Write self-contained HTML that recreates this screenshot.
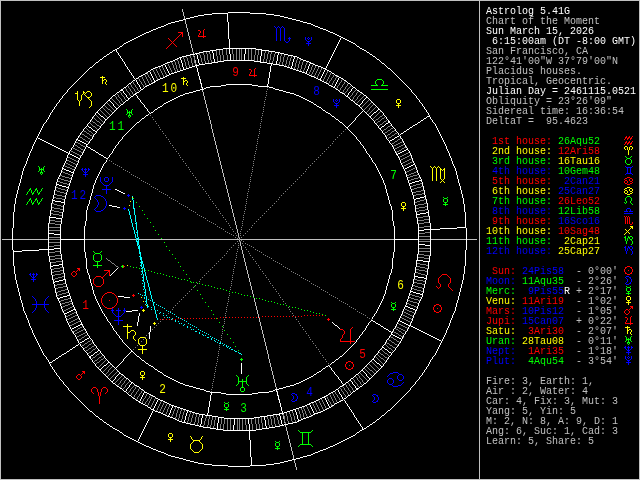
<!DOCTYPE html>
<html><head><meta charset="utf-8"><title>Astrolog 5.41G</title>
<style>
html,body{margin:0;padding:0;background:#000;overflow:hidden}
#c{position:relative;width:640px;height:480px;background:#000;overflow:hidden}
svg{position:absolute;left:0;top:0;will-change:transform}
svg text{font-family:"Liberation Mono",monospace;font-size:13px;text-anchor:middle;stroke:none}
#sb{position:absolute;left:486px;top:7px;font:10px/10px "Liberation Mono",monospace;color:#c0c0c0;will-change:transform}
.r{position:absolute;left:0;white-space:pre;height:10px}
.w{color:#fff}.g{color:#c0c0c0}.cr{color:#f00}.cy{color:#ff0}.cg{color:#0f0}.cb{color:#00f}
</style></head><body><div id="c">
<svg width="640" height="480" viewBox="0 0 640 480" shape-rendering="crispEdges" stroke-width="1" fill="none">
<path stroke="#c0c0c0" d="M2 239.5h475M182.5 9v3M183.5 12v4M184.5 16v4M185.5 20v4M186.5 24v4M187.5 28v4M188.5 32v4M189.5 36v4M190.5 40v4M191.5 44v4M192.5 48v4M193.5 52v4M194.5 56v4M195.5 60v4M196.5 64v4M197.5 68v4M198.5 72v4M199.5 76v4M200.5 80v4M201.5 84v4M202.5 88v4M203.5 92v4M204.5 96v4M205.5 100v4M206.5 104v4M207.5 108v4M208.5 112v4M209.5 116v4M210.5 120v4M211.5 124v5M212.5 129v4M213.5 133v4M214.5 137v4M215.5 141v4M216.5 145v4M217.5 149v4M218.5 153v4M219.5 157v4M220.5 161v4M221.5 165v4M222.5 169v4M223.5 173v4M224.5 177v4M225.5 181v4M226.5 185v4M227.5 189v4M228.5 193v4M229.5 197v4M230.5 201v4M231.5 205v4M232.5 209v4M233.5 213v4M234.5 217v4M235.5 221v4M236.5 225v4M237.5 229v4M238.5 233v4M239.5 237v5M240.5 242v4M241.5 246v4M242.5 250v4M243.5 254v4M244.5 258v4M245.5 262v4M246.5 266v4M247.5 270v4M248.5 274v4M249.5 278v4M250.5 282v4M251.5 286v4M252.5 290v4M253.5 294v4M254.5 298v4M255.5 302v4M256.5 306v4M257.5 310v4M258.5 314v4M259.5 318v4M260.5 322v4M261.5 326v4M262.5 330v4M263.5 334v4M264.5 338v4M265.5 342v4M266.5 346v4M267.5 350v4M268.5 354v5M269.5 359v4M270.5 363v4M271.5 367v4M272.5 371v4M273.5 375v4M274.5 379v4M275.5 383v4M276.5 387v4M277.5 391v4M278.5 395v4M279.5 399v4M280.5 403v4M281.5 407v4M282.5 411v4M283.5 415v4M284.5 419v4M285.5 423v4M286.5 427v4M287.5 431v4M288.5 435v4M289.5 439v4M290.5 443v4M291.5 447v4M292.5 451v4M293.5 455v4M294.5 459v4M295.5 463v4M296.5 467v3"/>
<path stroke="#808080" d="M232 48.5h1M236 48.5h1M239 48.5h1M241 48.5h1M219 49.5h1M222 49.5h1M226 49.5h1M232 49.5h1M236 49.5h1M239 49.5h1M241 49.5h1M248 49.5h1M251 49.5h1M255 49.5h1M258 49.5h1M216 50.5h1M219 50.5h1M222 50.5h1M226 50.5h1M232 50.5h1M236 50.5h1M239 50.5h1M241 50.5h1M248 50.5h1M251 50.5h1M255 50.5h1M258 50.5h1M265 50.5h1M206 51.5h1M209 51.5h1M216 51.5h1M219 51.5h1M222 51.5h1M226 51.5h1M232 51.5h1M236 51.5h1M239 51.5h1M241 51.5h1M248 51.5h1M251 51.5h1M255 51.5h1M258 51.5h1M265 51.5h1M268 51.5h1M271 51.5h1M203 52.5h1M206 52.5h1M209 52.5h1M216 52.5h1M219 52.5h1M222 52.5h1M226 52.5h1M232 52.5h1M236 52.5h1M239 52.5h1M241 52.5h1M248 52.5h1M251 52.5h1M255 52.5h1M258 52.5h1M265 52.5h1M268 52.5h1M271 52.5h1M275 52.5h1M199 53.5h1M203 53.5h1M206 53.5h1M209 53.5h1M216 53.5h1M219 53.5h1M222 53.5h1M226 53.5h1M232 53.5h1M236 53.5h1M239 53.5h1M241 53.5h1M248 53.5h1M251 53.5h1M255 53.5h1M258 53.5h1M264 53.5h1M268 53.5h1M271 53.5h1M275 53.5h1M281 53.5h1M193 54.5h1M199 54.5h1M203 54.5h1M207 54.5h1M210 54.5h1M216 54.5h1M219 54.5h1M222 54.5h1M226 54.5h1M233 54.5h1M236 54.5h1M239 54.5h1M241 54.5h1M248 54.5h1M251 54.5h1M255 54.5h1M258 54.5h1M264 54.5h1M267 54.5h1M270 54.5h1M274 54.5h1M281 54.5h1M284 54.5h1M190 55.5h1M193 55.5h1M200 55.5h1M204 55.5h1M207 55.5h1M210 55.5h1M216 55.5h1M220 55.5h1M223 55.5h1M227 55.5h1M233 55.5h1M236 55.5h1M239 55.5h1M241 55.5h1M248 55.5h1M251 55.5h1M254 55.5h1M257 55.5h1M264 55.5h1M267 55.5h1M270 55.5h1M274 55.5h1M281 55.5h1M284 55.5h1M288 55.5h1M186 56.5h1M190 56.5h1M193 56.5h1M200 56.5h1M204 56.5h1M207 56.5h1M210 56.5h1M217 56.5h1M220 56.5h1M223 56.5h1M227 56.5h1M233 56.5h1M236 56.5h1M239 56.5h1M241 56.5h1M248 56.5h1M251 56.5h1M254 56.5h1M257 56.5h1M264 56.5h1M267 56.5h1M270 56.5h1M274 56.5h1M280 56.5h1M284 56.5h1M288 56.5h1M291 56.5h1M183 57.5h1M186 57.5h1M190 57.5h1M194 57.5h1M200 57.5h1M204 57.5h1M207 57.5h1M210 57.5h1M217 57.5h1M220 57.5h1M223 57.5h1M227 57.5h1M233 57.5h1M236 57.5h1M239 57.5h1M241 57.5h1M248 57.5h1M251 57.5h1M254 57.5h1M257 57.5h1M264 57.5h1M267 57.5h1M270 57.5h1M273 57.5h1M280 57.5h1M283 57.5h1M287 57.5h1M291 57.5h1M183 58.5h1M187 58.5h1M191 58.5h1M194 58.5h1M201 58.5h1M204 58.5h1M207 58.5h1M210 58.5h1M217 58.5h1M220 58.5h1M223 58.5h1M227 58.5h1M233 58.5h1M236 58.5h1M239 58.5h1M241 58.5h1M248 58.5h1M251 58.5h1M254 58.5h1M257 58.5h1M264 58.5h1M267 58.5h1M270 58.5h1M273 58.5h1M280 58.5h1M283 58.5h1M287 58.5h1M290 58.5h1M297 58.5h1M177 59.5h1M184 59.5h1M187 59.5h1M191 59.5h1M194 59.5h1M201 59.5h1M204 59.5h1M207 59.5h1M210 59.5h1M217 59.5h1M220 59.5h1M223 59.5h1M227 59.5h1M233 59.5h1M236 59.5h1M239 59.5h1M241 59.5h1M248 59.5h1M251 59.5h1M254 59.5h1M257 59.5h1M263 59.5h1M266 59.5h1M270 59.5h1M273 59.5h1M280 59.5h1M283 59.5h1M287 59.5h1M290 59.5h1M297 59.5h1M300 59.5h1M174 60.5h1M177 60.5h1M184 60.5h1M187 60.5h1M191 60.5h1M194 60.5h1M201 60.5h1M204 60.5h1M208 60.5h1M211 60.5h1M217 60.5h1M220 60.5h1M223 60.5h1M227 60.5h1M251 60.5h1M254 60.5h1M257 60.5h1M263 60.5h1M266 60.5h1M269 60.5h1M273 60.5h1M280 60.5h1M283 60.5h1M286 60.5h1M290 60.5h1M296 60.5h1M300 60.5h1M303 60.5h1M171 61.5h1M174 61.5h1M178 61.5h1M184 61.5h1M188 61.5h1M191 61.5h1M194 61.5h1M201 61.5h1M205 61.5h1M208 61.5h1M211 61.5h1M217 61.5h1M263 61.5h1M266 61.5h1M269 61.5h1M272 61.5h1M280 61.5h1M283 61.5h1M286 61.5h1M289 61.5h1M296 61.5h1M299 61.5h1M303 61.5h1M307 61.5h1M167 62.5h1M171 62.5h1M175 62.5h1M178 62.5h1M185 62.5h1M188 62.5h1M191 62.5h1M194 62.5h1M202 62.5h1M205 62.5h1M208 62.5h1M211 62.5h1M269 62.5h1M272 62.5h1M279 62.5h1M282 62.5h1M286 62.5h1M289 62.5h1M296 62.5h1M299 62.5h1M302 62.5h1M307 62.5h1M167 63.5h1M172 63.5h1M175 63.5h1M178 63.5h1M185 63.5h1M188 63.5h1M192 63.5h1M195 63.5h1M202 63.5h1M205 63.5h1M279 63.5h1M282 63.5h1M286 63.5h1M289 63.5h1M295 63.5h1M299 63.5h1M302 63.5h1M306 63.5h1M313 63.5h1M168 64.5h1M172 64.5h1M175 64.5h1M179 64.5h1M185 64.5h1M188 64.5h1M192 64.5h1M195 64.5h1M279 64.5h1M282 64.5h1M285 64.5h1M289 64.5h1M295 64.5h1M298 64.5h1M302 64.5h1M306 64.5h1M313 64.5h1M161 65.5h1M168 65.5h1M173 65.5h1M176 65.5h1M179 65.5h1M185 65.5h1M189 65.5h1M192 65.5h1M195 65.5h1M285 65.5h1M288 65.5h1M295 65.5h1M298 65.5h1M301 65.5h1M305 65.5h1M312 65.5h1M316 65.5h1M158 66.5h1M162 66.5h1M169 66.5h1M173 66.5h1M176 66.5h1M179 66.5h1M186 66.5h1M189 66.5h1M288 66.5h1M295 66.5h1M298 66.5h1M301 66.5h1M305 66.5h1M312 66.5h1M315 66.5h1M319 66.5h1M159 67.5h1M162 67.5h1M169 67.5h1M173 67.5h1M176 67.5h1M179 67.5h1M186 67.5h1M294 67.5h1M298 67.5h1M301 67.5h1M305 67.5h1M311 67.5h1M315 67.5h1M318 67.5h1M322 67.5h1M155 68.5h1M159 68.5h1M163 68.5h1M170 68.5h1M174 68.5h1M176 68.5h1M180 68.5h1M294 68.5h1M297 68.5h1M301 68.5h1M304 68.5h1M311 68.5h1M314 68.5h1M318 68.5h1M321 68.5h1M152 69.5h1M156 69.5h1M160 69.5h1M163 69.5h1M170 69.5h1M174 69.5h1M177 69.5h1M180 69.5h1M297 69.5h1M300 69.5h1M304 69.5h1M311 69.5h1M314 69.5h1M317 69.5h1M321 69.5h1M153 70.5h1M156 70.5h1M160 70.5h1M164 70.5h1M171 70.5h1M175 70.5h1M177 70.5h1M300 70.5h1M303 70.5h1M310 70.5h1M313 70.5h1M317 70.5h1M320 70.5h1M328 70.5h1M153 71.5h1M157 71.5h1M161 71.5h1M164 71.5h1M171 71.5h1M175 71.5h1M303 71.5h1M310 71.5h1M313 71.5h1M316 71.5h1M320 71.5h1M327 71.5h1M146 72.5h1M154 72.5h1M157 72.5h1M161 72.5h1M165 72.5h1M172 72.5h1M309 72.5h1M312 72.5h1M316 72.5h1M319 72.5h1M327 72.5h1M331 72.5h1M147 73.5h1M154 73.5h1M158 73.5h1M162 73.5h1M165 73.5h1M172 73.5h1M309 73.5h1M312 73.5h1M315 73.5h1M319 73.5h1M326 73.5h1M330 73.5h1M144 74.5h1M147 74.5h1M155 74.5h1M158 74.5h1M162 74.5h1M166 74.5h1M311 74.5h1M315 74.5h1M318 74.5h1M326 74.5h1M330 74.5h1M334 74.5h1M145 75.5h1M148 75.5h1M155 75.5h1M159 75.5h1M163 75.5h1M166 75.5h1M311 75.5h1M314 75.5h1M318 75.5h1M325 75.5h1M329 75.5h1M333 75.5h1M337 75.5h1M141 76.5h1M145 76.5h1M148 76.5h1M156 76.5h1M159 76.5h1M163 76.5h1M314 76.5h1M317 76.5h1M325 76.5h1M329 76.5h1M333 76.5h1M336 76.5h1M142 77.5h1M146 77.5h1M149 77.5h1M156 77.5h1M160 77.5h1M317 77.5h1M324 77.5h1M328 77.5h1M332 77.5h1M336 77.5h1M138 78.5h1M142 78.5h1M146 78.5h1M150 78.5h1M157 78.5h1M160 78.5h1M324 78.5h1M328 78.5h1M331 78.5h1M335 78.5h1M139 79.5h1M143 79.5h1M147 79.5h1M150 79.5h1M157 79.5h1M323 79.5h1M327 79.5h1M331 79.5h1M335 79.5h1M342 79.5h1M139 80.5h1M143 80.5h1M147 80.5h1M151 80.5h1M323 80.5h1M327 80.5h1M330 80.5h1M334 80.5h1M341 80.5h1M132 81.5h1M140 81.5h1M144 81.5h1M148 81.5h1M151 81.5h1M326 81.5h1M329 81.5h1M333 81.5h1M341 81.5h1M345 81.5h1M133 82.5h1M141 82.5h1M144 82.5h1M148 82.5h1M152 82.5h1M326 82.5h1M329 82.5h1M333 82.5h1M340 82.5h1M344 82.5h1M129 83.5h1M133 83.5h1M141 83.5h1M145 83.5h1M149 83.5h1M328 83.5h1M332 83.5h1M339 83.5h1M344 83.5h1M348 83.5h1M130 84.5h1M134 84.5h1M142 84.5h1M145 84.5h1M149 84.5h1M332 84.5h1M339 84.5h1M343 84.5h1M347 84.5h1M127 85.5h1M131 85.5h1M135 85.5h1M143 85.5h1M146 85.5h1M331 85.5h1M338 85.5h1M342 85.5h1M347 85.5h1M351 85.5h1M128 86.5h1M131 86.5h1M135 86.5h1M143 86.5h1M337 86.5h1M342 86.5h1M346 86.5h1M350 86.5h1M124 87.5h1M128 87.5h1M132 87.5h1M136 87.5h1M144 87.5h1M337 87.5h1M341 87.5h1M345 87.5h1M349 87.5h1M125 88.5h1M129 88.5h1M133 88.5h1M137 88.5h1M336 88.5h1M340 88.5h1M345 88.5h1M348 88.5h1M126 89.5h1M130 89.5h1M134 89.5h1M137 89.5h1M340 89.5h1M344 89.5h1M347 89.5h1M356 89.5h1M126 90.5h1M130 90.5h1M134 90.5h1M138 90.5h1M339 90.5h1M343 90.5h1M347 90.5h1M355 90.5h1M119 91.5h1M127 91.5h1M131 91.5h1M135 91.5h1M343 91.5h1M346 91.5h1M354 91.5h1M358 91.5h1M120 92.5h1M128 92.5h1M132 92.5h1M136 92.5h1M342 92.5h1M345 92.5h1M353 92.5h1M357 92.5h1M116 93.5h1M121 93.5h1M129 93.5h1M132 93.5h1M344 93.5h1M352 93.5h1M356 93.5h1M361 93.5h1M117 94.5h1M121 94.5h1M129 94.5h1M133 94.5h1M352 94.5h1M356 94.5h1M360 94.5h1M114 95.5h1M118 95.5h1M122 95.5h1M130 95.5h1M351 95.5h1M355 95.5h1M359 95.5h1M364 95.5h1M115 96.5h1M118 96.5h1M123 96.5h1M131 96.5h1M350 96.5h1M354 96.5h1M358 96.5h1M363 96.5h1M116 97.5h1M119 97.5h1M124 97.5h1M349 97.5h1M353 97.5h1M357 97.5h1M362 97.5h1M111 98.5h1M116 98.5h1M120 98.5h1M124 98.5h1M353 98.5h1M357 98.5h1M361 98.5h1M112 99.5h1M117 99.5h1M121 99.5h1M125 99.5h1M352 99.5h1M356 99.5h1M360 99.5h1M369 99.5h1M113 100.5h1M118 100.5h1M121 100.5h1M126 100.5h1M355 100.5h1M359 100.5h1M368 100.5h1M114 101.5h1M119 101.5h1M122 101.5h1M354 101.5h1M358 101.5h1M367 101.5h1M106 102.5h1M115 102.5h1M119 102.5h1M123 102.5h1M357 102.5h1M366 102.5h1M371 102.5h1M107 103.5h1M116 103.5h1M120 103.5h1M356 103.5h1M365 103.5h1M370 103.5h1M108 104.5h1M117 104.5h1M121 104.5h1M364 104.5h1M369 104.5h1M373 104.5h1M104 105.5h1M109 105.5h1M118 105.5h1M363 105.5h1M368 105.5h1M372 105.5h1M105 106.5h1M110 106.5h1M119 106.5h1M362 106.5h1M367 106.5h1M371 106.5h1M376 106.5h1M102 107.5h1M106 107.5h1M111 107.5h1M361 107.5h1M366 107.5h1M370 107.5h1M375 107.5h1M103 108.5h1M107 108.5h1M112 108.5h1M365 108.5h1M369 108.5h1M374 108.5h1M99 109.5h1M104 109.5h1M108 109.5h2M113 109.5h1M364 109.5h1M369 109.5h1M373 109.5h1M100 110.5h1M105 110.5h1M110 110.5h1M114 110.5h1M363 110.5h1M368 110.5h1M372 110.5h1M101 111.5h1M106 111.5h1M111 111.5h1M367 111.5h1M371 111.5h1M380 111.5h1M102 112.5h1M107 112.5h1M112 112.5h1M366 112.5h1M370 112.5h1M379 112.5h1M103 113.5h1M108 113.5h1M369 113.5h1M378 113.5h1M95 114.5h1M104 114.5h1M109 114.5h1M368 114.5h1M377 114.5h1M383 114.5h1M96 115.5h1M105 115.5h1M110 115.5h1M376 115.5h1M382 115.5h1M97 116.5h1M106 116.5h1M375 116.5h1M380 116.5h2M385 116.5h1M93 117.5h1M98 117.5h1M107 117.5h1M374 117.5h1M379 117.5h1M384 117.5h1M94 118.5h1M99 118.5h1M373 118.5h1M378 118.5h1M382 118.5h2M95 119.5h1M100 119.5h1M372 119.5h1M376 119.5h2M381 119.5h1M387 119.5h1M91 120.5h1M96 120.5h1M101 120.5h1M375 120.5h1M380 120.5h1M386 120.5h1M92 121.5h1M97 121.5h2M102 121.5h1M374 121.5h1M378 121.5h2M384 121.5h2M89 122.5h1M93 122.5h2M99 122.5h1M103 122.5h1M377 122.5h1M383 122.5h1M90 123.5h1M95 123.5h1M100 123.5h1M376 123.5h1M382 123.5h1M91 124.5h1M96 124.5h1M101 124.5h1M380 124.5h2M391 124.5h1M92 125.5h1M97 125.5h2M379 125.5h1M390 125.5h1M93 126.5h2M99 126.5h1M378 126.5h1M388 126.5h2M85 127.5h1M95 127.5h1M387 127.5h1M393 127.5h1M86 128.5h1M96 128.5h1M386 128.5h1M391 128.5h2M87 129.5h1M97 129.5h1M384 129.5h2M390 129.5h1M395 129.5h1M83 130.5h1M88 130.5h1M383 130.5h1M388 130.5h2M394 130.5h1M84 131.5h2M89 131.5h2M382 131.5h1M387 131.5h1M392 131.5h2M86 132.5h1M91 132.5h1M385 132.5h2M391 132.5h1M397 132.5h1M81 133.5h1M87 133.5h2M92 133.5h1M384 133.5h1M390 133.5h1M395 133.5h2M82 134.5h2M89 134.5h1M93 134.5h1M388 134.5h2M394 134.5h1M84 135.5h1M90 135.5h2M387 135.5h1M392 135.5h2M79 136.5h1M85 136.5h2M92 136.5h1M386 136.5h1M391 136.5h1M80 137.5h2M87 137.5h1M389 137.5h2M82 138.5h1M88 138.5h2M388 138.5h1M400 138.5h1M83 139.5h2M90 139.5h1M398 139.5h2M85 140.5h1M397 140.5h1M75 141.5h1M86 141.5h2M395 141.5h2M402 141.5h1M76 142.5h2M88 142.5h1M394 142.5h1M400 142.5h2M78 143.5h2M392 143.5h2M398 143.5h2M74 144.5h1M80 144.5h1M391 144.5h1M396 144.5h2M403 144.5h2M75 145.5h2M81 145.5h2M394 145.5h2M401 145.5h2M77 146.5h1M83 146.5h2M393 146.5h1M399 146.5h2M406 146.5h1M72 147.5h1M78 147.5h2M85 147.5h1M397 147.5h2M404 147.5h2M73 148.5h2M80 148.5h1M395 148.5h2M402 148.5h2M75 149.5h2M81 149.5h2M394 149.5h1M401 149.5h1M70 150.5h1M77 150.5h2M83 150.5h1M399 150.5h2M71 151.5h2M79 151.5h2M397 151.5h2M73 152.5h2M81 152.5h2M396 152.5h1M408 152.5h2M75 153.5h2M406 153.5h2M77 154.5h2M404 154.5h2M79 155.5h2M402 155.5h2M409 155.5h2M67 156.5h1M400 156.5h2M407 156.5h2M68 157.5h2M399 157.5h1M405 157.5h2M70 158.5h2M403 158.5h2M411 158.5h2M66 159.5h1M72 159.5h2M401 159.5h2M409 159.5h2M67 160.5h2M74 160.5h2M400 160.5h1M407 160.5h2M69 161.5h2M76 161.5h2M405 161.5h2M412 161.5h2M65 162.5h1M71 162.5h2M403 162.5h2M410 162.5h2M66 163.5h2M73 163.5h2M402 163.5h1M408 163.5h2M68 164.5h2M75 164.5h2M406 164.5h2M63 165.5h2M70 165.5h2M404 165.5h2M65 166.5h2M72 166.5h2M403 166.5h1M67 167.5h3M74 167.5h2M415 167.5h2M70 168.5h2M413 168.5h2M72 169.5h2M411 169.5h2M409 170.5h2M61 171.5h2M407 171.5h2M416 171.5h2M63 172.5h2M405 172.5h2M414 172.5h2M65 173.5h3M411 173.5h3M68 174.5h2M409 174.5h2M417 174.5h2M60 175.5h2M70 175.5h2M407 175.5h2M413 175.5h4M62 176.5h3M410 176.5h3M65 177.5h4M408 177.5h2M418 177.5h2M59 178.5h2M69 178.5h2M414 178.5h4M61 179.5h3M411 179.5h3M64 180.5h4M409 180.5h2M58 181.5h2M68 181.5h2M60 182.5h3M63 183.5h4M420 183.5h2M67 184.5h2M416 184.5h4M413 185.5h3M411 186.5h2M421 186.5h2M56 187.5h2M417 187.5h4M58 188.5h3M414 188.5h3M61 189.5h4M412 189.5h2M55 190.5h2M65 190.5h2M421 190.5h3M57 191.5h3M416 191.5h5M60 192.5h4M413 192.5h3M64 193.5h2M422 193.5h3M54 194.5h3M416 194.5h6M57 195.5h5M413 195.5h3M62 196.5h3M53 197.5h3M56 198.5h6M62 199.5h3M424 199.5h2M420 200.5h4M417 201.5h3M415 202.5h2M52 203.5h2M424 203.5h3M54 204.5h3M418 204.5h6M57 205.5h4M415 205.5h3M61 206.5h2M425 206.5h3M51 207.5h3M419 207.5h6M54 208.5h6M416 208.5h3M60 209.5h3M425 209.5h3M51 210.5h3M419 210.5h6M54 211.5h5M416 211.5h3M59 212.5h3M50 213.5h3M53 214.5h6M59 215.5h3M423 216.5h6M417 217.5h6M424 219.5h6M49 220.5h6M418 220.5h6M55 221.5h6M424 222.5h6M49 223.5h6M418 223.5h6M55 224.5h6M424 226.5h6M49 227.5h12M418 227.5h6M49 230.5h11M425 232.5h6M419 233.5h6M419 236.5h12M48 237.5h12M48 239.5h12M419 239.5h12M419 241.5h12M48 242.5h12M54 245.5h6M48 246.5h6M419 248.5h11M55 251.5h6M418 251.5h12M49 252.5h6M418 254.5h6M55 255.5h6M424 255.5h6M49 256.5h6M418 257.5h6M55 258.5h6M424 258.5h6M49 259.5h6M56 261.5h6M50 262.5h6M417 263.5h3M420 264.5h6M426 265.5h3M417 266.5h3M60 267.5h3M420 267.5h5M54 268.5h6M425 268.5h3M51 269.5h3M416 269.5h3M60 270.5h3M419 270.5h6M54 271.5h6M425 271.5h3M51 272.5h3M416 272.5h2M61 273.5h3M418 273.5h3M55 274.5h6M421 274.5h4M52 275.5h3M425 275.5h2M62 276.5h2M58 277.5h4M55 278.5h3M53 279.5h2M414 279.5h3M417 280.5h6M423 281.5h3M414 282.5h3M63 283.5h3M417 283.5h5M57 284.5h6M422 284.5h3M54 285.5h3M413 285.5h2M63 286.5h3M415 286.5h3M58 287.5h5M418 287.5h4M55 288.5h3M412 288.5h2M422 288.5h2M65 289.5h2M414 289.5h3M61 290.5h4M417 290.5h4M58 291.5h3M421 291.5h2M56 292.5h2M66 292.5h2M62 293.5h4M59 294.5h3M410 294.5h2M57 295.5h2M412 295.5h3M415 296.5h4M409 297.5h2M419 297.5h2M68 298.5h2M411 298.5h3M64 299.5h4M414 299.5h4M61 300.5h3M408 300.5h2M418 300.5h2M59 301.5h2M69 301.5h2M410 301.5h3M65 302.5h4M413 302.5h4M62 303.5h3M70 303.5h2M407 303.5h2M417 303.5h2M60 304.5h2M68 304.5h2M409 304.5h2M65 305.5h3M411 305.5h3M63 306.5h2M72 306.5h2M414 306.5h2M61 307.5h2M70 307.5h2M416 307.5h2M68 308.5h2M66 309.5h2M405 309.5h2M64 310.5h2M407 310.5h2M62 311.5h2M403 311.5h1M409 311.5h3M74 312.5h2M404 312.5h2M412 312.5h2M72 313.5h2M406 313.5h2M414 313.5h2M70 314.5h2M402 314.5h1M408 314.5h2M68 315.5h2M75 315.5h2M403 315.5h2M410 315.5h2M66 316.5h2M73 316.5h2M405 316.5h2M412 316.5h2M65 317.5h1M71 317.5h2M401 317.5h1M407 317.5h2M69 318.5h2M77 318.5h2M402 318.5h2M409 318.5h2M67 319.5h2M75 319.5h2M404 319.5h2M411 319.5h2M66 320.5h1M73 320.5h2M406 320.5h2M71 321.5h2M78 321.5h2M408 321.5h2M69 322.5h2M76 322.5h2M410 322.5h2M68 323.5h1M74 323.5h2M398 323.5h1M72 324.5h2M399 324.5h2M70 325.5h2M401 325.5h2M69 326.5h1M82 326.5h1M396 326.5h1M403 326.5h2M80 327.5h2M397 327.5h2M405 327.5h2M78 328.5h2M395 328.5h1M399 328.5h2M407 328.5h2M77 329.5h1M83 329.5h2M396 329.5h2M401 329.5h2M75 330.5h2M81 330.5h2M398 330.5h1M403 330.5h2M73 331.5h2M79 331.5h2M393 331.5h1M399 331.5h2M405 331.5h2M72 332.5h1M77 332.5h2M85 332.5h1M394 332.5h2M401 332.5h1M75 333.5h2M83 333.5h2M396 333.5h2M402 333.5h2M74 334.5h1M81 334.5h2M87 334.5h1M398 334.5h1M404 334.5h1M79 335.5h2M85 335.5h2M399 335.5h2M77 336.5h2M84 336.5h1M390 336.5h1M401 336.5h2M76 337.5h1M82 337.5h2M391 337.5h2M403 337.5h1M81 338.5h1M393 338.5h1M79 339.5h2M388 339.5h1M394 339.5h2M78 340.5h1M90 340.5h1M389 340.5h2M396 340.5h1M88 341.5h2M391 341.5h1M397 341.5h2M87 342.5h1M92 342.5h1M386 342.5h1M392 342.5h2M399 342.5h1M85 343.5h2M91 343.5h1M387 343.5h2M394 343.5h1M84 344.5h1M89 344.5h2M385 344.5h1M389 344.5h1M395 344.5h2M82 345.5h2M88 345.5h1M94 345.5h1M386 345.5h1M390 345.5h2M397 345.5h1M81 346.5h1M87 346.5h1M92 346.5h2M387 346.5h1M392 346.5h1M85 347.5h2M91 347.5h1M96 347.5h1M388 347.5h1M393 347.5h2M84 348.5h1M89 348.5h2M95 348.5h1M389 348.5h2M395 348.5h1M83 349.5h1M88 349.5h1M93 349.5h2M381 349.5h1M391 349.5h1M86 350.5h2M92 350.5h1M382 350.5h1M392 350.5h1M85 351.5h1M91 351.5h1M383 351.5h1M393 351.5h1M89 352.5h2M100 352.5h1M379 352.5h1M384 352.5h1M88 353.5h1M99 353.5h1M380 353.5h1M385 353.5h2M87 354.5h1M97 354.5h2M377 354.5h1M381 354.5h2M387 354.5h1M96 355.5h1M102 355.5h1M378 355.5h1M383 355.5h1M388 355.5h1M95 356.5h1M101 356.5h1M375 356.5h1M379 356.5h1M384 356.5h1M389 356.5h1M93 357.5h2M99 357.5h2M104 357.5h1M376 357.5h1M380 357.5h1M385 357.5h2M92 358.5h1M98 358.5h1M103 358.5h1M377 358.5h1M381 358.5h2M387 358.5h1M91 359.5h1M97 359.5h1M101 359.5h2M106 359.5h1M378 359.5h1M383 359.5h1M95 360.5h2M100 360.5h1M105 360.5h1M379 360.5h1M384 360.5h1M94 361.5h1M99 361.5h1M104 361.5h1M371 361.5h1M380 361.5h1M385 361.5h1M93 362.5h1M97 362.5h2M103 362.5h1M372 362.5h1M381 362.5h1M96 363.5h1M102 363.5h1M368 363.5h1M373 363.5h1M382 363.5h1M95 364.5h1M101 364.5h1M110 364.5h1M369 364.5h1M374 364.5h1M383 364.5h1M100 365.5h1M109 365.5h1M370 365.5h1M375 365.5h1M99 366.5h1M108 366.5h1M112 366.5h1M366 366.5h1M371 366.5h1M376 366.5h1M98 367.5h1M107 367.5h1M111 367.5h1M367 367.5h1M372 367.5h1M377 367.5h1M106 368.5h1M110 368.5h1M115 368.5h1M364 368.5h1M368 368.5h1M373 368.5h1M378 368.5h1M105 369.5h1M109 369.5h1M114 369.5h1M365 369.5h1M369 369.5h1M374 369.5h1M379 369.5h1M104 370.5h1M108 370.5h1M113 370.5h1M366 370.5h1M370 370.5h2M375 370.5h1M103 371.5h1M108 371.5h1M112 371.5h1M117 371.5h1M367 371.5h1M372 371.5h1M376 371.5h1M102 372.5h1M107 372.5h1M111 372.5h1M116 372.5h1M359 372.5h1M368 372.5h1M373 372.5h1M106 373.5h1M110 373.5h1M115 373.5h1M360 373.5h1M369 373.5h1M374 373.5h1M105 374.5h1M109 374.5h1M114 374.5h1M357 374.5h1M361 374.5h1M370 374.5h1M108 375.5h1M113 375.5h1M122 375.5h1M358 375.5h1M362 375.5h1M371 375.5h1M107 376.5h1M112 376.5h1M121 376.5h1M355 376.5h1M359 376.5h1M363 376.5h1M372 376.5h1M111 377.5h1M120 377.5h1M124 377.5h1M356 377.5h1M359 377.5h1M364 377.5h1M110 378.5h1M119 378.5h1M123 378.5h1M352 378.5h1M357 378.5h1M360 378.5h1M365 378.5h1M109 379.5h1M118 379.5h1M122 379.5h1M126 379.5h1M353 379.5h1M357 379.5h1M361 379.5h1M366 379.5h1M117 380.5h1M121 380.5h1M125 380.5h1M354 380.5h1M358 380.5h1M362 380.5h1M367 380.5h1M116 381.5h1M120 381.5h1M124 381.5h1M129 381.5h1M354 381.5h1M359 381.5h1M362 381.5h1M115 382.5h1M120 382.5h1M124 382.5h1M128 382.5h1M347 382.5h1M355 382.5h1M360 382.5h1M363 382.5h1M114 383.5h1M119 383.5h1M123 383.5h1M127 383.5h1M348 383.5h1M356 383.5h1M360 383.5h1M364 383.5h1M118 384.5h1M122 384.5h1M126 384.5h1M345 384.5h1M349 384.5h1M357 384.5h1M361 384.5h1M117 385.5h1M121 385.5h1M125 385.5h1M134 385.5h1M346 385.5h1M349 385.5h1M357 385.5h1M362 385.5h1M121 386.5h1M125 386.5h1M133 386.5h1M136 386.5h1M342 386.5h1M346 386.5h1M350 386.5h1M358 386.5h1M120 387.5h1M124 387.5h1M132 387.5h1M135 387.5h1M343 387.5h1M347 387.5h1M351 387.5h1M359 387.5h1M123 388.5h1M131 388.5h1M135 388.5h1M139 388.5h1M340 388.5h1M344 388.5h1M348 388.5h1M352 388.5h1M122 389.5h1M130 389.5h1M134 389.5h1M138 389.5h1M341 389.5h1M344 389.5h1M348 389.5h1M352 389.5h1M130 390.5h1M133 390.5h1M138 390.5h1M142 390.5h1M341 390.5h1M345 390.5h1M349 390.5h1M353 390.5h1M129 391.5h1M133 391.5h1M137 391.5h1M141 391.5h1M334 391.5h1M342 391.5h1M346 391.5h1M350 391.5h1M354 391.5h1M128 392.5h1M132 392.5h1M136 392.5h1M141 392.5h1M335 392.5h1M343 392.5h1M347 392.5h1M350 392.5h1M127 393.5h1M131 393.5h1M136 393.5h1M140 393.5h1M147 393.5h1M332 393.5h1M335 393.5h1M343 393.5h1M347 393.5h1M351 393.5h1M131 394.5h1M135 394.5h1M139 394.5h1M146 394.5h1M329 394.5h1M333 394.5h1M336 394.5h1M344 394.5h1M348 394.5h1M130 395.5h1M134 395.5h1M139 395.5h1M146 395.5h1M150 395.5h1M330 395.5h1M333 395.5h1M337 395.5h1M345 395.5h1M349 395.5h1M134 396.5h1M138 396.5h1M145 396.5h1M149 396.5h1M152 396.5h1M326 396.5h1M330 396.5h1M334 396.5h1M337 396.5h1M345 396.5h1M133 397.5h1M137 397.5h1M145 397.5h1M149 397.5h1M151 397.5h1M327 397.5h1M331 397.5h1M334 397.5h1M338 397.5h1M346 397.5h1M137 398.5h1M144 398.5h1M148 398.5h1M151 398.5h1M155 398.5h1M327 398.5h1M331 398.5h1M335 398.5h1M339 398.5h1M136 399.5h1M143 399.5h1M147 399.5h1M150 399.5h1M154 399.5h1M321 399.5h1M328 399.5h1M332 399.5h1M335 399.5h1M339 399.5h1M143 400.5h1M147 400.5h1M150 400.5h1M154 400.5h1M318 400.5h1M322 400.5h1M328 400.5h1M332 400.5h1M336 400.5h1M340 400.5h1M142 401.5h1M146 401.5h1M149 401.5h1M153 401.5h1M161 401.5h1M319 401.5h1M322 401.5h1M329 401.5h1M333 401.5h1M336 401.5h1M142 402.5h1M145 402.5h1M149 402.5h1M153 402.5h1M160 402.5h1M164 402.5h1M315 402.5h1M319 402.5h1M323 402.5h1M330 402.5h1M333 402.5h1M337 402.5h1M141 403.5h1M145 403.5h1M148 403.5h1M152 403.5h1M160 403.5h1M163 403.5h1M167 403.5h1M312 403.5h1M316 403.5h1M320 403.5h1M323 403.5h1M330 403.5h1M334 403.5h1M144 404.5h1M148 404.5h1M152 404.5h1M159 404.5h1M163 404.5h1M166 404.5h1M313 404.5h1M316 404.5h1M320 404.5h1M324 404.5h1M331 404.5h1M334 404.5h1M147 405.5h1M151 405.5h1M159 405.5h1M162 405.5h1M166 405.5h1M169 405.5h1M306 405.5h1M313 405.5h1M317 405.5h1M321 405.5h1M324 405.5h1M331 405.5h1M147 406.5h1M151 406.5h1M158 406.5h1M162 406.5h1M165 406.5h1M169 406.5h1M306 406.5h1M314 406.5h1M317 406.5h1M321 406.5h1M325 406.5h1M332 406.5h1M150 407.5h1M158 407.5h1M161 407.5h1M165 407.5h1M168 407.5h1M175 407.5h1M303 407.5h1M307 407.5h1M314 407.5h1M318 407.5h1M322 407.5h1M325 407.5h1M150 408.5h1M157 408.5h1M161 408.5h1M164 408.5h1M168 408.5h1M175 408.5h1M178 408.5h1M301 408.5h1M303 408.5h1M307 408.5h1M315 408.5h1M318 408.5h1M322 408.5h1M326 408.5h1M157 409.5h1M160 409.5h1M164 409.5h1M167 409.5h1M174 409.5h1M178 409.5h1M181 409.5h1M298 409.5h1M301 409.5h1M304 409.5h1M308 409.5h1M315 409.5h1M319 409.5h1M323 409.5h1M326 409.5h1M156 410.5h1M160 410.5h1M163 410.5h1M167 410.5h1M174 410.5h1M177 410.5h1M181 410.5h1M184 410.5h1M298 410.5h1M302 410.5h1M304 410.5h1M308 410.5h1M316 410.5h1M319 410.5h1M323 410.5h1M156 411.5h1M159 411.5h1M163 411.5h1M167 411.5h1M173 411.5h1M177 411.5h1M180 411.5h1M184 411.5h1M292 411.5h1M299 411.5h1M302 411.5h1M305 411.5h1M309 411.5h1M316 411.5h1M320 411.5h1M159 412.5h1M162 412.5h1M166 412.5h1M173 412.5h1M177 412.5h1M180 412.5h1M183 412.5h1M190 412.5h1M289 412.5h1M292 412.5h1M299 412.5h1M302 412.5h1M305 412.5h1M309 412.5h1M317 412.5h1M320 412.5h1M162 413.5h1M166 413.5h1M173 413.5h1M176 413.5h1M180 413.5h1M183 413.5h1M190 413.5h1M193 413.5h1M283 413.5h1M286 413.5h1M289 413.5h1M293 413.5h1M299 413.5h1M303 413.5h1M305 413.5h1M310 413.5h1M317 413.5h1M165 414.5h1M172 414.5h1M176 414.5h1M179 414.5h1M183 414.5h1M189 414.5h1M193 414.5h1M196 414.5h1M199 414.5h1M283 414.5h1M286 414.5h1M290 414.5h1M293 414.5h1M300 414.5h1M303 414.5h1M306 414.5h1M310 414.5h1M165 415.5h1M172 415.5h1M176 415.5h1M179 415.5h1M182 415.5h1M189 415.5h1M192 415.5h1M196 415.5h1M199 415.5h1M273 415.5h1M276 415.5h1M283 415.5h1M286 415.5h1M290 415.5h1M293 415.5h1M300 415.5h1M303 415.5h1M306 415.5h1M311 415.5h1M171 416.5h1M176 416.5h1M179 416.5h1M182 416.5h1M189 416.5h1M192 416.5h1M196 416.5h1M199 416.5h1M206 416.5h1M209 416.5h1M267 416.5h1M270 416.5h1M273 416.5h1M276 416.5h1M284 416.5h1M287 416.5h1M290 416.5h1M294 416.5h1M300 416.5h1M303 416.5h1M307 416.5h1M311 416.5h1M171 417.5h1M175 417.5h1M179 417.5h1M182 417.5h1M188 417.5h1M192 417.5h1M195 417.5h1M198 417.5h1M206 417.5h1M209 417.5h1M212 417.5h1M215 417.5h1M261 417.5h1M267 417.5h1M270 417.5h1M273 417.5h1M277 417.5h1M284 417.5h1M287 417.5h1M291 417.5h1M294 417.5h1M300 417.5h1M304 417.5h1M307 417.5h1M175 418.5h1M178 418.5h1M182 418.5h1M188 418.5h1M191 418.5h1M195 418.5h1M198 418.5h1M205 418.5h1M209 418.5h1M212 418.5h1M215 418.5h1M221 418.5h1M224 418.5h1M227 418.5h1M251 418.5h1M255 418.5h1M258 418.5h1M261 418.5h1M267 418.5h1M270 418.5h1M274 418.5h1M277 418.5h1M284 418.5h1M287 418.5h1M291 418.5h1M294 418.5h1M301 418.5h1M304 418.5h1M178 419.5h1M181 419.5h1M188 419.5h1M191 419.5h1M195 419.5h1M198 419.5h1M205 419.5h1M208 419.5h1M212 419.5h1M215 419.5h1M221 419.5h1M224 419.5h1M227 419.5h1M230 419.5h1M237 419.5h1M239 419.5h1M242 419.5h1M245 419.5h1M251 419.5h1M255 419.5h1M258 419.5h1M261 419.5h1M268 419.5h1M271 419.5h1M274 419.5h1M277 419.5h1M284 419.5h1M287 419.5h1M291 419.5h1M294 419.5h1M301 419.5h1M181 420.5h1M188 420.5h1M191 420.5h1M195 420.5h1M198 420.5h1M205 420.5h1M208 420.5h1M211 420.5h1M214 420.5h1M221 420.5h1M224 420.5h1M227 420.5h1M230 420.5h1M237 420.5h1M239 420.5h1M242 420.5h1M245 420.5h1M251 420.5h1M255 420.5h1M258 420.5h1M261 420.5h1M268 420.5h1M271 420.5h1M274 420.5h1M278 420.5h1M284 420.5h1M287 420.5h1M291 420.5h1M295 420.5h1M187 421.5h1M191 421.5h1M195 421.5h1M198 421.5h1M204 421.5h1M208 421.5h1M211 421.5h1M214 421.5h1M221 421.5h1M224 421.5h1M227 421.5h1M230 421.5h1M237 421.5h1M239 421.5h1M242 421.5h1M245 421.5h1M251 421.5h1M255 421.5h1M258 421.5h1M261 421.5h1M268 421.5h1M271 421.5h1M274 421.5h1M278 421.5h1M284 421.5h1M288 421.5h1M292 421.5h1M295 421.5h1M187 422.5h1M190 422.5h1M194 422.5h1M198 422.5h1M204 422.5h1M208 422.5h1M211 422.5h1M214 422.5h1M221 422.5h1M224 422.5h1M227 422.5h1M230 422.5h1M237 422.5h1M239 422.5h1M242 422.5h1M245 422.5h1M251 422.5h1M255 422.5h1M258 422.5h1M261 422.5h1M268 422.5h1M271 422.5h1M274 422.5h1M278 422.5h1M285 422.5h1M288 422.5h1M292 422.5h1M190 423.5h1M194 423.5h1M197 423.5h1M204 423.5h1M208 423.5h1M211 423.5h1M214 423.5h1M221 423.5h1M224 423.5h1M227 423.5h1M230 423.5h1M237 423.5h1M239 423.5h1M242 423.5h1M245 423.5h1M251 423.5h1M255 423.5h1M258 423.5h1M262 423.5h1M268 423.5h1M271 423.5h1M274 423.5h1M278 423.5h1M285 423.5h1M288 423.5h1M194 424.5h1M197 424.5h1M204 424.5h1M208 424.5h1M211 424.5h1M214 424.5h1M220 424.5h1M223 424.5h1M227 424.5h1M230 424.5h1M237 424.5h1M239 424.5h1M242 424.5h1M245 424.5h1M252 424.5h1M256 424.5h1M259 424.5h1M262 424.5h1M268 424.5h1M271 424.5h1M275 424.5h1M279 424.5h1M285 424.5h1M197 425.5h1M203 425.5h1M207 425.5h1M210 425.5h1M214 425.5h1M220 425.5h1M223 425.5h1M227 425.5h1M230 425.5h1M237 425.5h1M239 425.5h1M242 425.5h1M246 425.5h1M252 425.5h1M256 425.5h1M259 425.5h1M262 425.5h1M269 425.5h1M272 425.5h1M275 425.5h1M279 425.5h1M203 426.5h1M207 426.5h1M210 426.5h1M213 426.5h1M220 426.5h1M223 426.5h1M227 426.5h1M230 426.5h1M237 426.5h1M239 426.5h1M242 426.5h1M246 426.5h1M252 426.5h1M256 426.5h1M259 426.5h1M262 426.5h1M269 426.5h1M272 426.5h1M275 426.5h1M207 427.5h1M210 427.5h1M213 427.5h1M220 427.5h1M223 427.5h1M227 427.5h1M230 427.5h1M237 427.5h1M239 427.5h1M242 427.5h1M246 427.5h1M252 427.5h1M256 427.5h1M259 427.5h1M262 427.5h1M269 427.5h1M272 427.5h1M213 428.5h1M220 428.5h1M223 428.5h1M227 428.5h1M230 428.5h1M237 428.5h1M239 428.5h1M242 428.5h1M246 428.5h1M252 428.5h1M256 428.5h1M259 428.5h1M262 428.5h1M220 429.5h1M223 429.5h1M227 429.5h1M230 429.5h1M237 429.5h1M239 429.5h1M242 429.5h1M246 429.5h1M252 429.5h1M256 429.5h1M259 429.5h1M237 430.5h1M239 430.5h1M242 430.5h1M246 430.5h1"/>
<path stroke="#fff" d="M245 48.5h1M229 49.5h1M245 49.5h1M212 50.5h1M229 50.5h1M245 50.5h1M261 50.5h1M212 51.5h1M229 51.5h1M245 51.5h1M261 51.5h1M212 52.5h1M229 52.5h1M245 52.5h1M261 52.5h1M278 52.5h1M196 53.5h1M213 53.5h1M229 53.5h1M245 53.5h1M261 53.5h1M278 53.5h1M196 54.5h1M213 54.5h1M230 54.5h1M244 54.5h1M261 54.5h1M278 54.5h1M197 55.5h1M213 55.5h1M230 55.5h1M244 55.5h1M261 55.5h1M277 55.5h1M197 56.5h1M213 56.5h1M230 56.5h1M244 56.5h1M260 56.5h1M277 56.5h1M197 57.5h1M213 57.5h1M230 57.5h1M244 57.5h1M260 57.5h1M277 57.5h1M294 57.5h1M180 58.5h1M197 58.5h1M213 58.5h1M230 58.5h1M244 58.5h1M260 58.5h1M277 58.5h1M294 58.5h1M180 59.5h1M198 59.5h1M214 59.5h1M230 59.5h1M244 59.5h1M260 59.5h1M277 59.5h1M293 59.5h1M181 60.5h1M198 60.5h1M214 60.5h1M260 60.5h1M277 60.5h1M293 60.5h1M181 61.5h1M198 61.5h1M214 61.5h1M260 61.5h1M276 61.5h1M293 61.5h1M181 62.5h1M198 62.5h1M276 62.5h1M292 62.5h1M310 62.5h1M182 63.5h1M199 63.5h1M276 63.5h1M292 63.5h1M310 63.5h1M164 64.5h1M182 64.5h1M199 64.5h1M292 64.5h1M309 64.5h1M165 65.5h1M182 65.5h1M292 65.5h1M309 65.5h1M165 66.5h1M182 66.5h1M291 66.5h1M308 66.5h1M166 67.5h1M183 67.5h1M291 67.5h1M308 67.5h1M166 68.5h1M183 68.5h1M308 68.5h1M167 69.5h1M307 69.5h1M325 69.5h1M167 70.5h1M307 70.5h1M324 70.5h1M149 71.5h1M168 71.5h1M306 71.5h1M324 71.5h1M150 72.5h1M168 72.5h1M306 72.5h1M323 72.5h1M150 73.5h1M169 73.5h1M323 73.5h1M151 74.5h1M169 74.5h1M322 74.5h1M151 75.5h1M322 75.5h1M152 76.5h1M321 76.5h1M152 77.5h1M321 77.5h1M339 77.5h1M153 78.5h1M320 78.5h1M338 78.5h1M135 79.5h1M153 79.5h1M320 79.5h1M338 79.5h1M136 80.5h1M154 80.5h1M337 80.5h1M136 81.5h1M154 81.5h1M337 81.5h1M137 82.5h1M336 82.5h1M137 83.5h1M336 83.5h1M138 84.5h1M335 84.5h1M139 85.5h1M335 85.5h1M139 86.5h1M334 86.5h1M140 87.5h1M353 87.5h1M140 88.5h1M352 88.5h1M121 89.5h1M141 89.5h1M351 89.5h1M122 90.5h1M351 90.5h1M123 91.5h1M350 91.5h1M123 92.5h1M349 92.5h1M124 93.5h1M348 93.5h1M125 94.5h1M348 94.5h1M126 95.5h1M347 95.5h1M126 96.5h1M127 97.5h1M366 97.5h1M128 98.5h1M365 98.5h1M364 99.5h1M109 100.5h1M363 100.5h1M110 101.5h1M362 101.5h1M111 102.5h1M362 102.5h1M112 103.5h1M361 103.5h1M113 104.5h1M360 104.5h1M113 105.5h1M359 105.5h1M114 106.5h1M115 107.5h1M116 108.5h1M378 109.5h1M377 110.5h1M376 111.5h1M97 112.5h1M374 112.5h2M98 113.5h1M373 113.5h1M99 114.5h1M372 114.5h1M100 115.5h1M371 115.5h1M101 116.5h2M370 116.5h1M103 117.5h1M104 118.5h1M105 119.5h1M389 121.5h1M388 122.5h1M386 123.5h2M385 124.5h1M87 125.5h1M384 125.5h1M88 126.5h1M382 126.5h2M89 127.5h2M381 127.5h1M91 128.5h1M380 128.5h1M92 129.5h1M93 130.5h2M95 131.5h1M399 135.5h1M397 136.5h2M395 137.5h2M394 138.5h1M77 139.5h1M392 139.5h2M78 140.5h2M390 140.5h2M80 141.5h2M389 141.5h1M82 142.5h2M84 143.5h2M86 144.5h1M406 149.5h2M404 150.5h2M402 151.5h2M400 152.5h2M69 153.5h1M398 153.5h2M70 154.5h2M397 154.5h1M72 155.5h2M74 156.5h2M76 157.5h2M78 158.5h2M413 164.5h2M411 165.5h2M409 166.5h2M407 167.5h2M62 168.5h2M405 168.5h2M64 169.5h2M404 169.5h1M66 170.5h3M69 171.5h2M71 172.5h2M419 180.5h2M415 181.5h4M412 182.5h3M410 183.5h2M57 184.5h2M59 185.5h3M62 186.5h4M66 187.5h2M424 196.5h2M420 197.5h4M416 198.5h4M414 199.5h2M52 200.5h3M55 201.5h6M61 202.5h3M426 212.5h3M420 213.5h6M417 214.5h3M50 217.5h6M56 218.5h6M424 229.5h6M419 230.5h5M48 233.5h6M54 234.5h6M419 244.5h6M425 245.5h6M54 248.5h6M49 249.5h5M417 260.5h6M423 261.5h6M59 264.5h3M53 265.5h6M50 266.5h3M415 276.5h3M418 277.5h6M424 278.5h3M63 279.5h2M59 280.5h4M55 281.5h4M53 282.5h2M411 291.5h2M413 292.5h3M416 293.5h4M420 294.5h2M67 295.5h2M63 296.5h4M60 297.5h3M58 298.5h2M406 306.5h2M408 307.5h2M410 308.5h3M73 309.5h2M413 309.5h2M71 310.5h2M415 310.5h2M69 311.5h2M67 312.5h2M65 313.5h2M64 314.5h1M399 320.5h1M400 321.5h2M402 322.5h2M404 323.5h2M80 324.5h2M406 324.5h2M78 325.5h2M408 325.5h2M76 326.5h2M74 327.5h2M72 328.5h2M71 329.5h1M392 334.5h1M393 335.5h2M395 336.5h2M89 337.5h1M397 337.5h2M87 338.5h2M399 338.5h2M85 339.5h2M401 339.5h1M84 340.5h1M82 341.5h2M80 342.5h2M79 343.5h1M383 347.5h1M384 348.5h1M385 349.5h2M98 350.5h1M387 350.5h1M97 351.5h1M388 351.5h1M95 352.5h2M389 352.5h2M94 353.5h1M391 353.5h1M93 354.5h1M91 355.5h2M90 356.5h1M89 357.5h1M373 359.5h1M374 360.5h1M375 361.5h1M108 362.5h1M376 362.5h1M107 363.5h1M377 363.5h2M106 364.5h1M379 364.5h1M104 365.5h2M380 365.5h1M103 366.5h1M381 366.5h1M102 367.5h1M101 368.5h1M100 369.5h1M362 370.5h1M363 371.5h1M364 372.5h1M119 373.5h1M365 373.5h1M118 374.5h1M366 374.5h1M117 375.5h1M366 375.5h1M116 376.5h1M367 376.5h1M115 377.5h1M368 377.5h1M115 378.5h1M369 378.5h1M114 379.5h1M113 380.5h1M350 380.5h1M112 381.5h1M351 381.5h1M352 382.5h1M131 383.5h1M352 383.5h1M130 384.5h1M353 384.5h1M129 385.5h1M354 385.5h1M129 386.5h1M355 386.5h1M128 387.5h1M355 387.5h1M127 388.5h1M356 388.5h1M126 389.5h1M337 389.5h1M357 389.5h1M126 390.5h1M338 390.5h1M125 391.5h1M338 391.5h1M144 392.5h1M339 392.5h1M143 393.5h1M339 393.5h1M143 394.5h1M340 394.5h1M142 395.5h1M341 395.5h1M142 396.5h1M341 396.5h1M141 397.5h1M324 397.5h1M342 397.5h1M141 398.5h1M325 398.5h1M342 398.5h1M140 399.5h1M158 399.5h1M325 399.5h1M343 399.5h1M140 400.5h1M157 400.5h1M326 400.5h1M139 401.5h1M157 401.5h1M326 401.5h1M156 402.5h1M327 402.5h1M156 403.5h1M327 403.5h1M155 404.5h1M309 404.5h1M328 404.5h1M155 405.5h1M310 405.5h1M328 405.5h1M154 406.5h1M172 406.5h1M310 406.5h1M329 406.5h1M154 407.5h1M172 407.5h1M311 407.5h1M329 407.5h1M153 408.5h1M171 408.5h1M311 408.5h1M153 409.5h1M171 409.5h1M312 409.5h1M170 410.5h1M295 410.5h1M312 410.5h1M170 411.5h1M187 411.5h1M295 411.5h1M313 411.5h1M170 412.5h1M187 412.5h1M296 412.5h1M313 412.5h1M169 413.5h1M186 413.5h1M296 413.5h1M314 413.5h1M169 414.5h1M186 414.5h1M279 414.5h1M296 414.5h1M314 414.5h1M168 415.5h1M186 415.5h1M202 415.5h1M279 415.5h1M297 415.5h1M168 416.5h1M185 416.5h1M202 416.5h1M280 416.5h1M297 416.5h1M185 417.5h1M202 417.5h1M218 417.5h1M264 417.5h1M280 417.5h1M297 417.5h1M185 418.5h1M201 418.5h1M218 418.5h1M264 418.5h1M280 418.5h1M297 418.5h1M185 419.5h1M201 419.5h1M218 419.5h1M234 419.5h1M248 419.5h1M264 419.5h1M280 419.5h1M298 419.5h1M184 420.5h1M201 420.5h1M218 420.5h1M234 420.5h1M248 420.5h1M265 420.5h1M281 420.5h1M298 420.5h1M184 421.5h1M201 421.5h1M218 421.5h1M234 421.5h1M248 421.5h1M265 421.5h1M281 421.5h1M201 422.5h1M218 422.5h1M234 422.5h1M248 422.5h1M265 422.5h1M281 422.5h1M201 423.5h1M217 423.5h1M234 423.5h1M248 423.5h1M265 423.5h1M281 423.5h1M200 424.5h1M217 424.5h1M234 424.5h1M249 424.5h1M265 424.5h1M282 424.5h1M200 425.5h1M217 425.5h1M233 425.5h1M249 425.5h1M265 425.5h1M282 425.5h1M200 426.5h1M217 426.5h1M233 426.5h1M249 426.5h1M266 426.5h1M217 427.5h1M233 427.5h1M249 427.5h1M266 427.5h1M217 428.5h1M233 428.5h1M249 428.5h1M266 428.5h1M233 429.5h1M249 429.5h1M233 430.5h1M228 12.5h22M212 13.5h16M250 13.5h16M204 14.5h8M266 14.5h8M198 15.5h6M274 15.5h6M194 16.5h4M280 16.5h4M190 17.5h4M284 17.5h4M186 18.5h4M288 18.5h4M183 19.5h3M292 19.5h4M179 20.5h4M296 20.5h4M175 21.5h4M300 21.5h3M171 22.5h4M303 22.5h4M168 23.5h3M307 23.5h4M166 24.5h2M311 24.5h2M164 25.5h2M313 25.5h2M161 26.5h3M315 26.5h3M158 27.5h3M318 27.5h2M156 28.5h2M320 28.5h3M153 29.5h3M323 29.5h3M151 30.5h2M326 30.5h2M149 31.5h2M328 31.5h2M146 32.5h3M330 32.5h3M144 33.5h2M333 33.5h2M142 34.5h2M335 34.5h2M140 35.5h2M337 35.5h2M138 36.5h2M339 36.5h2M136 37.5h2M341 37.5h2M134 38.5h2M343 38.5h2M132 39.5h2M345 39.5h2M130 40.5h2M347 40.5h2M128 41.5h2M349 41.5h2M126 42.5h2M351 42.5h2M124 43.5h2M353 43.5h2M123 44.5h1M355 44.5h1M122 45.5h1M356 45.5h1M120 46.5h2M357 46.5h2M119 47.5h1M359 47.5h1M117 48.5h2M223 48.5h33M360 48.5h2M115 49.5h2M216 49.5h7M256 49.5h6M362 49.5h2M113 50.5h2M210 50.5h6M262 50.5h7M364 50.5h2M112 51.5h1M203 51.5h7M269 51.5h6M366 51.5h1M110 52.5h2M199 52.5h4M275 52.5h5M367 52.5h2M109 53.5h1M195 53.5h4M280 53.5h4M369 53.5h1M107 54.5h2M190 54.5h5M284 54.5h4M370 54.5h2M106 55.5h1M186 55.5h4M288 55.5h5M372 55.5h1M104 56.5h2M182 56.5h4M293 56.5h4M373 56.5h2M103 57.5h1M179 57.5h3M297 57.5h2M375 57.5h1M102 58.5h1M177 58.5h2M299 58.5h2M376 58.5h1M100 59.5h2M175 59.5h2M301 59.5h2M377 59.5h2M99 60.5h1M173 60.5h2M224 60.5h30M303 60.5h3M379 60.5h1M98 61.5h1M170 61.5h3M218 61.5h6M254 61.5h6M306 61.5h3M380 61.5h1M96 62.5h2M167 62.5h3M212 62.5h6M260 62.5h7M309 62.5h2M381 62.5h1M95 63.5h1M165 63.5h2M205 63.5h7M267 63.5h6M311 63.5h2M382 63.5h2M94 64.5h1M163 64.5h2M199 64.5h6M273 64.5h6M313 64.5h2M384 64.5h1M93 65.5h1M161 65.5h2M195 65.5h4M279 65.5h5M315 65.5h3M385 65.5h1M92 66.5h1M158 66.5h3M192 66.5h3M284 66.5h3M318 66.5h3M386 66.5h1M90 67.5h2M155 67.5h3M189 67.5h3M287 67.5h3M321 67.5h2M387 67.5h1M89 68.5h1M153 68.5h2M186 68.5h3M290 68.5h3M323 68.5h2M388 68.5h2M88 69.5h1M151 69.5h2M183 69.5h3M293 69.5h3M325 69.5h2M390 69.5h1M87 70.5h1M150 70.5h1M180 70.5h3M296 70.5h3M327 70.5h2M391 70.5h1M86 71.5h1M148 71.5h2M177 71.5h3M299 71.5h3M329 71.5h2M392 71.5h1M85 72.5h1M147 72.5h1M174 72.5h3M302 72.5h3M331 72.5h1M393 72.5h1M84 73.5h1M145 73.5h2M171 73.5h3M305 73.5h2M332 73.5h2M394 73.5h1M83 74.5h1M143 74.5h2M169 74.5h2M307 74.5h2M334 74.5h1M395 74.5h1M82 75.5h1M141 75.5h2M167 75.5h2M309 75.5h2M335 75.5h2M396 75.5h1M81 76.5h1M139 76.5h2M165 76.5h2M311 76.5h3M337 76.5h2M397 76.5h1M80 77.5h1M138 77.5h1M163 77.5h2M314 77.5h2M339 77.5h2M398 77.5h1M79 78.5h1M136 78.5h2M160 78.5h3M316 78.5h2M341 78.5h2M399 78.5h1M78 79.5h1M135 79.5h1M158 79.5h2M318 79.5h2M343 79.5h1M400 79.5h1M77 80.5h1M133 80.5h2M156 80.5h2M320 80.5h2M344 80.5h2M401 80.5h1M76 81.5h1M132 81.5h1M155 81.5h1M322 81.5h2M346 81.5h1M402 81.5h1M75 82.5h1M131 82.5h1M153 82.5h2M324 82.5h2M347 82.5h1M403 82.5h1M74 83.5h1M129 83.5h2M151 83.5h2M326 83.5h2M348 83.5h2M404 83.5h1M73 84.5h1M128 84.5h1M149 84.5h2M226 84.5h26M328 84.5h1M350 84.5h1M405 84.5h1M72 85.5h1M127 85.5h1M147 85.5h2M221 85.5h5M252 85.5h6M329 85.5h2M351 85.5h1M406 85.5h1M71 86.5h1M126 86.5h1M145 86.5h2M210 86.5h11M258 86.5h11M331 86.5h2M352 86.5h1M407 86.5h1M70 87.5h1M124 87.5h2M144 87.5h1M206 87.5h4M269 87.5h4M333 87.5h2M353 87.5h2M408 87.5h1M69 88.5h1M123 88.5h1M143 88.5h1M204 88.5h2M273 88.5h2M335 88.5h1M355 88.5h1M409 88.5h1M68 89.5h1M122 89.5h1M141 89.5h2M200 89.5h4M275 89.5h4M336 89.5h2M356 89.5h1M410 89.5h1M67 90.5h1M120 90.5h2M140 90.5h1M196 90.5h4M279 90.5h4M338 90.5h1M357 90.5h2M411 90.5h1M67 91.5h1M119 91.5h1M139 91.5h1M193 91.5h3M283 91.5h3M339 91.5h1M359 91.5h1M411 91.5h1M66 92.5h1M117 92.5h2M137 92.5h2M189 92.5h4M286 92.5h4M340 92.5h2M360 92.5h2M412 92.5h1M65 93.5h1M116 93.5h1M135 93.5h2M185 93.5h4M290 93.5h4M342 93.5h2M362 93.5h1M413 93.5h1M64 94.5h1M115 94.5h1M134 94.5h1M183 94.5h2M294 94.5h2M344 94.5h1M363 94.5h1M414 94.5h1M63 95.5h1M113 95.5h2M133 95.5h1M180 95.5h3M296 95.5h3M345 95.5h1M364 95.5h2M415 95.5h1M62 96.5h1M112 96.5h1M131 96.5h2M178 96.5h2M299 96.5h2M346 96.5h2M366 96.5h1M416 96.5h1M62 97.5h1M111 97.5h1M130 97.5h1M176 97.5h2M301 97.5h2M348 97.5h1M367 97.5h1M416 97.5h1M61 98.5h1M110 98.5h1M129 98.5h1M174 98.5h2M303 98.5h2M349 98.5h1M368 98.5h1M417 98.5h1M60 99.5h1M109 99.5h1M128 99.5h1M172 99.5h2M305 99.5h2M350 99.5h1M369 99.5h1M418 99.5h1M59 100.5h1M108 100.5h1M126 100.5h2M170 100.5h2M307 100.5h2M351 100.5h2M370 100.5h1M419 100.5h1M59 101.5h1M107 101.5h1M125 101.5h1M168 101.5h2M309 101.5h2M353 101.5h1M371 101.5h1M419 101.5h1M58 102.5h1M106 102.5h1M124 102.5h1M166 102.5h2M311 102.5h2M354 102.5h1M372 102.5h1M420 102.5h1M57 103.5h1M105 103.5h1M123 103.5h1M164 103.5h2M313 103.5h1M355 103.5h1M373 103.5h1M421 103.5h1M56 104.5h1M104 104.5h1M121 104.5h2M163 104.5h1M314 104.5h2M356 104.5h2M374 104.5h1M422 104.5h1M56 105.5h1M103 105.5h1M120 105.5h1M162 105.5h1M316 105.5h1M358 105.5h1M375 105.5h1M422 105.5h1M55 106.5h1M102 106.5h1M119 106.5h1M160 106.5h2M317 106.5h2M359 106.5h1M376 106.5h1M423 106.5h1M54 107.5h1M101 107.5h1M118 107.5h1M158 107.5h2M319 107.5h2M360 107.5h1M377 107.5h1M424 107.5h1M54 108.5h1M100 108.5h1M117 108.5h1M157 108.5h1M321 108.5h1M361 108.5h1M378 108.5h1M424 108.5h1M53 109.5h1M99 109.5h1M116 109.5h1M155 109.5h2M322 109.5h1M362 109.5h1M379 109.5h1M425 109.5h1M52 110.5h1M98 110.5h1M115 110.5h1M154 110.5h1M323 110.5h2M363 110.5h1M380 110.5h1M426 110.5h1M52 111.5h1M97 111.5h1M114 111.5h1M153 111.5h1M325 111.5h1M364 111.5h1M381 111.5h1M426 111.5h1M51 112.5h1M96 112.5h1M113 112.5h1M151 112.5h2M326 112.5h2M365 112.5h1M382 112.5h1M427 112.5h1M50 113.5h1M95 113.5h1M112 113.5h1M149 113.5h2M328 113.5h2M366 113.5h1M383 113.5h1M428 113.5h1M50 114.5h1M95 114.5h1M111 114.5h1M148 114.5h1M330 114.5h1M367 114.5h1M383 114.5h1M428 114.5h1M49 115.5h1M94 115.5h1M110 115.5h1M146 115.5h2M331 115.5h1M368 115.5h1M384 115.5h1M429 115.5h1M49 116.5h1M93 116.5h1M109 116.5h1M145 116.5h1M332 116.5h2M369 116.5h1M385 116.5h1M429 116.5h1M48 117.5h1M92 117.5h1M108 117.5h1M144 117.5h1M334 117.5h1M370 117.5h1M386 117.5h1M430 117.5h1M48 118.5h1M92 118.5h1M107 118.5h1M142 118.5h2M335 118.5h1M371 118.5h1M386 118.5h1M430 118.5h1M47 119.5h1M91 119.5h1M106 119.5h1M141 119.5h1M336 119.5h2M372 119.5h1M387 119.5h1M431 119.5h1M46 120.5h1M90 120.5h1M105 120.5h1M140 120.5h1M338 120.5h1M373 120.5h1M388 120.5h1M432 120.5h1M46 121.5h1M90 121.5h1M104 121.5h1M139 121.5h1M339 121.5h1M374 121.5h1M388 121.5h1M432 121.5h1M45 122.5h1M89 122.5h1M104 122.5h1M137 122.5h2M340 122.5h2M374 122.5h1M389 122.5h1M433 122.5h1M44 123.5h1M88 123.5h1M103 123.5h1M136 123.5h1M342 123.5h1M375 123.5h1M390 123.5h1M434 123.5h1M43 124.5h1M87 124.5h1M102 124.5h1M135 124.5h1M343 124.5h1M376 124.5h1M391 124.5h1M435 124.5h1M43 125.5h1M87 125.5h1M101 125.5h1M134 125.5h1M344 125.5h1M377 125.5h1M391 125.5h1M435 125.5h1M42 126.5h1M86 126.5h1M100 126.5h1M133 126.5h1M345 126.5h1M378 126.5h1M392 126.5h1M436 126.5h1M42 127.5h1M85 127.5h1M100 127.5h1M132 127.5h1M346 127.5h1M378 127.5h1M393 127.5h1M436 127.5h1M41 128.5h1M84 128.5h1M99 128.5h1M131 128.5h1M347 128.5h1M379 128.5h1M394 128.5h1M437 128.5h1M41 129.5h1M83 129.5h1M98 129.5h1M130 129.5h1M348 129.5h1M380 129.5h1M395 129.5h1M437 129.5h1M40 130.5h1M83 130.5h1M97 130.5h1M129 130.5h1M349 130.5h1M381 130.5h1M395 130.5h1M438 130.5h1M40 131.5h1M82 131.5h1M96 131.5h1M128 131.5h1M350 131.5h1M382 131.5h1M396 131.5h1M438 131.5h1M39 132.5h1M81 132.5h1M96 132.5h1M127 132.5h1M351 132.5h1M382 132.5h1M397 132.5h1M439 132.5h1M39 133.5h1M80 133.5h1M95 133.5h1M126 133.5h1M352 133.5h1M383 133.5h1M398 133.5h1M439 133.5h1M38 134.5h1M80 134.5h1M94 134.5h1M125 134.5h1M353 134.5h1M384 134.5h1M398 134.5h1M440 134.5h1M38 135.5h1M79 135.5h1M93 135.5h1M124 135.5h1M354 135.5h1M385 135.5h1M399 135.5h1M440 135.5h1M37 136.5h1M78 136.5h1M93 136.5h1M123 136.5h1M355 136.5h1M385 136.5h1M400 136.5h1M441 136.5h1M37 137.5h1M78 137.5h1M92 137.5h1M122 137.5h1M356 137.5h1M386 137.5h1M400 137.5h1M441 137.5h1M36 138.5h1M77 138.5h1M92 138.5h1M122 138.5h1M356 138.5h1M386 138.5h1M401 138.5h1M442 138.5h1M36 139.5h1M76 139.5h1M91 139.5h1M121 139.5h1M357 139.5h1M387 139.5h1M402 139.5h1M442 139.5h1M35 140.5h1M76 140.5h1M90 140.5h1M120 140.5h1M358 140.5h1M388 140.5h1M402 140.5h1M443 140.5h1M35 141.5h1M75 141.5h1M89 141.5h1M119 141.5h1M359 141.5h1M389 141.5h1M403 141.5h1M443 141.5h1M34 142.5h1M75 142.5h1M89 142.5h1M118 142.5h1M360 142.5h1M389 142.5h1M403 142.5h1M444 142.5h1M34 143.5h1M74 143.5h1M88 143.5h1M118 143.5h1M360 143.5h1M390 143.5h1M404 143.5h1M444 143.5h1M33 144.5h1M74 144.5h1M87 144.5h1M117 144.5h1M361 144.5h1M391 144.5h1M404 144.5h1M445 144.5h1M33 145.5h1M73 145.5h1M86 145.5h1M116 145.5h1M362 145.5h1M392 145.5h1M405 145.5h1M445 145.5h1M32 146.5h1M73 146.5h1M86 146.5h1M115 146.5h1M363 146.5h1M392 146.5h1M405 146.5h1M446 146.5h1M32 147.5h1M72 147.5h1M85 147.5h1M115 147.5h1M363 147.5h1M393 147.5h1M406 147.5h1M446 147.5h1M32 148.5h1M71 148.5h1M85 148.5h1M114 148.5h1M364 148.5h1M393 148.5h1M407 148.5h1M446 148.5h1M31 149.5h1M71 149.5h1M84 149.5h1M113 149.5h1M365 149.5h1M394 149.5h1M407 149.5h1M447 149.5h1M31 150.5h1M70 150.5h1M84 150.5h1M113 150.5h1M365 150.5h1M394 150.5h1M408 150.5h1M447 150.5h1M30 151.5h1M69 151.5h1M83 151.5h1M112 151.5h1M366 151.5h1M395 151.5h1M409 151.5h1M448 151.5h1M30 152.5h1M69 152.5h1M83 152.5h1M112 152.5h1M366 152.5h1M395 152.5h1M409 152.5h1M448 152.5h1M29 153.5h1M68 153.5h1M82 153.5h1M111 153.5h1M367 153.5h1M396 153.5h1M410 153.5h1M449 153.5h1M29 154.5h1M68 154.5h1M82 154.5h1M110 154.5h1M368 154.5h1M396 154.5h1M410 154.5h1M449 154.5h1M29 155.5h1M67 155.5h1M81 155.5h1M109 155.5h1M369 155.5h1M397 155.5h1M411 155.5h1M449 155.5h1M28 156.5h1M67 156.5h1M80 156.5h1M109 156.5h1M369 156.5h1M398 156.5h1M411 156.5h1M450 156.5h1M28 157.5h1M67 157.5h1M80 157.5h1M108 157.5h1M370 157.5h1M398 157.5h1M411 157.5h1M450 157.5h1M27 158.5h1M66 158.5h1M79 158.5h1M107 158.5h1M371 158.5h1M399 158.5h1M412 158.5h1M451 158.5h1M27 159.5h1M66 159.5h1M79 159.5h1M107 159.5h1M371 159.5h1M399 159.5h1M412 159.5h1M451 159.5h1M27 160.5h1M66 160.5h1M78 160.5h1M106 160.5h1M372 160.5h1M400 160.5h1M412 160.5h1M451 160.5h1M26 161.5h1M65 161.5h1M78 161.5h1M106 161.5h1M372 161.5h1M400 161.5h1M413 161.5h1M452 161.5h1M26 162.5h1M65 162.5h1M78 162.5h1M105 162.5h1M373 162.5h1M400 162.5h1M413 162.5h1M452 162.5h1M26 163.5h1M64 163.5h1M77 163.5h1M104 163.5h1M374 163.5h1M401 163.5h1M414 163.5h1M452 163.5h1M25 164.5h1M64 164.5h1M77 164.5h1M103 164.5h1M375 164.5h1M401 164.5h1M414 164.5h1M453 164.5h1M25 165.5h1M63 165.5h1M76 165.5h1M103 165.5h1M375 165.5h1M402 165.5h1M415 165.5h1M453 165.5h1M24 166.5h1M63 166.5h1M76 166.5h1M102 166.5h1M376 166.5h1M402 166.5h1M415 166.5h1M454 166.5h1M24 167.5h1M62 167.5h1M75 167.5h1M102 167.5h1M376 167.5h1M403 167.5h1M416 167.5h1M454 167.5h1M23 168.5h1M62 168.5h1M75 168.5h1M101 168.5h1M377 168.5h1M403 168.5h1M416 168.5h1M455 168.5h1M23 169.5h1M62 169.5h1M74 169.5h1M101 169.5h1M377 169.5h1M404 169.5h1M416 169.5h1M455 169.5h1M23 170.5h1M61 170.5h1M74 170.5h1M100 170.5h1M378 170.5h1M404 170.5h1M417 170.5h1M455 170.5h1M22 171.5h1M61 171.5h1M73 171.5h1M100 171.5h1M378 171.5h1M405 171.5h1M417 171.5h1M456 171.5h1M22 172.5h1M61 172.5h1M73 172.5h1M99 172.5h1M379 172.5h1M405 172.5h1M417 172.5h1M456 172.5h1M22 173.5h1M60 173.5h1M73 173.5h1M99 173.5h1M379 173.5h1M405 173.5h1M418 173.5h1M456 173.5h1M22 174.5h1M60 174.5h1M72 174.5h1M98 174.5h1M380 174.5h1M406 174.5h1M418 174.5h1M456 174.5h1M21 175.5h1M59 175.5h1M72 175.5h1M98 175.5h1M380 175.5h1M406 175.5h1M419 175.5h1M457 175.5h1M21 176.5h1M59 176.5h1M72 176.5h1M97 176.5h1M381 176.5h1M406 176.5h1M419 176.5h1M457 176.5h1M21 177.5h1M58 177.5h1M71 177.5h1M97 177.5h1M381 177.5h1M407 177.5h1M420 177.5h1M457 177.5h1M21 178.5h1M58 178.5h1M71 178.5h1M96 178.5h1M382 178.5h1M407 178.5h1M420 178.5h1M457 178.5h1M20 179.5h1M57 179.5h1M71 179.5h1M96 179.5h1M382 179.5h1M407 179.5h1M421 179.5h1M458 179.5h1M20 180.5h1M57 180.5h1M70 180.5h1M95 180.5h1M383 180.5h1M408 180.5h1M421 180.5h1M458 180.5h1M20 181.5h1M57 181.5h1M70 181.5h1M95 181.5h1M383 181.5h1M408 181.5h1M421 181.5h1M458 181.5h1M20 182.5h1M56 182.5h1M70 182.5h1M95 182.5h1M383 182.5h1M408 182.5h1M422 182.5h1M458 182.5h1M19 183.5h1M56 183.5h1M69 183.5h1M94 183.5h1M384 183.5h1M409 183.5h1M422 183.5h1M459 183.5h1M19 184.5h1M56 184.5h1M69 184.5h1M94 184.5h1M384 184.5h1M409 184.5h1M422 184.5h1M459 184.5h1M19 185.5h1M56 185.5h1M69 185.5h1M93 185.5h1M385 185.5h1M409 185.5h1M422 185.5h1M459 185.5h1M18 186.5h1M55 186.5h1M68 186.5h1M93 186.5h1M385 186.5h1M410 186.5h1M423 186.5h1M460 186.5h1M18 187.5h1M55 187.5h1M68 187.5h1M93 187.5h1M385 187.5h1M410 187.5h1M423 187.5h1M460 187.5h1M18 188.5h1M55 188.5h1M68 188.5h1M93 188.5h1M385 188.5h1M410 188.5h1M423 188.5h1M460 188.5h1M18 189.5h1M55 189.5h1M67 189.5h1M92 189.5h1M386 189.5h1M411 189.5h1M423 189.5h1M460 189.5h1M17 190.5h1M54 190.5h1M67 190.5h1M92 190.5h1M386 190.5h1M411 190.5h1M424 190.5h1M461 190.5h1M17 191.5h1M54 191.5h1M67 191.5h1M92 191.5h1M386 191.5h1M411 191.5h1M424 191.5h1M461 191.5h1M17 192.5h1M54 192.5h1M66 192.5h1M92 192.5h1M386 192.5h1M412 192.5h1M424 192.5h1M461 192.5h1M17 193.5h1M54 193.5h1M66 193.5h1M91 193.5h1M387 193.5h1M412 193.5h1M424 193.5h1M461 193.5h1M16 194.5h1M54 194.5h1M66 194.5h1M91 194.5h1M387 194.5h1M412 194.5h1M424 194.5h1M462 194.5h1M16 195.5h1M53 195.5h1M65 195.5h1M91 195.5h1M387 195.5h1M413 195.5h1M425 195.5h1M462 195.5h1M16 196.5h1M53 196.5h1M65 196.5h1M90 196.5h1M388 196.5h1M413 196.5h1M425 196.5h1M462 196.5h1M16 197.5h1M53 197.5h1M65 197.5h1M90 197.5h1M388 197.5h1M413 197.5h1M425 197.5h1M462 197.5h1M15 198.5h1M53 198.5h1M65 198.5h1M90 198.5h1M388 198.5h1M413 198.5h1M425 198.5h1M463 198.5h1M15 199.5h1M52 199.5h1M64 199.5h1M90 199.5h1M388 199.5h1M414 199.5h1M426 199.5h1M463 199.5h1M15 200.5h1M52 200.5h1M64 200.5h1M89 200.5h1M389 200.5h1M414 200.5h1M426 200.5h1M463 200.5h1M15 201.5h1M52 201.5h1M64 201.5h1M89 201.5h1M389 201.5h1M414 201.5h1M426 201.5h1M463 201.5h1M15 202.5h1M52 202.5h1M64 202.5h1M89 202.5h1M389 202.5h1M414 202.5h1M426 202.5h1M463 202.5h1M15 203.5h1M51 203.5h1M64 203.5h1M89 203.5h1M389 203.5h1M414 203.5h1M427 203.5h1M463 203.5h1M14 204.5h1M51 204.5h1M64 204.5h1M88 204.5h1M390 204.5h1M414 204.5h1M427 204.5h1M464 204.5h1M14 205.5h1M51 205.5h1M63 205.5h1M88 205.5h1M390 205.5h1M415 205.5h1M427 205.5h1M464 205.5h1M14 206.5h1M51 206.5h1M63 206.5h1M87 206.5h1M391 206.5h1M415 206.5h1M427 206.5h1M464 206.5h1M14 207.5h1M51 207.5h1M63 207.5h1M87 207.5h1M391 207.5h1M415 207.5h1M427 207.5h1M464 207.5h1M14 208.5h1M51 208.5h1M63 208.5h1M87 208.5h1M391 208.5h1M415 208.5h1M427 208.5h1M464 208.5h1M14 209.5h1M51 209.5h1M63 209.5h1M87 209.5h1M391 209.5h1M415 209.5h1M427 209.5h1M464 209.5h1M14 210.5h1M50 210.5h1M63 210.5h1M86 210.5h1M392 210.5h1M415 210.5h1M428 210.5h1M464 210.5h1M14 211.5h1M50 211.5h1M63 211.5h1M86 211.5h1M392 211.5h1M415 211.5h1M428 211.5h1M464 211.5h1M13 212.5h1M50 212.5h1M62 212.5h1M86 212.5h1M392 212.5h1M416 212.5h1M428 212.5h1M465 212.5h1M13 213.5h1M50 213.5h1M62 213.5h1M86 213.5h1M392 213.5h1M416 213.5h1M428 213.5h1M465 213.5h1M13 214.5h1M50 214.5h1M62 214.5h1M86 214.5h1M392 214.5h1M416 214.5h1M428 214.5h1M465 214.5h1M13 215.5h1M50 215.5h1M62 215.5h1M86 215.5h1M392 215.5h1M416 215.5h1M428 215.5h1M465 215.5h1M13 216.5h1M49 216.5h1M62 216.5h1M86 216.5h1M392 216.5h1M416 216.5h1M429 216.5h1M465 216.5h1M13 217.5h1M49 217.5h1M62 217.5h1M86 217.5h1M392 217.5h1M416 217.5h1M429 217.5h1M465 217.5h1M13 218.5h1M49 218.5h1M61 218.5h1M86 218.5h1M392 218.5h1M417 218.5h1M429 218.5h1M465 218.5h1M13 219.5h1M49 219.5h1M61 219.5h1M86 219.5h1M392 219.5h1M417 219.5h1M429 219.5h1M465 219.5h1M13 220.5h1M49 220.5h1M61 220.5h1M86 220.5h1M392 220.5h1M417 220.5h1M429 220.5h1M465 220.5h1M13 221.5h1M49 221.5h1M61 221.5h1M85 221.5h1M393 221.5h1M417 221.5h1M429 221.5h1M465 221.5h1M13 222.5h1M49 222.5h1M61 222.5h1M85 222.5h1M393 222.5h1M417 222.5h1M429 222.5h1M465 222.5h1M13 223.5h1M48 223.5h1M61 223.5h1M85 223.5h1M393 223.5h1M417 223.5h1M430 223.5h1M465 223.5h1M13 224.5h1M48 224.5h1M60 224.5h1M85 224.5h1M393 224.5h1M418 224.5h1M430 224.5h1M465 224.5h1M13 225.5h1M48 225.5h1M60 225.5h1M85 225.5h1M393 225.5h1M418 225.5h1M430 225.5h1M465 225.5h1M13 226.5h1M48 226.5h1M60 226.5h1M84 226.5h1M394 226.5h1M418 226.5h1M430 226.5h1M465 226.5h1M13 227.5h1M48 227.5h1M60 227.5h1M84 227.5h1M394 227.5h1M418 227.5h1M430 227.5h1M465 227.5h1M12 228.5h1M48 228.5h1M60 228.5h1M84 228.5h1M394 228.5h1M418 228.5h1M430 228.5h1M466 228.5h1M12 229.5h1M48 229.5h1M60 229.5h1M84 229.5h1M394 229.5h1M418 229.5h1M430 229.5h1M466 229.5h1M12 230.5h1M48 230.5h1M60 230.5h1M84 230.5h1M394 230.5h1M418 230.5h1M430 230.5h1M466 230.5h1M12 231.5h1M48 231.5h1M60 231.5h1M84 231.5h1M394 231.5h1M418 231.5h1M430 231.5h1M466 231.5h1M12 232.5h1M48 232.5h1M60 232.5h1M84 232.5h1M394 232.5h1M418 232.5h1M430 232.5h1M466 232.5h1M12 233.5h1M48 233.5h1M60 233.5h1M84 233.5h1M394 233.5h1M418 233.5h1M430 233.5h1M466 233.5h1M12 234.5h1M48 234.5h1M60 234.5h1M84 234.5h1M394 234.5h1M418 234.5h1M430 234.5h1M466 234.5h1M12 235.5h1M48 235.5h1M60 235.5h1M84 235.5h1M394 235.5h1M418 235.5h1M430 235.5h1M466 235.5h1M12 236.5h1M48 236.5h1M60 236.5h1M84 236.5h1M394 236.5h1M418 236.5h1M430 236.5h1M466 236.5h1M12 237.5h1M48 237.5h1M60 237.5h1M84 237.5h1M394 237.5h1M418 237.5h1M430 237.5h1M466 237.5h1M12 238.5h1M48 238.5h1M60 238.5h1M84 238.5h1M394 238.5h1M418 238.5h1M430 238.5h1M466 238.5h1M12 239.5h1M48 239.5h1M60 239.5h1M84 239.5h1M394 239.5h1M418 239.5h1M430 239.5h1M466 239.5h1M12 240.5h1M48 240.5h1M60 240.5h1M84 240.5h1M394 240.5h1M418 240.5h1M430 240.5h1M466 240.5h1M12 241.5h1M48 241.5h1M60 241.5h1M84 241.5h1M394 241.5h1M418 241.5h1M430 241.5h1M466 241.5h1M12 242.5h1M48 242.5h1M60 242.5h1M84 242.5h1M394 242.5h1M418 242.5h1M430 242.5h1M466 242.5h1M12 243.5h1M48 243.5h1M60 243.5h1M84 243.5h1M394 243.5h1M418 243.5h1M430 243.5h1M466 243.5h1M12 244.5h1M48 244.5h1M60 244.5h1M84 244.5h1M394 244.5h1M418 244.5h1M430 244.5h1M466 244.5h1M12 245.5h1M48 245.5h1M60 245.5h1M84 245.5h1M394 245.5h1M418 245.5h1M430 245.5h1M466 245.5h1M12 246.5h1M48 246.5h1M60 246.5h1M84 246.5h1M394 246.5h1M418 246.5h1M430 246.5h1M466 246.5h1M12 247.5h1M48 247.5h1M60 247.5h1M84 247.5h1M394 247.5h1M418 247.5h1M430 247.5h1M466 247.5h1M12 248.5h1M48 248.5h1M60 248.5h1M84 248.5h1M394 248.5h1M418 248.5h1M430 248.5h1M466 248.5h1M12 249.5h1M48 249.5h1M60 249.5h1M84 249.5h1M394 249.5h1M418 249.5h1M430 249.5h1M466 249.5h1M13 250.5h1M48 250.5h1M60 250.5h1M84 250.5h1M394 250.5h1M418 250.5h1M430 250.5h1M465 250.5h1M13 251.5h1M48 251.5h1M60 251.5h1M84 251.5h1M394 251.5h1M418 251.5h1M430 251.5h1M465 251.5h1M13 252.5h1M48 252.5h1M60 252.5h1M85 252.5h1M393 252.5h1M418 252.5h1M430 252.5h1M465 252.5h1M13 253.5h1M48 253.5h1M60 253.5h1M85 253.5h1M393 253.5h1M418 253.5h1M430 253.5h1M465 253.5h1M13 254.5h1M48 254.5h1M61 254.5h1M85 254.5h1M393 254.5h1M417 254.5h1M430 254.5h1M465 254.5h1M13 255.5h1M48 255.5h1M61 255.5h1M85 255.5h1M393 255.5h1M417 255.5h1M430 255.5h1M465 255.5h1M13 256.5h1M49 256.5h1M61 256.5h1M85 256.5h1M393 256.5h1M417 256.5h1M429 256.5h1M465 256.5h1M13 257.5h1M49 257.5h1M61 257.5h1M85 257.5h1M393 257.5h1M417 257.5h1M429 257.5h1M465 257.5h1M13 258.5h1M49 258.5h1M61 258.5h1M86 258.5h1M392 258.5h1M417 258.5h1M429 258.5h1M465 258.5h1M13 259.5h1M49 259.5h1M61 259.5h1M86 259.5h1M392 259.5h1M417 259.5h1M429 259.5h1M465 259.5h1M13 260.5h1M49 260.5h1M62 260.5h1M86 260.5h1M392 260.5h1M416 260.5h1M429 260.5h1M465 260.5h1M13 261.5h1M49 261.5h1M62 261.5h1M86 261.5h1M392 261.5h1M416 261.5h1M429 261.5h1M465 261.5h1M13 262.5h1M50 262.5h1M62 262.5h1M86 262.5h1M392 262.5h1M416 262.5h1M428 262.5h1M465 262.5h1M13 263.5h1M50 263.5h1M62 263.5h1M86 263.5h1M392 263.5h1M416 263.5h1M428 263.5h1M465 263.5h1M13 264.5h1M50 264.5h1M62 264.5h1M86 264.5h1M392 264.5h1M416 264.5h1M428 264.5h1M465 264.5h1M13 265.5h1M50 265.5h1M62 265.5h1M86 265.5h1M392 265.5h1M416 265.5h1M428 265.5h1M465 265.5h1M14 266.5h1M50 266.5h1M62 266.5h1M86 266.5h1M392 266.5h1M416 266.5h1M428 266.5h1M464 266.5h1M14 267.5h1M50 267.5h1M63 267.5h1M86 267.5h1M392 267.5h1M415 267.5h1M428 267.5h1M464 267.5h1M14 268.5h1M50 268.5h1M63 268.5h1M86 268.5h1M392 268.5h1M415 268.5h1M428 268.5h1M464 268.5h1M14 269.5h1M51 269.5h1M63 269.5h1M87 269.5h1M391 269.5h1M415 269.5h1M427 269.5h1M464 269.5h1M14 270.5h1M51 270.5h1M63 270.5h1M87 270.5h1M391 270.5h1M415 270.5h1M427 270.5h1M464 270.5h1M14 271.5h1M51 271.5h1M63 271.5h1M87 271.5h1M391 271.5h1M415 271.5h1M427 271.5h1M464 271.5h1M14 272.5h1M51 272.5h1M63 272.5h1M87 272.5h1M391 272.5h1M415 272.5h1M427 272.5h1M464 272.5h1M14 273.5h1M51 273.5h1M64 273.5h1M88 273.5h1M390 273.5h1M414 273.5h1M427 273.5h1M464 273.5h1M15 274.5h1M51 274.5h1M64 274.5h1M88 274.5h1M390 274.5h1M414 274.5h1M427 274.5h1M463 274.5h1M15 275.5h1M52 275.5h1M64 275.5h1M89 275.5h1M389 275.5h1M414 275.5h1M426 275.5h1M463 275.5h1M15 276.5h1M52 276.5h1M64 276.5h1M89 276.5h1M389 276.5h1M414 276.5h1M426 276.5h1M463 276.5h1M15 277.5h1M52 277.5h1M64 277.5h1M89 277.5h1M389 277.5h1M414 277.5h1M426 277.5h1M463 277.5h1M15 278.5h1M52 278.5h1M64 278.5h1M89 278.5h1M389 278.5h1M414 278.5h1M426 278.5h1M463 278.5h1M15 279.5h1M52 279.5h1M65 279.5h1M90 279.5h1M388 279.5h1M413 279.5h1M426 279.5h1M463 279.5h1M16 280.5h1M53 280.5h1M65 280.5h1M90 280.5h1M388 280.5h1M413 280.5h1M425 280.5h1M462 280.5h1M16 281.5h1M53 281.5h1M65 281.5h1M90 281.5h1M388 281.5h1M413 281.5h1M425 281.5h1M462 281.5h1M16 282.5h1M53 282.5h1M65 282.5h1M90 282.5h1M388 282.5h1M413 282.5h1M425 282.5h1M462 282.5h1M16 283.5h1M53 283.5h1M65 283.5h1M91 283.5h1M387 283.5h1M413 283.5h1M425 283.5h1M462 283.5h1M17 284.5h1M54 284.5h1M66 284.5h1M91 284.5h1M387 284.5h1M412 284.5h1M424 284.5h1M461 284.5h1M17 285.5h1M54 285.5h1M66 285.5h1M91 285.5h1M387 285.5h1M412 285.5h1M424 285.5h1M461 285.5h1M17 286.5h1M54 286.5h1M66 286.5h1M92 286.5h1M386 286.5h1M412 286.5h1M424 286.5h1M461 286.5h1M17 287.5h1M54 287.5h1M67 287.5h1M92 287.5h1M386 287.5h1M411 287.5h1M424 287.5h1M461 287.5h1M18 288.5h1M55 288.5h1M67 288.5h1M92 288.5h1M386 288.5h1M411 288.5h1M423 288.5h1M460 288.5h1M18 289.5h1M55 289.5h1M67 289.5h1M92 289.5h1M386 289.5h1M411 289.5h1M423 289.5h1M460 289.5h1M18 290.5h1M55 290.5h1M68 290.5h1M93 290.5h1M385 290.5h1M410 290.5h1M423 290.5h1M460 290.5h1M18 291.5h1M55 291.5h1M68 291.5h1M93 291.5h1M385 291.5h1M410 291.5h1M423 291.5h1M460 291.5h1M19 292.5h1M55 292.5h1M68 292.5h1M93 292.5h1M385 292.5h1M410 292.5h1M423 292.5h1M459 292.5h1M19 293.5h1M56 293.5h1M69 293.5h1M93 293.5h1M385 293.5h1M409 293.5h1M422 293.5h1M459 293.5h1M19 294.5h1M56 294.5h1M69 294.5h1M94 294.5h1M384 294.5h1M409 294.5h1M422 294.5h1M459 294.5h1M19 295.5h1M56 295.5h1M69 295.5h1M94 295.5h1M384 295.5h1M409 295.5h1M422 295.5h1M459 295.5h1M20 296.5h1M56 296.5h1M70 296.5h1M95 296.5h1M383 296.5h1M408 296.5h1M422 296.5h1M458 296.5h1M20 297.5h1M57 297.5h1M70 297.5h1M95 297.5h1M383 297.5h1M408 297.5h1M421 297.5h1M458 297.5h1M20 298.5h1M57 298.5h1M70 298.5h1M95 298.5h1M383 298.5h1M408 298.5h1M421 298.5h1M458 298.5h1M20 299.5h1M58 299.5h1M71 299.5h1M96 299.5h1M382 299.5h1M407 299.5h1M420 299.5h1M458 299.5h1M21 300.5h1M58 300.5h1M71 300.5h1M96 300.5h1M382 300.5h1M407 300.5h1M420 300.5h1M457 300.5h1M21 301.5h1M59 301.5h1M71 301.5h1M97 301.5h1M381 301.5h1M407 301.5h1M419 301.5h1M457 301.5h1M21 302.5h1M59 302.5h1M72 302.5h1M97 302.5h1M381 302.5h1M406 302.5h1M419 302.5h1M457 302.5h1M22 303.5h1M60 303.5h1M72 303.5h1M98 303.5h1M380 303.5h1M406 303.5h1M418 303.5h1M456 303.5h1M22 304.5h1M60 304.5h1M72 304.5h1M98 304.5h1M380 304.5h1M406 304.5h1M418 304.5h1M456 304.5h1M22 305.5h1M60 305.5h1M73 305.5h1M99 305.5h1M379 305.5h1M405 305.5h1M418 305.5h1M456 305.5h1M22 306.5h1M61 306.5h1M73 306.5h1M99 306.5h1M379 306.5h1M405 306.5h1M417 306.5h1M456 306.5h1M23 307.5h1M61 307.5h1M74 307.5h1M100 307.5h1M378 307.5h1M404 307.5h1M417 307.5h1M455 307.5h1M23 308.5h1M61 308.5h1M74 308.5h1M100 308.5h1M378 308.5h1M404 308.5h1M417 308.5h1M455 308.5h1M23 309.5h1M62 309.5h1M75 309.5h1M101 309.5h1M377 309.5h1M403 309.5h1M416 309.5h1M455 309.5h1M23 310.5h1M62 310.5h1M75 310.5h1M101 310.5h1M377 310.5h1M403 310.5h1M416 310.5h1M455 310.5h1M24 311.5h1M63 311.5h1M76 311.5h1M102 311.5h1M376 311.5h1M402 311.5h1M415 311.5h1M454 311.5h1M24 312.5h1M63 312.5h1M76 312.5h1M102 312.5h1M376 312.5h1M402 312.5h1M415 312.5h1M454 312.5h1M25 313.5h1M64 313.5h1M76 313.5h1M103 313.5h1M375 313.5h1M402 313.5h1M414 313.5h1M453 313.5h1M25 314.5h1M64 314.5h1M77 314.5h1M104 314.5h1M374 314.5h1M401 314.5h1M414 314.5h1M453 314.5h1M26 315.5h1M65 315.5h1M77 315.5h1M104 315.5h1M374 315.5h1M401 315.5h1M413 315.5h1M452 315.5h1M26 316.5h1M65 316.5h1M78 316.5h1M105 316.5h1M373 316.5h1M400 316.5h1M413 316.5h1M452 316.5h1M26 317.5h1M65 317.5h1M78 317.5h1M106 317.5h1M372 317.5h1M400 317.5h1M413 317.5h1M452 317.5h1M27 318.5h1M66 318.5h1M79 318.5h1M106 318.5h1M372 318.5h1M399 318.5h1M412 318.5h1M451 318.5h1M27 319.5h1M66 319.5h1M79 319.5h1M107 319.5h1M371 319.5h1M399 319.5h1M412 319.5h1M451 319.5h1M28 320.5h1M66 320.5h1M80 320.5h1M107 320.5h1M371 320.5h1M398 320.5h1M412 320.5h1M450 320.5h1M28 321.5h1M67 321.5h1M80 321.5h1M108 321.5h1M370 321.5h1M398 321.5h1M411 321.5h1M450 321.5h1M28 322.5h1M67 322.5h1M81 322.5h1M109 322.5h1M369 322.5h1M397 322.5h1M411 322.5h1M450 322.5h1M29 323.5h1M68 323.5h1M81 323.5h1M110 323.5h1M368 323.5h1M397 323.5h1M410 323.5h1M449 323.5h1M29 324.5h1M68 324.5h1M82 324.5h1M110 324.5h1M368 324.5h1M396 324.5h1M410 324.5h1M449 324.5h1M29 325.5h1M69 325.5h1M82 325.5h1M111 325.5h1M367 325.5h1M396 325.5h1M409 325.5h1M449 325.5h1M30 326.5h1M69 326.5h1M83 326.5h1M112 326.5h1M366 326.5h1M395 326.5h1M409 326.5h1M448 326.5h1M30 327.5h1M70 327.5h1M83 327.5h1M112 327.5h1M366 327.5h1M395 327.5h1M408 327.5h1M448 327.5h1M31 328.5h1M70 328.5h1M84 328.5h1M113 328.5h1M365 328.5h1M394 328.5h1M408 328.5h1M447 328.5h1M31 329.5h1M71 329.5h1M85 329.5h1M113 329.5h1M365 329.5h1M393 329.5h1M407 329.5h1M447 329.5h1M32 330.5h1M71 330.5h1M85 330.5h1M114 330.5h1M364 330.5h1M393 330.5h1M407 330.5h1M446 330.5h1M32 331.5h1M72 331.5h1M86 331.5h1M115 331.5h1M363 331.5h1M392 331.5h1M406 331.5h1M446 331.5h1M32 332.5h1M73 332.5h1M86 332.5h1M116 332.5h1M362 332.5h1M392 332.5h1M405 332.5h1M446 332.5h1M33 333.5h1M73 333.5h1M87 333.5h1M116 333.5h1M362 333.5h1M391 333.5h1M405 333.5h1M445 333.5h1M33 334.5h1M74 334.5h1M87 334.5h1M117 334.5h1M361 334.5h1M391 334.5h1M404 334.5h1M445 334.5h1M34 335.5h1M75 335.5h1M88 335.5h1M118 335.5h1M360 335.5h1M390 335.5h1M403 335.5h1M444 335.5h1M34 336.5h1M75 336.5h1M89 336.5h1M119 336.5h1M359 336.5h1M389 336.5h1M403 336.5h1M444 336.5h1M35 337.5h1M76 337.5h1M89 337.5h1M119 337.5h1M359 337.5h1M389 337.5h1M402 337.5h1M443 337.5h1M35 338.5h1M76 338.5h1M90 338.5h1M120 338.5h1M358 338.5h1M388 338.5h1M402 338.5h1M443 338.5h1M36 339.5h1M77 339.5h1M91 339.5h1M121 339.5h1M357 339.5h1M387 339.5h1M401 339.5h1M442 339.5h1M36 340.5h1M77 340.5h1M92 340.5h1M122 340.5h1M356 340.5h1M386 340.5h1M401 340.5h1M442 340.5h1M37 341.5h1M78 341.5h1M92 341.5h1M122 341.5h1M356 341.5h1M386 341.5h1M400 341.5h1M441 341.5h1M37 342.5h1M78 342.5h1M93 342.5h1M123 342.5h1M355 342.5h1M385 342.5h1M400 342.5h1M441 342.5h1M38 343.5h1M79 343.5h1M93 343.5h1M124 343.5h1M354 343.5h1M385 343.5h1M399 343.5h1M440 343.5h1M38 344.5h1M80 344.5h1M94 344.5h1M125 344.5h1M353 344.5h1M384 344.5h1M398 344.5h1M440 344.5h1M39 345.5h1M80 345.5h1M95 345.5h1M126 345.5h1M352 345.5h1M383 345.5h1M398 345.5h1M439 345.5h1M39 346.5h1M81 346.5h1M96 346.5h1M127 346.5h1M351 346.5h1M382 346.5h1M397 346.5h1M439 346.5h1M40 347.5h1M82 347.5h1M96 347.5h1M128 347.5h1M350 347.5h1M382 347.5h1M396 347.5h1M438 347.5h1M40 348.5h1M83 348.5h1M97 348.5h1M129 348.5h1M349 348.5h1M381 348.5h1M395 348.5h1M438 348.5h1M41 349.5h1M83 349.5h1M98 349.5h1M130 349.5h1M348 349.5h1M380 349.5h1M395 349.5h1M437 349.5h1M41 350.5h1M84 350.5h1M99 350.5h1M131 350.5h1M347 350.5h1M379 350.5h1M394 350.5h1M437 350.5h1M42 351.5h1M85 351.5h1M100 351.5h1M132 351.5h1M346 351.5h1M378 351.5h1M393 351.5h1M436 351.5h1M42 352.5h1M86 352.5h1M100 352.5h1M133 352.5h1M345 352.5h1M378 352.5h1M392 352.5h1M436 352.5h1M43 353.5h1M87 353.5h1M101 353.5h1M134 353.5h1M344 353.5h1M377 353.5h1M391 353.5h1M435 353.5h1M43 354.5h1M87 354.5h1M102 354.5h1M135 354.5h1M343 354.5h1M376 354.5h1M391 354.5h1M435 354.5h1M44 355.5h1M88 355.5h1M103 355.5h1M136 355.5h1M342 355.5h1M375 355.5h1M390 355.5h1M434 355.5h1M45 356.5h1M89 356.5h1M104 356.5h1M137 356.5h2M340 356.5h2M374 356.5h1M389 356.5h1M433 356.5h1M46 357.5h1M90 357.5h1M104 357.5h1M139 357.5h1M339 357.5h1M374 357.5h1M388 357.5h1M432 357.5h1M46 358.5h1M90 358.5h1M105 358.5h1M140 358.5h1M338 358.5h1M373 358.5h1M388 358.5h1M432 358.5h1M47 359.5h1M91 359.5h1M106 359.5h1M141 359.5h1M336 359.5h2M372 359.5h1M387 359.5h1M431 359.5h1M48 360.5h1M92 360.5h1M107 360.5h1M142 360.5h2M335 360.5h1M371 360.5h1M386 360.5h1M430 360.5h1M48 361.5h1M92 361.5h1M108 361.5h1M144 361.5h1M334 361.5h1M370 361.5h1M386 361.5h1M430 361.5h1M49 362.5h1M93 362.5h1M109 362.5h1M145 362.5h1M332 362.5h2M369 362.5h1M385 362.5h1M429 362.5h1M49 363.5h1M94 363.5h1M110 363.5h1M146 363.5h2M331 363.5h1M368 363.5h1M384 363.5h1M429 363.5h1M50 364.5h1M95 364.5h1M111 364.5h1M148 364.5h1M330 364.5h1M367 364.5h1M383 364.5h1M428 364.5h1M50 365.5h1M95 365.5h1M112 365.5h1M149 365.5h2M328 365.5h2M366 365.5h1M383 365.5h1M428 365.5h1M51 366.5h1M96 366.5h1M113 366.5h1M151 366.5h2M326 366.5h2M365 366.5h1M382 366.5h1M427 366.5h1M52 367.5h1M97 367.5h1M114 367.5h1M153 367.5h1M325 367.5h1M364 367.5h1M381 367.5h1M426 367.5h1M52 368.5h1M98 368.5h1M115 368.5h1M154 368.5h1M323 368.5h2M363 368.5h1M380 368.5h1M426 368.5h1M53 369.5h1M99 369.5h1M116 369.5h1M155 369.5h2M322 369.5h1M362 369.5h1M379 369.5h1M425 369.5h1M54 370.5h1M100 370.5h1M117 370.5h1M157 370.5h1M321 370.5h1M361 370.5h1M378 370.5h1M424 370.5h1M54 371.5h1M101 371.5h1M118 371.5h1M158 371.5h2M319 371.5h2M360 371.5h1M377 371.5h1M424 371.5h1M55 372.5h1M102 372.5h1M119 372.5h1M160 372.5h2M317 372.5h2M359 372.5h1M376 372.5h1M423 372.5h1M56 373.5h1M103 373.5h1M120 373.5h1M162 373.5h1M316 373.5h1M358 373.5h1M375 373.5h1M422 373.5h1M56 374.5h1M104 374.5h1M121 374.5h2M163 374.5h1M314 374.5h2M356 374.5h2M374 374.5h1M422 374.5h1M57 375.5h1M105 375.5h1M123 375.5h1M164 375.5h2M313 375.5h1M355 375.5h1M373 375.5h1M421 375.5h1M58 376.5h1M106 376.5h1M124 376.5h1M166 376.5h2M311 376.5h2M354 376.5h1M372 376.5h1M420 376.5h1M59 377.5h1M107 377.5h1M125 377.5h1M168 377.5h2M309 377.5h2M353 377.5h1M371 377.5h1M419 377.5h1M59 378.5h1M108 378.5h1M126 378.5h2M170 378.5h2M307 378.5h2M351 378.5h2M370 378.5h1M419 378.5h1M60 379.5h1M109 379.5h1M128 379.5h1M172 379.5h2M305 379.5h2M350 379.5h1M369 379.5h1M418 379.5h1M61 380.5h1M110 380.5h1M129 380.5h1M174 380.5h2M303 380.5h2M349 380.5h1M368 380.5h1M417 380.5h1M62 381.5h1M111 381.5h1M130 381.5h1M176 381.5h2M301 381.5h2M348 381.5h1M367 381.5h1M416 381.5h1M63 382.5h1M112 382.5h1M131 382.5h2M178 382.5h2M299 382.5h2M346 382.5h2M366 382.5h1M415 382.5h1M63 383.5h1M113 383.5h2M133 383.5h1M180 383.5h3M296 383.5h3M345 383.5h1M364 383.5h2M415 383.5h1M64 384.5h1M115 384.5h1M134 384.5h1M183 384.5h2M294 384.5h2M344 384.5h1M363 384.5h1M414 384.5h1M65 385.5h1M116 385.5h1M135 385.5h2M185 385.5h4M290 385.5h4M342 385.5h2M362 385.5h1M413 385.5h1M66 386.5h1M117 386.5h2M137 386.5h2M189 386.5h4M286 386.5h4M340 386.5h2M360 386.5h2M412 386.5h1M67 387.5h1M119 387.5h1M139 387.5h1M193 387.5h3M283 387.5h3M339 387.5h1M359 387.5h1M411 387.5h1M68 388.5h1M120 388.5h2M140 388.5h1M196 388.5h4M279 388.5h4M338 388.5h1M357 388.5h2M410 388.5h1M68 389.5h1M122 389.5h1M141 389.5h2M200 389.5h4M275 389.5h4M336 389.5h2M356 389.5h1M410 389.5h1M69 390.5h1M123 390.5h1M143 390.5h1M204 390.5h2M273 390.5h2M335 390.5h1M355 390.5h1M409 390.5h1M70 391.5h1M124 391.5h2M144 391.5h1M206 391.5h4M269 391.5h4M333 391.5h2M353 391.5h2M408 391.5h1M71 392.5h1M126 392.5h1M145 392.5h2M210 392.5h11M258 392.5h11M331 392.5h2M352 392.5h1M407 392.5h1M72 393.5h1M127 393.5h1M147 393.5h2M221 393.5h5M252 393.5h6M329 393.5h2M351 393.5h1M406 393.5h1M73 394.5h1M128 394.5h1M149 394.5h2M226 394.5h26M328 394.5h1M350 394.5h1M405 394.5h1M74 395.5h1M129 395.5h2M151 395.5h2M326 395.5h2M348 395.5h2M404 395.5h1M75 396.5h1M131 396.5h1M153 396.5h2M324 396.5h2M347 396.5h1M403 396.5h1M76 397.5h1M132 397.5h1M155 397.5h1M322 397.5h2M346 397.5h1M402 397.5h1M77 398.5h1M133 398.5h2M156 398.5h2M320 398.5h2M344 398.5h2M401 398.5h1M78 399.5h1M135 399.5h1M158 399.5h2M318 399.5h2M343 399.5h1M400 399.5h1M79 400.5h1M136 400.5h2M160 400.5h3M316 400.5h2M341 400.5h2M399 400.5h1M80 401.5h1M138 401.5h1M163 401.5h2M314 401.5h2M339 401.5h2M398 401.5h1M81 402.5h1M139 402.5h2M165 402.5h2M311 402.5h3M337 402.5h2M397 402.5h1M82 403.5h1M141 403.5h2M167 403.5h2M309 403.5h2M335 403.5h2M396 403.5h1M83 404.5h1M143 404.5h2M169 404.5h2M307 404.5h2M334 404.5h1M395 404.5h1M84 405.5h1M145 405.5h2M171 405.5h3M305 405.5h2M332 405.5h2M394 405.5h1M85 406.5h1M147 406.5h1M174 406.5h3M302 406.5h3M331 406.5h1M393 406.5h1M86 407.5h1M148 407.5h2M177 407.5h3M299 407.5h3M329 407.5h2M392 407.5h1M87 408.5h1M150 408.5h1M180 408.5h3M296 408.5h3M327 408.5h2M391 408.5h1M88 409.5h1M151 409.5h2M183 409.5h3M293 409.5h3M325 409.5h2M390 409.5h1M89 410.5h1M153 410.5h2M186 410.5h3M290 410.5h3M323 410.5h2M388 410.5h2M90 411.5h2M155 411.5h3M189 411.5h3M287 411.5h3M321 411.5h2M387 411.5h1M92 412.5h1M158 412.5h3M192 412.5h3M284 412.5h3M318 412.5h3M386 412.5h1M93 413.5h1M161 413.5h2M195 413.5h4M279 413.5h5M315 413.5h3M385 413.5h1M94 414.5h1M163 414.5h2M199 414.5h6M273 414.5h6M313 414.5h2M384 414.5h1M95 415.5h1M165 415.5h2M205 415.5h7M267 415.5h6M311 415.5h2M382 415.5h2M96 416.5h2M167 416.5h3M212 416.5h6M260 416.5h7M309 416.5h2M381 416.5h1M98 417.5h1M170 417.5h3M218 417.5h6M254 417.5h6M306 417.5h3M380 417.5h1M99 418.5h1M173 418.5h2M224 418.5h30M303 418.5h3M379 418.5h1M100 419.5h2M175 419.5h2M301 419.5h2M377 419.5h2M102 420.5h1M177 420.5h2M299 420.5h2M376 420.5h1M103 421.5h1M179 421.5h3M297 421.5h2M375 421.5h1M104 422.5h2M182 422.5h4M293 422.5h4M373 422.5h2M106 423.5h1M186 423.5h4M288 423.5h5M372 423.5h1M107 424.5h2M190 424.5h5M284 424.5h4M370 424.5h2M109 425.5h1M195 425.5h4M280 425.5h4M369 425.5h1M110 426.5h2M199 426.5h4M275 426.5h5M367 426.5h2M112 427.5h1M203 427.5h7M269 427.5h6M366 427.5h1M113 428.5h2M210 428.5h6M262 428.5h7M364 428.5h2M115 429.5h2M216 429.5h7M256 429.5h6M362 429.5h2M117 430.5h2M223 430.5h33M360 430.5h2M119 431.5h1M359 431.5h1M120 432.5h2M357 432.5h2M122 433.5h1M356 433.5h1M123 434.5h1M355 434.5h1M124 435.5h2M353 435.5h2M126 436.5h2M351 436.5h2M128 437.5h2M349 437.5h2M130 438.5h2M347 438.5h2M132 439.5h2M345 439.5h2M134 440.5h2M343 440.5h2M136 441.5h2M341 441.5h2M138 442.5h2M339 442.5h2M140 443.5h2M337 443.5h2M142 444.5h2M335 444.5h2M144 445.5h2M333 445.5h2M146 446.5h3M330 446.5h3M149 447.5h2M328 447.5h2M151 448.5h2M326 448.5h2M153 449.5h3M323 449.5h3M156 450.5h2M320 450.5h3M158 451.5h3M318 451.5h2M161 452.5h3M315 452.5h3M164 453.5h2M313 453.5h2M166 454.5h2M311 454.5h2M168 455.5h3M307 455.5h4M171 456.5h4M303 456.5h4M175 457.5h4M300 457.5h3M179 458.5h4M296 458.5h4M183 459.5h3M292 459.5h4M186 460.5h4M288 460.5h4M190 461.5h4M284 461.5h4M194 462.5h4M280 462.5h4M198 463.5h6M274 463.5h6M204 464.5h8M266 464.5h8M212 465.5h16M250 465.5h16M228 466.5h22M227 13.5h1M227 14.5h1M227 15.5h1M227 16.5h1M227 17.5h1M227 18.5h1M227 19.5h1M227 20.5h1M227 21.5h1M228 22.5h1M228 23.5h1M228 24.5h1M228 25.5h1M228 26.5h1M228 27.5h1M228 28.5h1M228 29.5h1M228 30.5h1M228 31.5h1M228 32.5h1M228 33.5h1M228 34.5h1M228 35.5h1M228 36.5h1M228 37.5h1M341 37.5h1M228 38.5h1M340 38.5h1M229 39.5h1M340 39.5h1M229 40.5h1M339 40.5h1M229 41.5h1M339 41.5h1M229 42.5h1M338 42.5h1M229 43.5h1M338 43.5h1M229 44.5h1M337 44.5h1M229 45.5h1M337 45.5h1M229 46.5h1M336 46.5h1M229 47.5h1M336 47.5h1M335 48.5h1M115 49.5h1M335 49.5h1M116 50.5h1M334 50.5h1M116 51.5h1M334 51.5h1M117 52.5h1M333 52.5h1M118 53.5h1M333 53.5h1M118 54.5h1M332 54.5h1M119 55.5h1M332 55.5h1M120 56.5h1M331 56.5h1M120 57.5h1M331 57.5h1M121 58.5h1M330 58.5h1M122 59.5h1M330 59.5h1M122 60.5h1M329 60.5h1M123 61.5h1M329 61.5h1M124 62.5h1M328 62.5h1M124 63.5h1M271 63.5h1M328 63.5h1M125 64.5h1M271 64.5h1M327 64.5h1M125 65.5h1M271 65.5h1M327 65.5h1M126 66.5h1M196 66.5h1M270 66.5h1M326 66.5h1M127 67.5h1M196 67.5h1M270 67.5h1M326 67.5h1M127 68.5h1M197 68.5h1M270 68.5h1M325 68.5h1M128 69.5h1M197 69.5h1M270 69.5h1M129 70.5h1M197 70.5h1M270 70.5h1M129 71.5h1M197 71.5h1M270 71.5h1M130 72.5h1M198 72.5h1M269 72.5h1M131 73.5h1M198 73.5h1M269 73.5h1M131 74.5h1M198 74.5h1M269 74.5h1M132 75.5h1M198 75.5h1M269 75.5h1M133 76.5h1M199 76.5h1M269 76.5h1M133 77.5h1M199 77.5h1M269 77.5h1M134 78.5h1M199 78.5h1M268 78.5h1M200 79.5h1M268 79.5h1M200 80.5h1M268 80.5h1M200 81.5h1M268 81.5h1M200 82.5h1M268 82.5h1M201 83.5h1M268 83.5h1M201 84.5h1M267 84.5h1M201 85.5h1M267 85.5h1M201 86.5h1M267 86.5h1M202 87.5h1M202 88.5h1M135 94.5h1M136 95.5h1M137 96.5h1M137 97.5h1M138 98.5h1M139 99.5h1M140 100.5h1M140 101.5h1M141 102.5h1M142 103.5h1M143 104.5h1M144 105.5h1M144 106.5h1M145 107.5h1M146 108.5h1M147 109.5h1M147 110.5h1M363 110.5h1M148 111.5h1M362 111.5h1M149 112.5h1M361 112.5h1M360 113.5h1M359 114.5h1M358 115.5h1M429 115.5h1M357 116.5h1M427 116.5h2M356 117.5h1M426 117.5h1M355 118.5h1M424 118.5h2M355 119.5h1M423 119.5h1M354 120.5h1M421 120.5h2M353 121.5h1M420 121.5h1M352 122.5h1M418 122.5h2M351 123.5h1M417 123.5h1M350 124.5h1M415 124.5h2M349 125.5h1M413 125.5h2M348 126.5h1M412 126.5h1M347 127.5h1M410 127.5h2M409 128.5h1M407 129.5h2M406 130.5h1M404 131.5h2M403 132.5h1M401 133.5h2M400 134.5h1M37 137.5h1M38 138.5h2M40 139.5h2M42 140.5h2M44 141.5h2M46 142.5h2M48 143.5h2M50 144.5h2M52 145.5h2M54 146.5h2M87 146.5h1M56 147.5h2M88 147.5h2M58 148.5h2M90 148.5h1M60 149.5h2M91 149.5h2M62 150.5h2M93 150.5h2M64 151.5h2M95 151.5h1M66 152.5h2M96 152.5h2M68 153.5h1M98 153.5h1M99 154.5h2M101 155.5h2M103 156.5h1M104 157.5h2M106 158.5h1M457 227.5h9M440 228.5h17M431 229.5h9M60 239.5h24M395 239.5h24M39 249.5h9M22 250.5h17M13 251.5h9M372 320.5h1M373 321.5h2M375 322.5h1M376 323.5h2M378 324.5h2M380 325.5h1M410 325.5h1M381 326.5h2M411 326.5h2M383 327.5h1M413 327.5h2M384 328.5h2M415 328.5h2M386 329.5h2M417 329.5h2M388 330.5h1M419 330.5h2M389 331.5h2M421 331.5h2M391 332.5h1M423 332.5h2M425 333.5h2M427 334.5h2M429 335.5h2M431 336.5h2M433 337.5h2M435 338.5h2M437 339.5h2M439 340.5h2M441 341.5h1M78 344.5h1M76 345.5h2M75 346.5h1M73 347.5h2M72 348.5h1M70 349.5h2M69 350.5h1M67 351.5h2M131 351.5h1M66 352.5h1M130 352.5h1M64 353.5h2M129 353.5h1M62 354.5h2M128 354.5h1M61 355.5h1M127 355.5h1M59 356.5h2M126 356.5h1M58 357.5h1M125 357.5h1M56 358.5h2M124 358.5h1M55 359.5h1M123 359.5h1M53 360.5h2M123 360.5h1M52 361.5h1M122 361.5h1M50 362.5h2M121 362.5h1M49 363.5h1M120 363.5h1M119 364.5h1M118 365.5h1M117 366.5h1M329 366.5h1M116 367.5h1M330 367.5h1M115 368.5h1M331 368.5h1M331 369.5h1M332 370.5h1M333 371.5h1M334 372.5h1M334 373.5h1M335 374.5h1M336 375.5h1M337 376.5h1M338 377.5h1M338 378.5h1M339 379.5h1M340 380.5h1M341 381.5h1M341 382.5h1M342 383.5h1M343 384.5h1M276 390.5h1M276 391.5h1M211 392.5h1M277 392.5h1M211 393.5h1M277 393.5h1M211 394.5h1M277 394.5h1M210 395.5h1M277 395.5h1M210 396.5h1M278 396.5h1M210 397.5h1M278 397.5h1M210 398.5h1M278 398.5h1M210 399.5h1M278 399.5h1M210 400.5h1M279 400.5h1M344 400.5h1M209 401.5h1M279 401.5h1M345 401.5h1M209 402.5h1M279 402.5h1M345 402.5h1M209 403.5h1M280 403.5h1M346 403.5h1M209 404.5h1M280 404.5h1M347 404.5h1M209 405.5h1M280 405.5h1M347 405.5h1M209 406.5h1M280 406.5h1M348 406.5h1M208 407.5h1M281 407.5h1M349 407.5h1M208 408.5h1M281 408.5h1M349 408.5h1M208 409.5h1M281 409.5h1M350 409.5h1M153 410.5h1M208 410.5h1M281 410.5h1M351 410.5h1M152 411.5h1M208 411.5h1M282 411.5h1M351 411.5h1M152 412.5h1M208 412.5h1M282 412.5h1M352 412.5h1M151 413.5h1M207 413.5h1M353 413.5h1M151 414.5h1M207 414.5h1M353 414.5h1M150 415.5h1M207 415.5h1M354 415.5h1M150 416.5h1M354 416.5h1M149 417.5h1M355 417.5h1M149 418.5h1M356 418.5h1M148 419.5h1M356 419.5h1M148 420.5h1M357 420.5h1M147 421.5h1M358 421.5h1M147 422.5h1M358 422.5h1M146 423.5h1M359 423.5h1M146 424.5h1M360 424.5h1M145 425.5h1M360 425.5h1M145 426.5h1M361 426.5h1M144 427.5h1M362 427.5h1M144 428.5h1M362 428.5h1M143 429.5h1M363 429.5h1M143 430.5h1M142 431.5h1M249 431.5h1M142 432.5h1M249 432.5h1M141 433.5h1M249 433.5h1M141 434.5h1M249 434.5h1M140 435.5h1M249 435.5h1M140 436.5h1M249 436.5h1M139 437.5h1M249 437.5h1M139 438.5h1M249 438.5h1M138 439.5h1M249 439.5h1M138 440.5h1M250 440.5h1M137 441.5h1M250 441.5h1M250 442.5h1M250 443.5h1M250 444.5h1M250 445.5h1M250 446.5h1M250 447.5h1M250 448.5h1M250 449.5h1M250 450.5h1M250 451.5h1M250 452.5h1M250 453.5h1M250 454.5h1M250 455.5h1M250 456.5h1M251 457.5h1M251 458.5h1M251 459.5h1M251 460.5h1M251 461.5h1M251 462.5h1M251 463.5h1M251 464.5h1M251 465.5h1"/>
<path stroke="#808080" d="M107.5 159v1M109.5 160v1M111.5 161v1M113.5 163v1M115.5 164v1M117.5 165v1M119.5 166v1M121.5 167v1M123.5 169v1M125.5 170v1M127.5 171v1M129.5 172v1M131.5 174v1M133.5 175v1M133.5 349v1M135.5 176v1M135.5 347v1M137.5 177v1M137.5 345v1M139.5 178v1M139.5 343v1M141.5 180v1M141.5 341v1M143.5 181v1M143.5 339v1M145.5 182v1M145.5 337v1M146.5 335v1M147.5 183v1M148.5 333v1M149.5 113v1M149.5 184v1M150.5 115v1M150.5 331v1M151.5 186v1M152.5 117v1M152.5 329v1M153.5 119v1M153.5 187v1M154.5 327v1M155.5 121v1M155.5 188v1M156.5 123v1M156.5 325v1M157.5 189v1M158.5 125v1M158.5 323v1M159.5 127v1M159.5 191v1M160.5 129v1M160.5 321v1M161.5 192v1M162.5 131v1M162.5 319v1M163.5 133v1M163.5 193v1M164.5 317v1M165.5 135v1M165.5 194v1M166.5 137v1M166.5 315v1M167.5 195v1M168.5 139v1M168.5 313v1M169.5 141v1M169.5 197v1M170.5 143v1M170.5 311v1M171.5 198v1M172.5 145v1M172.5 309v1M173.5 147v1M173.5 199v1M173.5 307v1M175.5 149v1M175.5 200v1M175.5 305v1M176.5 151v1M177.5 201v1M177.5 303v1M178.5 153v1M179.5 155v1M179.5 203v1M179.5 301v1M180.5 157v1M181.5 204v1M181.5 299v1M182.5 159v1M183.5 161v1M183.5 205v1M183.5 297v1M185.5 163v1M185.5 206v1M185.5 295v1M186.5 165v1M187.5 207v1M187.5 293v1M188.5 167v1M189.5 169v1M189.5 209v1M189.5 291v1M190.5 171v1M191.5 210v1M191.5 289v1M192.5 173v1M193.5 175v1M193.5 211v1M193.5 287v1M195.5 177v1M195.5 212v1M195.5 285v1M196.5 179v1M197.5 214v1M197.5 283v1M198.5 181v1M199.5 183v1M199.5 215v1M199.5 281v1M200.5 185v1M200.5 279v1M201.5 216v1M202.5 187v1M202.5 277v1M203.5 189v1M203.5 217v1M204.5 275v1M205.5 191v1M205.5 218v1M206.5 193v1M206.5 273v1M207.5 220v1M208.5 195v1M208.5 271v1M209.5 197v1M209.5 221v1M210.5 199v1M210.5 269v1M211.5 222v1M211.5 389v1M211.5 391v1M212.5 201v1M212.5 267v1M212.5 383v1M212.5 385v1M212.5 387v1M213.5 203v1M213.5 223v1M213.5 379v1M213.5 381v1M214.5 265v1M214.5 373v1M214.5 375v1M214.5 377v1M215.5 205v1M215.5 224v1M215.5 367v1M215.5 369v1M215.5 371v1M216.5 207v1M216.5 263v1M216.5 363v1M216.5 365v1M217.5 226v1M217.5 357v1M217.5 359v1M217.5 361v1M218.5 209v1M218.5 261v1M218.5 351v1M218.5 353v1M218.5 355v1M219.5 211v1M219.5 227v1M219.5 345v1M219.5 347v1M219.5 349v1M220.5 213v1M220.5 259v1M220.5 341v1M220.5 343v1M221.5 228v1M221.5 335v1M221.5 337v1M221.5 339v1M222.5 215v1M222.5 257v1M222.5 329v1M222.5 331v1M222.5 333v1M223.5 217v1M223.5 229v1M223.5 325v1M223.5 327v1M224.5 255v1M224.5 319v1M224.5 321v1M224.5 323v1M225.5 219v1M225.5 231v1M225.5 313v1M225.5 315v1M225.5 317v1M226.5 221v1M226.5 253v1M226.5 307v1M226.5 309v1M226.5 311v1M227.5 232v1M227.5 251v1M227.5 303v1M227.5 305v1M228.5 223v1M228.5 297v1M228.5 299v1M228.5 301v1M229.5 225v1M229.5 233v1M229.5 249v1M229.5 291v1M229.5 293v1M229.5 295v1M230.5 227v1M230.5 287v1M230.5 289v1M231.5 234v1M231.5 247v1M231.5 281v1M231.5 283v1M231.5 285v1M232.5 229v1M232.5 275v1M232.5 277v1M232.5 279v1M233.5 231v1M233.5 235v1M233.5 245v1M233.5 269v1M233.5 271v1M233.5 273v1M234.5 265v1M234.5 267v1M235.5 233v1M235.5 237v1M235.5 243v1M235.5 259v1M235.5 261v1M235.5 263v1M236.5 235v1M236.5 253v1M236.5 255v1M236.5 257v1M237.5 238v1M237.5 241v1M237.5 249v1M237.5 251v1M238.5 237v1M238.5 243v1M238.5 245v1M238.5 247v1M239.5 237v1M239.5 239v1M239.5 241v1M240.5 231v1M240.5 233v1M240.5 235v1M240.5 241v1M241.5 227v1M241.5 229v1M241.5 237v1M241.5 240v1M242.5 221v1M242.5 223v1M242.5 225v1M242.5 243v1M243.5 215v1M243.5 217v1M243.5 219v1M243.5 235v1M243.5 241v1M243.5 245v1M244.5 211v1M244.5 213v1M245.5 205v1M245.5 207v1M245.5 209v1M245.5 233v1M245.5 243v1M245.5 247v1M246.5 199v1M246.5 201v1M246.5 203v1M246.5 249v1M247.5 193v1M247.5 195v1M247.5 197v1M247.5 231v1M247.5 244v1M248.5 189v1M248.5 191v1M248.5 251v1M249.5 183v1M249.5 185v1M249.5 187v1M249.5 229v1M249.5 245v1M249.5 253v1M250.5 177v1M250.5 179v1M250.5 181v1M250.5 255v1M251.5 173v1M251.5 175v1M251.5 227v1M251.5 246v1M252.5 167v1M252.5 169v1M252.5 171v1M252.5 225v1M252.5 257v1M253.5 161v1M253.5 163v1M253.5 165v1M253.5 247v1M253.5 259v1M254.5 155v1M254.5 157v1M254.5 159v1M254.5 223v1M255.5 151v1M255.5 153v1M255.5 249v1M255.5 261v1M256.5 145v1M256.5 147v1M256.5 149v1M256.5 221v1M256.5 263v1M257.5 139v1M257.5 141v1M257.5 143v1M257.5 250v1M258.5 135v1M258.5 137v1M258.5 219v1M258.5 265v1M259.5 129v1M259.5 131v1M259.5 133v1M259.5 251v1M259.5 267v1M260.5 123v1M260.5 125v1M260.5 127v1M260.5 217v1M260.5 269v1M261.5 117v1M261.5 119v1M261.5 121v1M261.5 252v1M262.5 113v1M262.5 115v1M262.5 215v1M262.5 271v1M263.5 107v1M263.5 109v1M263.5 111v1M263.5 254v1M263.5 273v1M264.5 101v1M264.5 103v1M264.5 105v1M264.5 213v1M265.5 97v1M265.5 99v1M265.5 255v1M265.5 275v1M266.5 91v1M266.5 93v1M266.5 95v1M266.5 211v1M266.5 277v1M267.5 87v1M267.5 89v1M267.5 256v1M268.5 209v1M268.5 279v1M269.5 257v1M269.5 281v1M270.5 207v1M270.5 283v1M271.5 258v1M272.5 205v1M272.5 285v1M273.5 260v1M273.5 287v1M274.5 203v1M275.5 261v1M275.5 289v1M276.5 201v1M276.5 291v1M277.5 262v1M278.5 199v1M278.5 293v1M279.5 197v1M279.5 263v1M279.5 295v1M280.5 297v1M281.5 195v1M281.5 264v1M282.5 299v1M283.5 193v1M283.5 266v1M283.5 301v1M285.5 191v1M285.5 267v1M285.5 303v1M286.5 305v1M287.5 189v1M287.5 268v1M288.5 307v1M289.5 187v1M289.5 269v1M289.5 309v1M290.5 311v1M291.5 185v1M291.5 271v1M292.5 313v1M293.5 183v1M293.5 272v1M293.5 315v1M295.5 181v1M295.5 273v1M295.5 317v1M296.5 319v1M297.5 179v1M297.5 274v1M298.5 321v1M299.5 177v1M299.5 275v1M299.5 323v1M300.5 325v1M301.5 175v1M301.5 277v1M302.5 327v1M303.5 173v1M303.5 278v1M303.5 329v1M305.5 171v1M305.5 279v1M305.5 331v1M306.5 169v1M306.5 333v1M307.5 280v1M308.5 167v1M308.5 335v1M309.5 281v1M309.5 337v1M310.5 165v1M310.5 339v1M311.5 283v1M312.5 163v1M312.5 341v1M313.5 284v1M313.5 343v1M314.5 161v1M315.5 285v1M315.5 345v1M316.5 159v1M316.5 347v1M317.5 286v1M318.5 157v1M318.5 349v1M319.5 287v1M319.5 351v1M320.5 155v1M320.5 353v1M321.5 289v1M322.5 153v1M322.5 355v1M323.5 290v1M323.5 357v1M324.5 151v1M325.5 291v1M325.5 359v1M326.5 149v1M326.5 361v1M327.5 292v1M328.5 147v1M328.5 363v1M329.5 294v1M329.5 365v1M330.5 145v1M331.5 295v1M332.5 143v1M333.5 141v1M333.5 296v1M335.5 139v1M335.5 297v1M337.5 137v1M337.5 298v1M339.5 135v1M339.5 300v1M341.5 133v1M341.5 301v1M343.5 131v1M343.5 302v1M345.5 129v1M345.5 303v1M347.5 304v1M349.5 306v1M351.5 307v1M353.5 308v1M355.5 309v1M357.5 311v1M359.5 312v1M361.5 313v1M363.5 314v1M365.5 315v1M367.5 317v1M369.5 318v1M371.5 319v1"/>
<path stroke="#f00" d="M93 387.5h3M103 387.5h3M92 388.5h1M96 388.5h1M102 388.5h1M106 388.5h1M91 389.5h1M97 389.5h1M101 389.5h1M107 389.5h1M91 390.5h1M97 390.5h1M101 390.5h1M107 390.5h1M91 391.5h1M97 391.5h1M101 391.5h1M107 391.5h1M92 392.5h1M98 392.5h1M100 392.5h1M106 392.5h1M93 393.5h1M98 393.5h1M100 393.5h1M105 393.5h1M98 394.5h1M100 394.5h1M98 395.5h1M100 395.5h1M99 396.5h1M99 397.5h1M99 398.5h1M99 399.5h1M99 400.5h1M99 401.5h1M99 402.5h1M99 403.5h1M82 371.5h3M83 372.5h2M82 373.5h1M84 373.5h1M78 374.5h2M81 374.5h1M77 375.5h1M80 375.5h1M76 376.5h1M81 376.5h1M76 377.5h1M81 377.5h1M77 378.5h1M80 378.5h1M78 379.5h2M77 268.5h3M78 269.5h2M77 270.5h1M79 270.5h1M73 271.5h2M76 271.5h1M72 272.5h1M75 272.5h1M71 273.5h1M76 273.5h1M71 274.5h1M76 274.5h1M72 275.5h1M75 275.5h1M73 276.5h2"/>
<path stroke="#ff0" d="M190.5 436v1M190.5 444v5M191.5 437v2M191.5 443v1M191.5 449v1M192.5 439v1M192.5 442v1M192.5 450v1M193.5 440v2M193.5 451v1M194.5 440v1M194.5 452v1M195.5 440v1M195.5 452v1M196.5 440v1M196.5 452v1M197.5 440v1M197.5 452v1M198.5 440v1M198.5 452v1M199.5 440v2M199.5 451v1M200.5 439v1M200.5 442v1M200.5 450v1M201.5 437v2M201.5 443v1M201.5 449v1M202.5 436v1M202.5 444v5M168.5 434v3M168.5 439v1M169.5 433v1M169.5 437v1M169.5 439v1M170.5 433v1M170.5 437v5M171.5 433v1M171.5 437v1M171.5 439v1M172.5 434v3M172.5 439v1M140.5 372v3M140.5 377v1M141.5 371v1M141.5 375v1M141.5 377v1M142.5 371v1M142.5 375v5M143.5 371v1M143.5 375v1M143.5 377v1M144.5 372v3M144.5 377v1"/>
<path stroke="#0f0" d="M298.5 430v1M298.5 446v1M299.5 431v1M299.5 445v1M300.5 432v1M300.5 444v1M301.5 432v1M301.5 444v1M302.5 432v13M303.5 432v1M303.5 444v1M304.5 432v1M304.5 444v1M305.5 432v1M305.5 444v1M306.5 432v1M306.5 444v1M307.5 432v1M307.5 444v1M308.5 432v13M309.5 432v1M309.5 444v1M310.5 432v1M310.5 444v1M311.5 431v1M311.5 445v1M312.5 430v1M312.5 446v1M275.5 441v1M275.5 443v3M275.5 448v1M276.5 442v1M276.5 446v1M276.5 448v1M277.5 442v1M277.5 446v4M278.5 442v1M278.5 446v1M278.5 448v1M279.5 441v1M279.5 443v3M279.5 448v1M224.5 402v1M224.5 404v3M224.5 409v1M225.5 403v1M225.5 407v1M225.5 409v1M226.5 403v1M226.5 407v4M227.5 403v1M227.5 407v1M227.5 409v1M228.5 402v1M228.5 404v3M228.5 409v1"/>
<path stroke="#00f" d="M393 372.5h5M390 373.5h3M398 373.5h1M389 374.5h1M399 374.5h3M388 375.5h1M398 375.5h1M402 375.5h1M387 376.5h1M397 376.5h1M403 376.5h1M397 377.5h1M403 377.5h1M389 378.5h3M397 378.5h1M403 378.5h1M388 379.5h1M392 379.5h1M398 379.5h1M402 379.5h1M387 380.5h1M393 380.5h1M399 380.5h3M387 381.5h1M393 381.5h1M387 382.5h1M393 382.5h1M403 382.5h1M388 383.5h1M392 383.5h1M402 383.5h1M389 384.5h3M401 384.5h1M392 385.5h1M398 385.5h3M393 386.5h5M372.5 395v1M372.5 401v1M373.5 394v1M373.5 396v1M373.5 400v1M373.5 402v1M374.5 394v1M374.5 397v3M374.5 402v1M375.5 394v1M375.5 402v1M376.5 395v1M376.5 401v1M377.5 395v2M377.5 400v2M378.5 397v3M291.5 394v1M291.5 400v1M292.5 393v1M292.5 395v1M292.5 399v1M292.5 401v1M293.5 393v1M293.5 396v3M293.5 401v1M294.5 393v1M294.5 401v1M295.5 394v1M295.5 400v1M296.5 394v2M296.5 399v2M297.5 396v3"/>
<path stroke="#f00" d="M442 274.5h5M441 275.5h1M447 275.5h1M440 276.5h1M448 276.5h1M439 277.5h1M449 277.5h1M438 278.5h1M450 278.5h1M438 279.5h1M450 279.5h1M438 280.5h1M450 280.5h1M438 281.5h1M450 281.5h1M438 282.5h1M450 282.5h1M439 283.5h1M449 283.5h1M440 284.5h1M448 284.5h1M440 285.5h1M448 285.5h1M436 286.5h1M440 286.5h1M448 286.5h1M437 287.5h1M439 287.5h1M449 287.5h1M438 288.5h1M450 288.5h1M451 289.5h1M452 290.5h1M436 304.5h3M434 305.5h2M439 305.5h2M434 306.5h1M440 306.5h1M433 307.5h1M441 307.5h1M433 308.5h1M437 308.5h1M441 308.5h1M433 309.5h1M441 309.5h1M434 310.5h1M440 310.5h1M434 311.5h2M439 311.5h2M436 312.5h3M348 361.5h3M346 362.5h2M351 362.5h2M346 363.5h1M352 363.5h1M345 364.5h1M353 364.5h1M345 365.5h1M349 365.5h1M353 365.5h1M345 366.5h1M353 366.5h1M346 367.5h1M352 367.5h1M346 368.5h2M351 368.5h2M348 369.5h3"/>
<path stroke="#ff0" d="M430.5 166v1M431.5 167v1M432.5 168v13M433.5 167v1M434.5 166v1M435.5 167v1M436.5 168v13M437.5 167v1M438.5 166v1M439.5 167v1M440.5 168v11M440.5 182v1M441.5 169v1M441.5 179v1M441.5 181v1M442.5 170v1M442.5 180v1M443.5 169v1M443.5 179v1M443.5 181v1M444.5 168v11M444.5 182v1"/>
<path stroke="#0f0" d="M443.5 197v1M443.5 199v3M443.5 204v1M444.5 198v1M444.5 202v1M444.5 204v1M445.5 198v1M445.5 202v4M446.5 198v1M446.5 202v1M446.5 204v1M447.5 197v1M447.5 199v3M447.5 204v1M391.5 302v1M391.5 304v3M391.5 309v1M392.5 303v1M392.5 307v1M392.5 309v1M393.5 303v1M393.5 307v4M394.5 303v1M394.5 307v1M394.5 309v1M395.5 302v1M395.5 304v3M395.5 309v1M377 79.5h5M376 80.5h1M382 80.5h1M375 81.5h1M383 81.5h1M375 82.5h1M383 82.5h1M375 83.5h1M383 83.5h1M376 84.5h1M382 84.5h1M371 85.5h7M381 85.5h7M371 89.5h17"/>
<path stroke="#ff0" d="M396.5 100v3M396.5 105v1M397.5 99v1M397.5 103v1M397.5 105v1M398.5 99v1M398.5 103v5M399.5 99v1M399.5 103v1M399.5 105v1M400.5 100v3M400.5 105v1M401.5 203v3M401.5 208v1M402.5 202v1M402.5 206v1M402.5 208v1M403.5 202v1M403.5 206v5M404.5 202v1M404.5 206v1M404.5 208v1M405.5 203v3M405.5 208v1"/>
<path stroke="#00f" d="M274 26.5h1M278 26.5h1M282 26.5h1M275 27.5h1M277 27.5h1M279 27.5h1M281 27.5h1M283 27.5h1M276 28.5h1M280 28.5h1M284 28.5h1M276 29.5h1M280 29.5h1M284 29.5h1M276 30.5h1M280 30.5h1M284 30.5h1M276 31.5h1M280 31.5h1M284 31.5h1M276 32.5h1M280 32.5h1M284 32.5h1M276 33.5h1M280 33.5h1M284 33.5h1M276 34.5h1M280 34.5h1M284 34.5h1M276 35.5h1M280 35.5h1M284 35.5h1M276 36.5h1M280 36.5h1M284 36.5h1M276 37.5h1M280 37.5h1M284 37.5h1M289 37.5h1M276 38.5h1M280 38.5h1M284 38.5h1M288 38.5h3M276 39.5h1M280 39.5h1M284 39.5h1M289 39.5h1M276 40.5h1M280 40.5h1M284 40.5h1M289 40.5h1M285 41.5h1M288 41.5h1M286 42.5h2M305.5 37v3M306.5 40v1M306.5 43v1M307.5 38v1M307.5 41v1M307.5 43v1M308.5 37v1M308.5 39v1M308.5 41v5M309.5 38v1M309.5 41v1M309.5 43v1M310.5 40v1M310.5 43v1M311.5 37v3M333.5 99v3M334.5 102v1M334.5 105v1M335.5 100v1M335.5 103v1M335.5 105v1M336.5 99v1M336.5 101v1M336.5 103v5M337.5 100v1M337.5 103v1M337.5 105v1M338.5 102v1M338.5 105v1M339.5 99v3"/>
<path stroke="#f00" d="M178 32.5h5M181 33.5h2M180 34.5h1M182 34.5h1M179 35.5h1M182 35.5h1M178 36.5h1M182 36.5h1M177 37.5h1M168 38.5h1M176 38.5h1M169 39.5h1M175 39.5h1M170 40.5h1M174 40.5h1M171 41.5h1M173 41.5h1M172 42.5h1M171 43.5h1M173 43.5h1M170 44.5h1M174 44.5h1M169 45.5h1M175 45.5h1M168 46.5h1M176 46.5h1M167 47.5h1M166 48.5h1M198.5 30v1M198.5 35v2M199.5 30v1M199.5 33v2M199.5 36v1M200.5 31v2M200.5 36v1M201.5 36v1M202.5 36v1M203.5 30v8M204.5 29v1M204.5 36v1M205.5 36v1M249.5 69v1M249.5 74v2M250.5 69v1M250.5 72v2M250.5 75v1M251.5 70v2M251.5 75v1M252.5 75v1M253.5 75v1M254.5 69v8M255.5 68v1M255.5 75v1M256.5 75v1"/>
<path stroke="#ff0" d="M77 91.5h1M83 91.5h1M87 91.5h3M77 92.5h1M83 92.5h2M86 92.5h1M90 92.5h1M75 93.5h3M83 93.5h1M85 93.5h1M91 93.5h1M77 94.5h1M82 94.5h1M84 94.5h1M91 94.5h1M77 95.5h1M81 95.5h1M85 95.5h1M91 95.5h1M77 96.5h1M81 96.5h1M86 96.5h1M90 96.5h1M77 97.5h1M81 97.5h1M87 97.5h3M77 98.5h1M81 98.5h1M88 98.5h1M77 99.5h1M81 99.5h1M89 99.5h1M78 100.5h1M80 100.5h1M90 100.5h1M79 101.5h1M91 101.5h1M79 102.5h1M91 102.5h1M79 103.5h1M91 103.5h1M79 104.5h1M91 104.5h1M79 105.5h1M91 105.5h1M90 106.5h1M89 107.5h1M100.5 77v1M101.5 77v1M102.5 76v8M103.5 77v1M103.5 80v1M104.5 77v1M104.5 79v1M105.5 79v1M105.5 82v2M106.5 80v2M106.5 84v1M181.5 78v1M182.5 78v1M183.5 77v8M184.5 78v1M184.5 81v1M185.5 78v1M185.5 80v1M186.5 80v1M186.5 83v2M187.5 81v2M187.5 85v1"/>
<path stroke="#0f0" d="M30 188.5h1M36 188.5h1M42 188.5h1M29 189.5h2M35 189.5h2M41 189.5h1M29 190.5h1M31 190.5h1M35 190.5h1M37 190.5h1M41 190.5h1M28 191.5h1M31 191.5h1M34 191.5h1M37 191.5h1M40 191.5h1M27 192.5h1M31 192.5h1M33 192.5h1M37 192.5h1M39 192.5h1M27 193.5h1M32 193.5h2M38 193.5h2M26 194.5h1M32 194.5h1M38 194.5h1M30 198.5h1M36 198.5h1M42 198.5h1M29 199.5h2M35 199.5h2M41 199.5h1M29 200.5h1M31 200.5h1M35 200.5h1M37 200.5h1M41 200.5h1M28 201.5h1M31 201.5h1M34 201.5h1M37 201.5h1M40 201.5h1M27 202.5h1M31 202.5h1M33 202.5h1M37 202.5h1M39 202.5h1M27 203.5h1M32 203.5h2M38 203.5h2M26 204.5h1M32 204.5h1M38 204.5h1M38.5 166v1M38.5 171v1M39.5 167v4M40.5 169v1M40.5 172v2M41.5 168v5M41.5 174v1M42.5 169v1M42.5 172v2M43.5 167v4M44.5 166v1M44.5 171v1M126.5 109v1M126.5 114v1M127.5 110v4M128.5 112v1M128.5 115v2M129.5 111v5M129.5 117v1M130.5 112v1M130.5 115v2M131.5 110v4M132.5 109v1M132.5 114v1"/>
<path stroke="#00f" d="M32 296.5h1M48 296.5h1M33 297.5h1M47 297.5h1M34 298.5h1M46 298.5h1M35 299.5h1M45 299.5h1M35 300.5h1M45 300.5h1M36 301.5h1M44 301.5h1M36 302.5h1M44 302.5h1M36 303.5h1M44 303.5h1M32 304.5h17M36 305.5h1M44 305.5h1M36 306.5h1M44 306.5h1M36 307.5h1M44 307.5h1M35 308.5h1M45 308.5h1M35 309.5h1M45 309.5h1M34 310.5h1M46 310.5h1M33 311.5h1M47 311.5h1M32 312.5h1M48 312.5h1M30 273.5h1M33 273.5h1M36 273.5h1M29 274.5h2M32 274.5h3M36 274.5h2M30 275.5h1M33 275.5h1M36 275.5h1M31 276.5h1M33 276.5h1M35 276.5h1M32 277.5h3M33 278.5h1M31 279.5h5M33 280.5h1M33 281.5h1M82 168.5h1M85 168.5h1M88 168.5h1M81 169.5h2M84 169.5h3M88 169.5h2M82 170.5h1M85 170.5h1M88 170.5h1M83 171.5h1M85 171.5h1M87 171.5h1M84 172.5h3M85 173.5h1M83 174.5h5M85 175.5h1M85 176.5h1"/>
<path stroke="#fff" d="M115 189.5h2M117 190.5h2M119 191.5h2M121 192.5h2M123 193.5h2"/>
<path stroke="#00f" d="M100.5 177v5M101.5 182v1M102.5 183v1M102.5 189v1M103.5 184v1M103.5 189v1M104.5 178v3M104.5 185v1M104.5 189v1M105.5 177v1M105.5 181v1M105.5 185v1M105.5 189v1M106.5 177v1M106.5 181v1M106.5 185v9M107.5 177v1M107.5 181v1M107.5 185v1M107.5 189v1M108.5 178v3M108.5 185v1M108.5 189v1M109.5 184v1M109.5 189v1M110.5 183v1M110.5 189v1M111.5 182v1M112.5 177v5M128 194.5h1M127 195.5h3M128 196.5h1"/>
<path stroke="#fff" d="M132 310.5h6M126 311.5h6"/>
<path stroke="#00f" d="M111.5 310v1M112.5 308v5M113.5 310v1M113.5 313v1M114.5 314v1M114.5 320v1M115.5 315v1M115.5 320v1M116.5 310v1M116.5 316v1M116.5 320v1M117.5 310v1M117.5 316v1M117.5 320v1M118.5 308v17M119.5 310v1M119.5 316v1M119.5 320v1M120.5 310v1M120.5 316v1M120.5 320v1M121.5 315v1M121.5 320v1M122.5 314v1M122.5 320v1M123.5 310v1M123.5 313v1M124.5 308v5M125.5 310v1M141 306.5h1M140 307.5h3M141 308.5h1"/>
<path stroke="#fff" d="M241.5 363v11"/>
<path stroke="#0f0" d="M236.5 375v1M236.5 385v1M237.5 376v1M237.5 384v1M238.5 377v7M239.5 381v1M240.5 381v1M240.5 388v3M241.5 381v1M241.5 387v1M241.5 391v1M242.5 379v9M242.5 391v1M243.5 381v1M243.5 387v1M243.5 391v1M244.5 381v1M244.5 388v3M245.5 381v1M246.5 377v7M247.5 376v1M247.5 384v1M248.5 375v1M248.5 385v1M241 358.5h1M240 359.5h3M241 360.5h1"/>
<path stroke="#fff" d="M137.5 322v4M138.5 316v6M139.5 313v3"/>
<path stroke="#ff0" d="M123.5 326v1M124.5 326v1M125.5 326v1M126.5 326v1M127.5 324v15M128.5 326v1M128.5 332v1M129.5 326v1M129.5 332v1M130.5 326v1M130.5 331v1M131.5 326v1M131.5 330v1M132.5 330v1M133.5 330v1M133.5 336v3M134.5 331v1M134.5 335v1M134.5 339v1M135.5 332v3M135.5 340v1M143 309.5h1M142 310.5h3M143 311.5h1"/>
<path stroke="#fff" d="M332 322.5h1M333 323.5h1M334 324.5h1M335 325.5h2M337 326.5h1M338 327.5h1M339 328.5h1"/>
<path stroke="#f00" d="M340.5 329v1M340.5 339v3M341.5 329v1M341.5 338v1M341.5 341v1M342.5 329v1M342.5 335v3M342.5 341v1M343.5 330v1M343.5 334v1M343.5 341v1M344.5 331v3M344.5 341v1M345.5 341v1M346.5 341v1M347.5 341v1M348.5 341v1M349.5 341v1M350.5 329v15M351.5 328v1M351.5 341v1M352.5 327v1M352.5 341v1M353.5 341v1M354.5 341v1M328 318.5h1M327 319.5h3M328 320.5h1"/>
<path stroke="#fff" d="M118 267.5h1M117 268.5h1M116 269.5h1M115 270.5h1M114 271.5h1M113 272.5h1M112 273.5h1M111 274.5h1M110 275.5h1"/>
<path stroke="#f00" d="M104 270.5h6M108 271.5h2M107 272.5h1M109 272.5h1M106 273.5h1M109 273.5h1M105 274.5h1M109 274.5h1M104 275.5h1M109 275.5h1M96 276.5h5M103 276.5h1M95 277.5h1M101 277.5h2M94 278.5h1M102 278.5h1M93 279.5h1M103 279.5h1M93 280.5h1M103 280.5h1M93 281.5h1M103 281.5h1M93 282.5h1M103 282.5h1M93 283.5h1M103 283.5h1M94 284.5h1M102 284.5h1M95 285.5h1M101 285.5h1M96 286.5h5M123 265.5h1M122 266.5h3M123 267.5h1"/>
<path stroke="#fff" d="M149.5 332v7M150.5 326v6"/>
<path stroke="#ff0" d="M138.5 339v5M138.5 349v1M139.5 338v1M139.5 344v1M139.5 349v1M140.5 337v1M140.5 345v1M140.5 349v1M141.5 337v1M141.5 345v1M141.5 349v1M142.5 337v1M142.5 345v9M143.5 337v1M143.5 345v1M143.5 349v1M144.5 337v1M144.5 345v1M144.5 349v1M145.5 338v1M145.5 344v1M145.5 349v1M146.5 339v5M146.5 349v1M154 322.5h1M153 323.5h3M154 324.5h1"/>
<path stroke="#808080" d="M106 258.5h1M107 259.5h1M108 260.5h2M110 261.5h1M111 262.5h1M112 263.5h2M114 264.5h1M115 265.5h1M116 266.5h2M118 267.5h1"/>
<path stroke="#0f0" d="M93.5 251v1M93.5 255v5M93.5 265v1M94.5 252v1M94.5 254v1M94.5 260v1M94.5 265v1M95.5 253v1M95.5 261v1M95.5 265v1M96.5 253v1M96.5 261v1M96.5 265v1M97.5 253v1M97.5 261v7M98.5 253v1M98.5 261v1M98.5 265v1M99.5 253v1M99.5 261v1M99.5 265v1M100.5 252v1M100.5 254v1M100.5 260v1M100.5 265v1M101.5 251v1M101.5 255v5M101.5 265v1M122 265.5h1M121 266.5h3M122 267.5h1"/>
<path stroke="#fff" d="M109 205.5h3M112 206.5h5M117 207.5h3"/>
<path stroke="#00f" d="M94.5 197v1M94.5 209v1M95.5 196v1M95.5 198v1M95.5 208v1M95.5 210v1M96.5 195v1M96.5 199v1M96.5 207v1M96.5 211v1M97.5 195v1M97.5 200v2M97.5 205v2M97.5 211v1M98.5 195v1M98.5 202v3M98.5 211v1M99.5 195v1M99.5 211v1M100.5 195v1M100.5 211v1M101.5 196v1M101.5 210v1M102.5 196v1M102.5 210v1M103.5 197v1M103.5 209v1M104.5 198v1M104.5 208v1M105.5 199v2M105.5 206v2M106.5 201v5M124 207.5h1M123 208.5h3M124 209.5h1"/>
<path stroke="#fff" d="M118 296.5h6M124 297.5h6"/>
<path stroke="#f00" d="M107 292.5h5M105 293.5h2M112 293.5h2M104 294.5h1M114 294.5h1M103 295.5h1M115 295.5h1M102 296.5h1M116 296.5h1M102 297.5h1M116 297.5h1M101 298.5h1M117 298.5h1M101 299.5h1M117 299.5h1M101 300.5h1M109 300.5h1M117 300.5h1M101 301.5h1M117 301.5h1M101 302.5h1M117 302.5h1M102 303.5h1M116 303.5h1M102 304.5h1M116 304.5h1M103 305.5h1M115 305.5h1M104 306.5h1M114 306.5h1M105 307.5h2M112 307.5h2M107 308.5h5M133 294.5h1M132 295.5h3M133 296.5h1"/>
<path stroke="#0ff" d="M132.5 196v1M132.5 199v1M133.5 202v1M133.5 205v1M133.5 208v1M134.5 211v1M134.5 214v1M135.5 217v1M135.5 220v1M135.5 223v1M136.5 226v1M136.5 229v1M136.5 232v1M137.5 235v1M137.5 238v1M137.5 241v1M138.5 244v1M138.5 247v1M139.5 250v1M139.5 253v1M139.5 256v1M140.5 259v1M140.5 262v1M140.5 265v1M141.5 268v1M141.5 271v1M141.5 274v1M142.5 277v1M142.5 280v1M142.5 283v1M143.5 286v1M143.5 289v1M144.5 292v1M144.5 295v1M144.5 298v1M145.5 301v1M145.5 304v1"/>
<path stroke="#0f0" d="M133.5 198v1M136.5 202v1M139.5 206v1M142.5 210v1M144.5 214v1M147.5 218v1M150.5 222v1M153.5 226v1M155.5 230v1M158.5 234v1M161.5 238v1M164.5 242v1M166.5 246v1M169.5 250v1M172.5 254v1M175.5 258v1M178.5 262v1M180.5 266v1M183.5 270v1M186.5 274v1M189.5 278v1M191.5 282v1M194.5 286v1M197.5 290v1M200.5 294v1M202.5 298v1M205.5 302v1M208.5 306v1M211.5 310v1M213.5 314v1M216.5 318v1M219.5 322v1M222.5 326v1M224.5 330v1M227.5 334v1M230.5 338v1M233.5 342v1M235.5 346v1M238.5 350v1M241.5 354v1"/>
<path stroke="#0ff" d="M132.5 196v4M133.5 200v8M134.5 208v7M135.5 215v7M136.5 222v8M137.5 230v7M138.5 237v8M139.5 245v7M140.5 252v7M141.5 259v8M142.5 267v7M143.5 274v8M144.5 282v7M145.5 289v7M146.5 296v8M147.5 304v4"/>
<path stroke="#ff0" d="M128.5 209v1M129.5 205v1M130.5 201v1M132.5 197v1"/>
<path stroke="#0ff" d="M145 304.5h1M148 306.5h1M151 307.5h1M154 309.5h1M157 310.5h1M160 312.5h1M163 313.5h1M166 315.5h1M169 317.5h1M172 318.5h1M175 320.5h1M178 321.5h1M181 323.5h1M184 324.5h1M187 326.5h1M190 327.5h1M193 329.5h1M196 331.5h1M199 332.5h1M202 334.5h1M205 335.5h1M208 337.5h1M211 338.5h1M214 340.5h1M217 342.5h1M220 343.5h1M223 345.5h1M226 346.5h1M229 348.5h1M232 349.5h1M235 351.5h1M238 352.5h1M241 354.5h1"/>
<path stroke="#ff0" d="M146.5 305v1M147.5 307v1M138.5 293v1M141.5 297v1M143.5 301v1"/>
<path stroke="#0ff" d="M147 307.5h1M151 309.5h1M155 311.5h1M159 313.5h1M163 315.5h1M167 317.5h1M171 319.5h1M175 321.5h1M179 323.5h1M183 325.5h1M187 327.5h1M191 329.5h1M195 331.5h1M199 333.5h1M203 335.5h1M207 337.5h1M211 339.5h1M215 341.5h1M219 343.5h1M223 345.5h1M227 347.5h1M231 349.5h1M235 351.5h1M239 353.5h1M138 293.5h1M140 294.5h1M142 295.5h1M144 297.5h1M146 298.5h1M148 299.5h1M150 300.5h1M152 301.5h1M154 302.5h1M156 304.5h1M158 305.5h1M160 306.5h1M162 307.5h1M164 308.5h1M166 310.5h1M168 311.5h1M170 312.5h1M172 313.5h1M174 314.5h1M176 316.5h1M178 317.5h1M180 318.5h1M182 319.5h1M184 320.5h1M186 321.5h1M188 323.5h1M190 324.5h1M192 325.5h1M194 326.5h1M196 327.5h1M198 329.5h1M200 330.5h1M202 331.5h1M204 332.5h1M206 333.5h1M208 334.5h1M210 336.5h1M212 337.5h1M214 338.5h1M216 339.5h1M218 340.5h1M220 342.5h1M222 343.5h1M224 344.5h1M226 345.5h1M228 346.5h1M230 347.5h1M232 349.5h1M234 350.5h1M236 351.5h1M238 352.5h1M240 353.5h1"/>
<path stroke="#0f0" d="M127 265.5h1M130 266.5h1M133 267.5h1M136 267.5h1M139 268.5h1M142 269.5h1M145 270.5h1M148 270.5h1M151 271.5h1M154 272.5h1M157 273.5h1M160 273.5h1M163 274.5h1M166 275.5h1M169 276.5h1M172 276.5h1M175 277.5h1M178 278.5h1M181 279.5h1M184 279.5h1M187 280.5h1M190 281.5h1M193 282.5h1M196 282.5h1M199 283.5h1M202 284.5h1M205 285.5h1M208 285.5h1M211 286.5h1M214 287.5h1M217 288.5h1M220 288.5h1M223 289.5h1M226 290.5h1M229 291.5h1M232 292.5h1M235 292.5h1M238 293.5h1M241 294.5h1M244 295.5h1M247 295.5h1M250 296.5h1M253 297.5h1M256 298.5h1M259 298.5h1M262 299.5h1M265 300.5h1M268 301.5h1M271 301.5h1M274 302.5h1M277 303.5h1M280 304.5h1M283 304.5h1M286 305.5h1M289 306.5h1M292 307.5h1M295 307.5h1M298 308.5h1M301 309.5h1M304 310.5h1M307 310.5h1M310 311.5h1M313 312.5h1M316 313.5h1M319 313.5h1M322 314.5h1M325 315.5h1"/>
<path stroke="#f00" d="M304 315.5h1M307 315.5h1M310 315.5h1M313 315.5h1M316 315.5h1M319 315.5h1M322 315.5h1M325 315.5h1M262 316.5h1M265 316.5h1M268 316.5h1M271 316.5h1M274 316.5h1M277 316.5h1M280 316.5h1M283 316.5h1M286 316.5h1M289 316.5h1M292 316.5h1M295 316.5h1M298 316.5h1M301 316.5h1M220 317.5h1M223 317.5h1M226 317.5h1M229 317.5h1M232 317.5h1M235 317.5h1M238 317.5h1M241 317.5h1M244 317.5h1M247 317.5h1M250 317.5h1M253 317.5h1M256 317.5h1M259 317.5h1M178 318.5h1M181 318.5h1M184 318.5h1M187 318.5h1M190 318.5h1M193 318.5h1M196 318.5h1M199 318.5h1M202 318.5h1M205 318.5h1M208 318.5h1M211 318.5h1M214 318.5h1M217 318.5h1M157 319.5h1M160 319.5h1M163 319.5h1M166 319.5h1M169 319.5h1M172 319.5h1M175 319.5h1"/>
<path stroke="#0f0" d="M127 265.5h1M130 266.5h1M133 267.5h1M136 267.5h1M139 268.5h1M142 269.5h1M145 270.5h1M148 270.5h1M151 271.5h1M154 272.5h1M157 273.5h1M160 273.5h1M163 274.5h1M166 275.5h1M169 276.5h1M172 276.5h1M175 277.5h1M178 278.5h1M181 279.5h1M184 279.5h1M187 280.5h1M190 281.5h1M193 282.5h1M196 282.5h1M199 283.5h1M202 284.5h1M205 285.5h1M208 285.5h1M211 286.5h1M214 287.5h1M217 288.5h1M220 288.5h1M223 289.5h1M226 290.5h1M229 291.5h1M232 292.5h1M235 292.5h1M238 293.5h1M241 294.5h1M244 295.5h1M247 295.5h1M250 296.5h1M253 297.5h1M256 298.5h1M259 298.5h1M262 299.5h1M265 300.5h1M268 301.5h1M271 301.5h1M274 302.5h1M277 303.5h1M280 304.5h1M283 304.5h1M286 305.5h1M289 306.5h1M292 307.5h1M295 307.5h1M298 308.5h1M301 309.5h1M304 310.5h1M307 310.5h1M310 311.5h1M313 312.5h1M316 313.5h1M319 313.5h1M322 314.5h1M325 315.5h1"/>
<path stroke="#ff0" d="M127 265.5h1"/>
<path stroke="#0ff" d="M128.5 209v2M129.5 211v4M130.5 215v4M131.5 219v4M132.5 223v4M133.5 227v3M134.5 230v4M135.5 234v4M136.5 238v4M137.5 242v4M138.5 246v3M139.5 249v4M140.5 253v4M141.5 257v4M142.5 261v3M143.5 264v4M144.5 268v4M145.5 272v4M146.5 276v4M147.5 280v3M148.5 283v4M149.5 287v4M150.5 291v4M151.5 295v4M152.5 299v3M153.5 302v4M154.5 306v4M155.5 310v4M156.5 314v4M157.5 318v2"/>
<path stroke="#c0c0c0" d="M0 0.5h640M0 1.5h1M479 1.5h1M639 1.5h1M0 2.5h1M479 2.5h1M639 2.5h1M0 3.5h1M479 3.5h1M639 3.5h1M0 4.5h1M479 4.5h1M639 4.5h1M0 5.5h1M479 5.5h1M639 5.5h1M0 6.5h1M479 6.5h1M639 6.5h1M0 7.5h1M479 7.5h1M639 7.5h1M0 8.5h1M479 8.5h1M639 8.5h1M0 9.5h1M479 9.5h1M639 9.5h1M0 10.5h1M479 10.5h1M639 10.5h1M0 11.5h1M479 11.5h1M639 11.5h1M0 12.5h1M479 12.5h1M639 12.5h1M0 13.5h1M479 13.5h1M639 13.5h1M0 14.5h1M479 14.5h1M639 14.5h1M0 15.5h1M479 15.5h1M639 15.5h1M0 16.5h1M479 16.5h1M639 16.5h1M0 17.5h1M479 17.5h1M639 17.5h1M0 18.5h1M479 18.5h1M639 18.5h1M0 19.5h1M479 19.5h1M639 19.5h1M0 20.5h1M479 20.5h1M639 20.5h1M0 21.5h1M479 21.5h1M639 21.5h1M0 22.5h1M479 22.5h1M639 22.5h1M0 23.5h1M479 23.5h1M639 23.5h1M0 24.5h1M479 24.5h1M639 24.5h1M0 25.5h1M479 25.5h1M639 25.5h1M0 26.5h1M479 26.5h1M639 26.5h1M0 27.5h1M479 27.5h1M639 27.5h1M0 28.5h1M479 28.5h1M639 28.5h1M0 29.5h1M479 29.5h1M639 29.5h1M0 30.5h1M479 30.5h1M639 30.5h1M0 31.5h1M479 31.5h1M639 31.5h1M0 32.5h1M479 32.5h1M639 32.5h1M0 33.5h1M479 33.5h1M639 33.5h1M0 34.5h1M479 34.5h1M639 34.5h1M0 35.5h1M479 35.5h1M639 35.5h1M0 36.5h1M479 36.5h1M639 36.5h1M0 37.5h1M479 37.5h1M639 37.5h1M0 38.5h1M479 38.5h1M639 38.5h1M0 39.5h1M479 39.5h1M639 39.5h1M0 40.5h1M479 40.5h1M639 40.5h1M0 41.5h1M479 41.5h1M639 41.5h1M0 42.5h1M479 42.5h1M639 42.5h1M0 43.5h1M479 43.5h1M639 43.5h1M0 44.5h1M479 44.5h1M639 44.5h1M0 45.5h1M479 45.5h1M639 45.5h1M0 46.5h1M479 46.5h1M639 46.5h1M0 47.5h1M479 47.5h1M639 47.5h1M0 48.5h1M479 48.5h1M639 48.5h1M0 49.5h1M479 49.5h1M639 49.5h1M0 50.5h1M479 50.5h1M639 50.5h1M0 51.5h1M479 51.5h1M639 51.5h1M0 52.5h1M479 52.5h1M639 52.5h1M0 53.5h1M479 53.5h1M639 53.5h1M0 54.5h1M479 54.5h1M639 54.5h1M0 55.5h1M479 55.5h1M639 55.5h1M0 56.5h1M479 56.5h1M639 56.5h1M0 57.5h1M479 57.5h1M639 57.5h1M0 58.5h1M479 58.5h1M639 58.5h1M0 59.5h1M479 59.5h1M639 59.5h1M0 60.5h1M479 60.5h1M639 60.5h1M0 61.5h1M479 61.5h1M639 61.5h1M0 62.5h1M479 62.5h1M639 62.5h1M0 63.5h1M479 63.5h1M639 63.5h1M0 64.5h1M479 64.5h1M639 64.5h1M0 65.5h1M479 65.5h1M639 65.5h1M0 66.5h1M479 66.5h1M639 66.5h1M0 67.5h1M479 67.5h1M639 67.5h1M0 68.5h1M479 68.5h1M639 68.5h1M0 69.5h1M479 69.5h1M639 69.5h1M0 70.5h1M479 70.5h1M639 70.5h1M0 71.5h1M479 71.5h1M639 71.5h1M0 72.5h1M479 72.5h1M639 72.5h1M0 73.5h1M479 73.5h1M639 73.5h1M0 74.5h1M479 74.5h1M639 74.5h1M0 75.5h1M479 75.5h1M639 75.5h1M0 76.5h1M479 76.5h1M639 76.5h1M0 77.5h1M479 77.5h1M639 77.5h1M0 78.5h1M479 78.5h1M639 78.5h1M0 79.5h1M479 79.5h1M639 79.5h1M0 80.5h1M479 80.5h1M639 80.5h1M0 81.5h1M479 81.5h1M639 81.5h1M0 82.5h1M479 82.5h1M639 82.5h1M0 83.5h1M479 83.5h1M639 83.5h1M0 84.5h1M479 84.5h1M639 84.5h1M0 85.5h1M479 85.5h1M639 85.5h1M0 86.5h1M479 86.5h1M639 86.5h1M0 87.5h1M479 87.5h1M639 87.5h1M0 88.5h1M479 88.5h1M639 88.5h1M0 89.5h1M479 89.5h1M639 89.5h1M0 90.5h1M479 90.5h1M639 90.5h1M0 91.5h1M479 91.5h1M639 91.5h1M0 92.5h1M479 92.5h1M639 92.5h1M0 93.5h1M479 93.5h1M639 93.5h1M0 94.5h1M479 94.5h1M639 94.5h1M0 95.5h1M479 95.5h1M639 95.5h1M0 96.5h1M479 96.5h1M639 96.5h1M0 97.5h1M479 97.5h1M639 97.5h1M0 98.5h1M479 98.5h1M639 98.5h1M0 99.5h1M479 99.5h1M639 99.5h1M0 100.5h1M479 100.5h1M639 100.5h1M0 101.5h1M479 101.5h1M639 101.5h1M0 102.5h1M479 102.5h1M639 102.5h1M0 103.5h1M479 103.5h1M639 103.5h1M0 104.5h1M479 104.5h1M639 104.5h1M0 105.5h1M479 105.5h1M639 105.5h1M0 106.5h1M479 106.5h1M639 106.5h1M0 107.5h1M479 107.5h1M639 107.5h1M0 108.5h1M479 108.5h1M639 108.5h1M0 109.5h1M479 109.5h1M639 109.5h1M0 110.5h1M479 110.5h1M639 110.5h1M0 111.5h1M479 111.5h1M639 111.5h1M0 112.5h1M479 112.5h1M639 112.5h1M0 113.5h1M479 113.5h1M639 113.5h1M0 114.5h1M479 114.5h1M639 114.5h1M0 115.5h1M479 115.5h1M639 115.5h1M0 116.5h1M479 116.5h1M639 116.5h1M0 117.5h1M479 117.5h1M639 117.5h1M0 118.5h1M479 118.5h1M639 118.5h1M0 119.5h1M479 119.5h1M639 119.5h1M0 120.5h1M479 120.5h1M639 120.5h1M0 121.5h1M479 121.5h1M639 121.5h1M0 122.5h1M479 122.5h1M639 122.5h1M0 123.5h1M479 123.5h1M639 123.5h1M0 124.5h1M479 124.5h1M639 124.5h1M0 125.5h1M479 125.5h1M639 125.5h1M0 126.5h1M479 126.5h1M639 126.5h1M0 127.5h1M479 127.5h1M639 127.5h1M0 128.5h1M479 128.5h1M639 128.5h1M0 129.5h1M479 129.5h1M639 129.5h1M0 130.5h1M479 130.5h1M639 130.5h1M0 131.5h1M479 131.5h1M639 131.5h1M0 132.5h1M479 132.5h1M639 132.5h1M0 133.5h1M479 133.5h1M639 133.5h1M0 134.5h1M479 134.5h1M639 134.5h1M0 135.5h1M479 135.5h1M639 135.5h1M0 136.5h1M479 136.5h1M639 136.5h1M0 137.5h1M479 137.5h1M639 137.5h1M0 138.5h1M479 138.5h1M639 138.5h1M0 139.5h1M479 139.5h1M639 139.5h1M0 140.5h1M479 140.5h1M639 140.5h1M0 141.5h1M479 141.5h1M639 141.5h1M0 142.5h1M479 142.5h1M639 142.5h1M0 143.5h1M479 143.5h1M639 143.5h1M0 144.5h1M479 144.5h1M639 144.5h1M0 145.5h1M479 145.5h1M639 145.5h1M0 146.5h1M479 146.5h1M639 146.5h1M0 147.5h1M479 147.5h1M639 147.5h1M0 148.5h1M479 148.5h1M639 148.5h1M0 149.5h1M479 149.5h1M639 149.5h1M0 150.5h1M479 150.5h1M639 150.5h1M0 151.5h1M479 151.5h1M639 151.5h1M0 152.5h1M479 152.5h1M639 152.5h1M0 153.5h1M479 153.5h1M639 153.5h1M0 154.5h1M479 154.5h1M639 154.5h1M0 155.5h1M479 155.5h1M639 155.5h1M0 156.5h1M479 156.5h1M639 156.5h1M0 157.5h1M479 157.5h1M639 157.5h1M0 158.5h1M479 158.5h1M639 158.5h1M0 159.5h1M479 159.5h1M639 159.5h1M0 160.5h1M479 160.5h1M639 160.5h1M0 161.5h1M479 161.5h1M639 161.5h1M0 162.5h1M479 162.5h1M639 162.5h1M0 163.5h1M479 163.5h1M639 163.5h1M0 164.5h1M479 164.5h1M639 164.5h1M0 165.5h1M479 165.5h1M639 165.5h1M0 166.5h1M479 166.5h1M639 166.5h1M0 167.5h1M479 167.5h1M639 167.5h1M0 168.5h1M479 168.5h1M639 168.5h1M0 169.5h1M479 169.5h1M639 169.5h1M0 170.5h1M479 170.5h1M639 170.5h1M0 171.5h1M479 171.5h1M639 171.5h1M0 172.5h1M479 172.5h1M639 172.5h1M0 173.5h1M479 173.5h1M639 173.5h1M0 174.5h1M479 174.5h1M639 174.5h1M0 175.5h1M479 175.5h1M639 175.5h1M0 176.5h1M479 176.5h1M639 176.5h1M0 177.5h1M479 177.5h1M639 177.5h1M0 178.5h1M479 178.5h1M639 178.5h1M0 179.5h1M479 179.5h1M639 179.5h1M0 180.5h1M479 180.5h1M639 180.5h1M0 181.5h1M479 181.5h1M639 181.5h1M0 182.5h1M479 182.5h1M639 182.5h1M0 183.5h1M479 183.5h1M639 183.5h1M0 184.5h1M479 184.5h1M639 184.5h1M0 185.5h1M479 185.5h1M639 185.5h1M0 186.5h1M479 186.5h1M639 186.5h1M0 187.5h1M479 187.5h1M639 187.5h1M0 188.5h1M479 188.5h1M639 188.5h1M0 189.5h1M479 189.5h1M639 189.5h1M0 190.5h1M479 190.5h1M639 190.5h1M0 191.5h1M479 191.5h1M639 191.5h1M0 192.5h1M479 192.5h1M639 192.5h1M0 193.5h1M479 193.5h1M639 193.5h1M0 194.5h1M479 194.5h1M639 194.5h1M0 195.5h1M479 195.5h1M639 195.5h1M0 196.5h1M479 196.5h1M639 196.5h1M0 197.5h1M479 197.5h1M639 197.5h1M0 198.5h1M479 198.5h1M639 198.5h1M0 199.5h1M479 199.5h1M639 199.5h1M0 200.5h1M479 200.5h1M639 200.5h1M0 201.5h1M479 201.5h1M639 201.5h1M0 202.5h1M479 202.5h1M639 202.5h1M0 203.5h1M479 203.5h1M639 203.5h1M0 204.5h1M479 204.5h1M639 204.5h1M0 205.5h1M479 205.5h1M639 205.5h1M0 206.5h1M479 206.5h1M639 206.5h1M0 207.5h1M479 207.5h1M639 207.5h1M0 208.5h1M479 208.5h1M639 208.5h1M0 209.5h1M479 209.5h1M639 209.5h1M0 210.5h1M479 210.5h1M639 210.5h1M0 211.5h1M479 211.5h1M639 211.5h1M0 212.5h1M479 212.5h1M639 212.5h1M0 213.5h1M479 213.5h1M639 213.5h1M0 214.5h1M479 214.5h1M639 214.5h1M0 215.5h1M479 215.5h1M639 215.5h1M0 216.5h1M479 216.5h1M639 216.5h1M0 217.5h1M479 217.5h1M639 217.5h1M0 218.5h1M479 218.5h1M639 218.5h1M0 219.5h1M479 219.5h1M639 219.5h1M0 220.5h1M479 220.5h1M639 220.5h1M0 221.5h1M479 221.5h1M639 221.5h1M0 222.5h1M479 222.5h1M639 222.5h1M0 223.5h1M479 223.5h1M639 223.5h1M0 224.5h1M479 224.5h1M639 224.5h1M0 225.5h1M479 225.5h1M639 225.5h1M0 226.5h1M479 226.5h1M639 226.5h1M0 227.5h1M479 227.5h1M639 227.5h1M0 228.5h1M479 228.5h1M639 228.5h1M0 229.5h1M479 229.5h1M639 229.5h1M0 230.5h1M479 230.5h1M639 230.5h1M0 231.5h1M479 231.5h1M639 231.5h1M0 232.5h1M479 232.5h1M639 232.5h1M0 233.5h1M479 233.5h1M639 233.5h1M0 234.5h1M479 234.5h1M639 234.5h1M0 235.5h1M479 235.5h1M639 235.5h1M0 236.5h1M479 236.5h1M639 236.5h1M0 237.5h1M479 237.5h1M639 237.5h1M0 238.5h1M479 238.5h1M639 238.5h1M0 239.5h1M479 239.5h1M639 239.5h1M0 240.5h1M479 240.5h1M639 240.5h1M0 241.5h1M479 241.5h1M639 241.5h1M0 242.5h1M479 242.5h1M639 242.5h1M0 243.5h1M479 243.5h1M639 243.5h1M0 244.5h1M479 244.5h1M639 244.5h1M0 245.5h1M479 245.5h1M639 245.5h1M0 246.5h1M479 246.5h1M639 246.5h1M0 247.5h1M479 247.5h1M639 247.5h1M0 248.5h1M479 248.5h1M639 248.5h1M0 249.5h1M479 249.5h1M639 249.5h1M0 250.5h1M479 250.5h1M639 250.5h1M0 251.5h1M479 251.5h1M639 251.5h1M0 252.5h1M479 252.5h1M639 252.5h1M0 253.5h1M479 253.5h1M639 253.5h1M0 254.5h1M479 254.5h1M639 254.5h1M0 255.5h1M479 255.5h1M639 255.5h1M0 256.5h1M479 256.5h1M639 256.5h1M0 257.5h1M479 257.5h1M639 257.5h1M0 258.5h1M479 258.5h1M639 258.5h1M0 259.5h1M479 259.5h1M639 259.5h1M0 260.5h1M479 260.5h1M639 260.5h1M0 261.5h1M479 261.5h1M639 261.5h1M0 262.5h1M479 262.5h1M639 262.5h1M0 263.5h1M479 263.5h1M639 263.5h1M0 264.5h1M479 264.5h1M639 264.5h1M0 265.5h1M479 265.5h1M639 265.5h1M0 266.5h1M479 266.5h1M639 266.5h1M0 267.5h1M479 267.5h1M639 267.5h1M0 268.5h1M479 268.5h1M639 268.5h1M0 269.5h1M479 269.5h1M639 269.5h1M0 270.5h1M479 270.5h1M639 270.5h1M0 271.5h1M479 271.5h1M639 271.5h1M0 272.5h1M479 272.5h1M639 272.5h1M0 273.5h1M479 273.5h1M639 273.5h1M0 274.5h1M479 274.5h1M639 274.5h1M0 275.5h1M479 275.5h1M639 275.5h1M0 276.5h1M479 276.5h1M639 276.5h1M0 277.5h1M479 277.5h1M639 277.5h1M0 278.5h1M479 278.5h1M639 278.5h1M0 279.5h1M479 279.5h1M639 279.5h1M0 280.5h1M479 280.5h1M639 280.5h1M0 281.5h1M479 281.5h1M639 281.5h1M0 282.5h1M479 282.5h1M639 282.5h1M0 283.5h1M479 283.5h1M639 283.5h1M0 284.5h1M479 284.5h1M639 284.5h1M0 285.5h1M479 285.5h1M639 285.5h1M0 286.5h1M479 286.5h1M639 286.5h1M0 287.5h1M479 287.5h1M639 287.5h1M0 288.5h1M479 288.5h1M639 288.5h1M0 289.5h1M479 289.5h1M639 289.5h1M0 290.5h1M479 290.5h1M639 290.5h1M0 291.5h1M479 291.5h1M639 291.5h1M0 292.5h1M479 292.5h1M639 292.5h1M0 293.5h1M479 293.5h1M639 293.5h1M0 294.5h1M479 294.5h1M639 294.5h1M0 295.5h1M479 295.5h1M639 295.5h1M0 296.5h1M479 296.5h1M639 296.5h1M0 297.5h1M479 297.5h1M639 297.5h1M0 298.5h1M479 298.5h1M639 298.5h1M0 299.5h1M479 299.5h1M639 299.5h1M0 300.5h1M479 300.5h1M639 300.5h1M0 301.5h1M479 301.5h1M639 301.5h1M0 302.5h1M479 302.5h1M639 302.5h1M0 303.5h1M479 303.5h1M639 303.5h1M0 304.5h1M479 304.5h1M639 304.5h1M0 305.5h1M479 305.5h1M639 305.5h1M0 306.5h1M479 306.5h1M639 306.5h1M0 307.5h1M479 307.5h1M639 307.5h1M0 308.5h1M479 308.5h1M639 308.5h1M0 309.5h1M479 309.5h1M639 309.5h1M0 310.5h1M479 310.5h1M639 310.5h1M0 311.5h1M479 311.5h1M639 311.5h1M0 312.5h1M479 312.5h1M639 312.5h1M0 313.5h1M479 313.5h1M639 313.5h1M0 314.5h1M479 314.5h1M639 314.5h1M0 315.5h1M479 315.5h1M639 315.5h1M0 316.5h1M479 316.5h1M639 316.5h1M0 317.5h1M479 317.5h1M639 317.5h1M0 318.5h1M479 318.5h1M639 318.5h1M0 319.5h1M479 319.5h1M639 319.5h1M0 320.5h1M479 320.5h1M639 320.5h1M0 321.5h1M479 321.5h1M639 321.5h1M0 322.5h1M479 322.5h1M639 322.5h1M0 323.5h1M479 323.5h1M639 323.5h1M0 324.5h1M479 324.5h1M639 324.5h1M0 325.5h1M479 325.5h1M639 325.5h1M0 326.5h1M479 326.5h1M639 326.5h1M0 327.5h1M479 327.5h1M639 327.5h1M0 328.5h1M479 328.5h1M639 328.5h1M0 329.5h1M479 329.5h1M639 329.5h1M0 330.5h1M479 330.5h1M639 330.5h1M0 331.5h1M479 331.5h1M639 331.5h1M0 332.5h1M479 332.5h1M639 332.5h1M0 333.5h1M479 333.5h1M639 333.5h1M0 334.5h1M479 334.5h1M639 334.5h1M0 335.5h1M479 335.5h1M639 335.5h1M0 336.5h1M479 336.5h1M639 336.5h1M0 337.5h1M479 337.5h1M639 337.5h1M0 338.5h1M479 338.5h1M639 338.5h1M0 339.5h1M479 339.5h1M639 339.5h1M0 340.5h1M479 340.5h1M639 340.5h1M0 341.5h1M479 341.5h1M639 341.5h1M0 342.5h1M479 342.5h1M639 342.5h1M0 343.5h1M479 343.5h1M639 343.5h1M0 344.5h1M479 344.5h1M639 344.5h1M0 345.5h1M479 345.5h1M639 345.5h1M0 346.5h1M479 346.5h1M639 346.5h1M0 347.5h1M479 347.5h1M639 347.5h1M0 348.5h1M479 348.5h1M639 348.5h1M0 349.5h1M479 349.5h1M639 349.5h1M0 350.5h1M479 350.5h1M639 350.5h1M0 351.5h1M479 351.5h1M639 351.5h1M0 352.5h1M479 352.5h1M639 352.5h1M0 353.5h1M479 353.5h1M639 353.5h1M0 354.5h1M479 354.5h1M639 354.5h1M0 355.5h1M479 355.5h1M639 355.5h1M0 356.5h1M479 356.5h1M639 356.5h1M0 357.5h1M479 357.5h1M639 357.5h1M0 358.5h1M479 358.5h1M639 358.5h1M0 359.5h1M479 359.5h1M639 359.5h1M0 360.5h1M479 360.5h1M639 360.5h1M0 361.5h1M479 361.5h1M639 361.5h1M0 362.5h1M479 362.5h1M639 362.5h1M0 363.5h1M479 363.5h1M639 363.5h1M0 364.5h1M479 364.5h1M639 364.5h1M0 365.5h1M479 365.5h1M639 365.5h1M0 366.5h1M479 366.5h1M639 366.5h1M0 367.5h1M479 367.5h1M639 367.5h1M0 368.5h1M479 368.5h1M639 368.5h1M0 369.5h1M479 369.5h1M639 369.5h1M0 370.5h1M479 370.5h1M639 370.5h1M0 371.5h1M479 371.5h1M639 371.5h1M0 372.5h1M479 372.5h1M639 372.5h1M0 373.5h1M479 373.5h1M639 373.5h1M0 374.5h1M479 374.5h1M639 374.5h1M0 375.5h1M479 375.5h1M639 375.5h1M0 376.5h1M479 376.5h1M639 376.5h1M0 377.5h1M479 377.5h1M639 377.5h1M0 378.5h1M479 378.5h1M639 378.5h1M0 379.5h1M479 379.5h1M639 379.5h1M0 380.5h1M479 380.5h1M639 380.5h1M0 381.5h1M479 381.5h1M639 381.5h1M0 382.5h1M479 382.5h1M639 382.5h1M0 383.5h1M479 383.5h1M639 383.5h1M0 384.5h1M479 384.5h1M639 384.5h1M0 385.5h1M479 385.5h1M639 385.5h1M0 386.5h1M479 386.5h1M639 386.5h1M0 387.5h1M479 387.5h1M639 387.5h1M0 388.5h1M479 388.5h1M639 388.5h1M0 389.5h1M479 389.5h1M639 389.5h1M0 390.5h1M479 390.5h1M639 390.5h1M0 391.5h1M479 391.5h1M639 391.5h1M0 392.5h1M479 392.5h1M639 392.5h1M0 393.5h1M479 393.5h1M639 393.5h1M0 394.5h1M479 394.5h1M639 394.5h1M0 395.5h1M479 395.5h1M639 395.5h1M0 396.5h1M479 396.5h1M639 396.5h1M0 397.5h1M479 397.5h1M639 397.5h1M0 398.5h1M479 398.5h1M639 398.5h1M0 399.5h1M479 399.5h1M639 399.5h1M0 400.5h1M479 400.5h1M639 400.5h1M0 401.5h1M479 401.5h1M639 401.5h1M0 402.5h1M479 402.5h1M639 402.5h1M0 403.5h1M479 403.5h1M639 403.5h1M0 404.5h1M479 404.5h1M639 404.5h1M0 405.5h1M479 405.5h1M639 405.5h1M0 406.5h1M479 406.5h1M639 406.5h1M0 407.5h1M479 407.5h1M639 407.5h1M0 408.5h1M479 408.5h1M639 408.5h1M0 409.5h1M479 409.5h1M639 409.5h1M0 410.5h1M479 410.5h1M639 410.5h1M0 411.5h1M479 411.5h1M639 411.5h1M0 412.5h1M479 412.5h1M639 412.5h1M0 413.5h1M479 413.5h1M639 413.5h1M0 414.5h1M479 414.5h1M639 414.5h1M0 415.5h1M479 415.5h1M639 415.5h1M0 416.5h1M479 416.5h1M639 416.5h1M0 417.5h1M479 417.5h1M639 417.5h1M0 418.5h1M479 418.5h1M639 418.5h1M0 419.5h1M479 419.5h1M639 419.5h1M0 420.5h1M479 420.5h1M639 420.5h1M0 421.5h1M479 421.5h1M639 421.5h1M0 422.5h1M479 422.5h1M639 422.5h1M0 423.5h1M479 423.5h1M639 423.5h1M0 424.5h1M479 424.5h1M639 424.5h1M0 425.5h1M479 425.5h1M639 425.5h1M0 426.5h1M479 426.5h1M639 426.5h1M0 427.5h1M479 427.5h1M639 427.5h1M0 428.5h1M479 428.5h1M639 428.5h1M0 429.5h1M479 429.5h1M639 429.5h1M0 430.5h1M479 430.5h1M639 430.5h1M0 431.5h1M479 431.5h1M639 431.5h1M0 432.5h1M479 432.5h1M639 432.5h1M0 433.5h1M479 433.5h1M639 433.5h1M0 434.5h1M479 434.5h1M639 434.5h1M0 435.5h1M479 435.5h1M639 435.5h1M0 436.5h1M479 436.5h1M639 436.5h1M0 437.5h1M479 437.5h1M639 437.5h1M0 438.5h1M479 438.5h1M639 438.5h1M0 439.5h1M479 439.5h1M639 439.5h1M0 440.5h1M479 440.5h1M639 440.5h1M0 441.5h1M479 441.5h1M639 441.5h1M0 442.5h1M479 442.5h1M639 442.5h1M0 443.5h1M479 443.5h1M639 443.5h1M0 444.5h1M479 444.5h1M639 444.5h1M0 445.5h1M479 445.5h1M639 445.5h1M0 446.5h1M479 446.5h1M639 446.5h1M0 447.5h1M479 447.5h1M639 447.5h1M0 448.5h1M479 448.5h1M639 448.5h1M0 449.5h1M479 449.5h1M639 449.5h1M0 450.5h1M479 450.5h1M639 450.5h1M0 451.5h1M479 451.5h1M639 451.5h1M0 452.5h1M479 452.5h1M639 452.5h1M0 453.5h1M479 453.5h1M639 453.5h1M0 454.5h1M479 454.5h1M639 454.5h1M0 455.5h1M479 455.5h1M639 455.5h1M0 456.5h1M479 456.5h1M639 456.5h1M0 457.5h1M479 457.5h1M639 457.5h1M0 458.5h1M479 458.5h1M639 458.5h1M0 459.5h1M479 459.5h1M639 459.5h1M0 460.5h1M479 460.5h1M639 460.5h1M0 461.5h1M479 461.5h1M639 461.5h1M0 462.5h1M479 462.5h1M639 462.5h1M0 463.5h1M479 463.5h1M639 463.5h1M0 464.5h1M479 464.5h1M639 464.5h1M0 465.5h1M479 465.5h1M639 465.5h1M0 466.5h1M479 466.5h1M639 466.5h1M0 467.5h1M479 467.5h1M639 467.5h1M0 468.5h1M479 468.5h1M639 468.5h1M0 469.5h1M479 469.5h1M639 469.5h1M0 470.5h1M479 470.5h1M639 470.5h1M0 471.5h1M479 471.5h1M639 471.5h1M0 472.5h1M479 472.5h1M639 472.5h1M0 473.5h1M479 473.5h1M639 473.5h1M0 474.5h1M479 474.5h1M639 474.5h1M0 475.5h1M479 475.5h1M639 475.5h1M0 476.5h1M479 476.5h1M639 476.5h1M0 477.5h1M479 477.5h1M639 477.5h1M0 478.5h1M479 478.5h1M639 478.5h1M0 479.5h640"/>
<path stroke="#f00" d="M626 136.5h1M629 136.5h1M632 136.5h1M625 137.5h2M628 137.5h2M631 137.5h1M625 138.5h1M627 138.5h2M630 138.5h2M624 139.5h1M627 139.5h1M630 139.5h1M626 141.5h1M629 141.5h1M632 141.5h1M625 142.5h2M628 142.5h2M631 142.5h1M625 143.5h1M627 143.5h2M630 143.5h2M624 144.5h1M627 144.5h1M630 144.5h1"/>
<path stroke="#ff0" d="M625 146.5h2M630 146.5h2M624 147.5h1M627 147.5h1M629 147.5h1M632 147.5h1M624 148.5h1M627 148.5h1M629 148.5h1M632 148.5h1M625 149.5h1M627 149.5h1M629 149.5h1M631 149.5h1M628 150.5h1M628 151.5h1M628 152.5h1M628 153.5h1M628 154.5h1"/>
<path stroke="#0f0" d="M625.5 156v1M625.5 160v3M626.5 157v1M626.5 159v1M626.5 163v1M627.5 158v1M627.5 164v1M628.5 158v1M628.5 164v1M629.5 158v1M629.5 164v1M630.5 157v1M630.5 159v1M630.5 163v1M631.5 156v1M631.5 160v3"/>
<path stroke="#00f" d="M625.5 166v1M625.5 174v1M626.5 167v1M626.5 173v1M627.5 167v7M628.5 167v1M628.5 173v1M629.5 167v1M629.5 173v1M630.5 167v7M631.5 167v1M631.5 173v1M632.5 166v1M632.5 174v1"/>
<path stroke="#f00" d="M627 177.5h3M625 178.5h2M630 178.5h2M624 179.5h1M629 179.5h1M632 179.5h1M625 180.5h2M629 180.5h1M632 180.5h1M624 181.5h1M627 181.5h1M630 181.5h2M624 182.5h1M627 182.5h1M632 182.5h1M625 183.5h2M630 183.5h2M627 184.5h3"/>
<path stroke="#ff0" d="M627 187.5h3M625 188.5h2M630 188.5h2M624 189.5h1M629 189.5h1M632 189.5h1M625 190.5h2M629 190.5h1M632 190.5h1M624 191.5h1M627 191.5h1M630 191.5h2M624 192.5h1M627 192.5h1M632 192.5h1M625 193.5h2M630 193.5h2M627 194.5h3"/>
<path stroke="#0f0" d="M627 196.5h3M626 197.5h1M630 197.5h1M625 198.5h1M631 198.5h1M625 199.5h1M631 199.5h1M625 200.5h1M631 200.5h1M626 201.5h1M630 201.5h1M624 202.5h1M626 202.5h1M630 202.5h1M625 203.5h1M631 203.5h1M632 204.5h1"/>
<path stroke="#00f" d="M627 208.5h3M626 209.5h1M630 209.5h1M626 210.5h1M630 210.5h1M624 211.5h4M629 211.5h4M624 213.5h9"/>
<path stroke="#f00" d="M624 216.5h1M626 216.5h1M628 216.5h1M625 217.5h1M627 217.5h1M629 217.5h1M625 218.5h1M627 218.5h1M629 218.5h1M625 219.5h1M627 219.5h1M629 219.5h1M625 220.5h1M627 220.5h1M629 220.5h1M625 221.5h1M627 221.5h1M629 221.5h1M625 222.5h1M627 222.5h1M629 222.5h1M632 222.5h1M625 223.5h1M627 223.5h1M629 223.5h1M632 223.5h1M630 224.5h2"/>
<path stroke="#ff0" d="M630 226.5h3M631 227.5h2M630 228.5h1M632 228.5h1M625 229.5h1M629 229.5h1M626 230.5h1M628 230.5h1M627 231.5h1M626 232.5h1M628 232.5h1M625 233.5h1M629 233.5h1M624 234.5h1"/>
<path stroke="#0f0" d="M625 236.5h1M628 236.5h1M630 236.5h2M624 237.5h2M628 237.5h2M632 237.5h1M625 238.5h1M627 238.5h1M629 238.5h1M632 238.5h1M625 239.5h1M627 239.5h1M630 239.5h2M625 240.5h1M627 240.5h1M631 240.5h1M626 241.5h1M632 241.5h1M626 242.5h1M632 242.5h1M626 243.5h1M632 243.5h1M631 244.5h1"/>
<path stroke="#00f" d="M625 246.5h1M628 246.5h1M630 246.5h2M624 247.5h2M628 247.5h2M632 247.5h1M625 248.5h1M627 248.5h1M629 248.5h1M632 248.5h1M625 249.5h1M627 249.5h1M630 249.5h2M625 250.5h1M627 250.5h1M631 250.5h1M626 251.5h1M632 251.5h1M626 252.5h1M632 252.5h1M626 253.5h1M632 253.5h1M631 254.5h1"/>
<path stroke="#f00" d="M627 266.5h3M625 267.5h2M630 267.5h2M625 268.5h1M631 268.5h1M624 269.5h1M632 269.5h1M624 270.5h1M628 270.5h1M632 270.5h1M624 271.5h1M632 271.5h1M625 272.5h1M631 272.5h1M625 273.5h2M630 273.5h2M627 274.5h3"/>
<path stroke="#00f" d="M625.5 277v1M625.5 283v1M626.5 276v1M626.5 278v1M626.5 282v1M626.5 284v1M627.5 276v1M627.5 279v3M627.5 284v1M628.5 276v1M628.5 284v1M629.5 277v1M629.5 283v1M630.5 277v2M630.5 282v2M631.5 279v3"/>
<path stroke="#0f0" d="M626.5 286v1M626.5 288v3M626.5 293v1M627.5 287v1M627.5 291v1M627.5 293v1M628.5 287v1M628.5 291v4M629.5 287v1M629.5 291v1M629.5 293v1M630.5 286v1M630.5 288v3M630.5 293v1"/>
<path stroke="#ff0" d="M626.5 297v3M626.5 302v1M627.5 296v1M627.5 300v1M627.5 302v1M628.5 296v1M628.5 300v5M629.5 296v1M629.5 300v1M629.5 302v1M630.5 297v3M630.5 302v1"/>
<path stroke="#f00" d="M630 306.5h3M631 307.5h2M630 308.5h1M632 308.5h1M626 309.5h2M629 309.5h1M625 310.5h1M628 310.5h1M624 311.5h1M629 311.5h1M624 312.5h1M629 312.5h1M625 313.5h1M628 313.5h1M626 314.5h2M625.5 317v1M625.5 322v2M626.5 317v1M626.5 320v2M626.5 323v1M627.5 318v2M627.5 323v1M628.5 323v1M629.5 323v1M630.5 317v8M631.5 316v1M631.5 323v1M632.5 323v1"/>
<path stroke="#ff0" d="M625.5 327v1M626.5 327v1M627.5 326v8M628.5 327v1M628.5 330v1M629.5 327v1M629.5 329v1M630.5 329v1M630.5 332v2M631.5 330v2M631.5 334v1"/>
<path stroke="#0f0" d="M625.5 336v1M625.5 341v1M626.5 337v4M627.5 339v1M627.5 342v2M628.5 338v5M628.5 344v1M629.5 339v1M629.5 342v2M630.5 337v4M631.5 336v1M631.5 341v1"/>
<path stroke="#00f" d="M625 346.5h1M628 346.5h1M631 346.5h1M624 347.5h2M627 347.5h3M631 347.5h2M625 348.5h1M628 348.5h1M631 348.5h1M626 349.5h1M628 349.5h1M630 349.5h1M627 350.5h3M628 351.5h1M626 352.5h5M628 353.5h1M628 354.5h1M625.5 356v3M626.5 359v1M626.5 362v1M627.5 357v1M627.5 360v1M627.5 362v1M628.5 356v1M628.5 358v1M628.5 360v5M629.5 357v1M629.5 360v1M629.5 362v1M630.5 359v1M630.5 362v1M631.5 356v3"/>
<g fill="none"></g>
<text transform="translate(85.5 309) scale(.85 1)" fill="#f00">1</text>
<text transform="translate(162.5 393) scale(.85 1)" fill="#ff0">2</text>
<text transform="translate(243.5 412) scale(.85 1)" fill="#0f0">3</text>
<text transform="translate(309.5 396) scale(.85 1)" fill="#00f">4</text>
<text transform="translate(362.5 358) scale(.85 1)" fill="#f00">5</text>
<text transform="translate(400.5 289) scale(.85 1)" fill="#ff0">6</text>
<text transform="translate(393.5 179) scale(.85 1)" fill="#0f0">7</text>
<text transform="translate(316.5 95) scale(.85 1)" fill="#00f">8</text>
<text transform="translate(235.5 76) scale(.85 1)" fill="#f00">9</text>
<text transform="translate(170.5 92) scale(.85 1)" letter-spacing="2.3" fill="#ff0">10</text>
<text transform="translate(117.5 130) scale(.85 1)" letter-spacing="2.3" fill="#0f0">11</text>
<text transform="translate(79.5 199) scale(.85 1)" letter-spacing="2.3" fill="#00f">12</text>
</svg>
<div id="sb">
<div class="r" style="top:0px"><span class="w">Astrolog 5.41G</span></div>
<div class="r" style="top:10px"><span class="g">Chart of the Moment</span></div>
<div class="r" style="top:20px"><span class="w">Sun March 15, 2026</span></div>
<div class="r" style="top:30px"><span class="w"> 6:15:00am (DT -8:00 GMT)</span></div>
<div class="r" style="top:40px"><span class="g">San Francisco, CA</span></div>
<div class="r" style="top:50px"><span class="g">122°41'00&quot;W 37°79'00&quot;N</span></div>
<div class="r" style="top:60px"><span class="g">Placidus houses.</span></div>
<div class="r" style="top:70px"><span class="g">Tropical, Geocentric.</span></div>
<div class="r" style="top:80px"><span class="w">Julian Day = 2461115.0521</span></div>
<div class="r" style="top:90px"><span class="g">Obliquity = 23°26'09&quot;</span></div>
<div class="r" style="top:100px"><span class="g">Sidereal time: 16:36:54</span></div>
<div class="r" style="top:110px"><span class="g">DeltaT =  95.4623</span></div>
<div class="r" style="top:130px"><span class="cr"> 1st house: </span><span class="cg">26Aqu52</span></div>
<div class="r" style="top:140px"><span class="cy"> 2nd house: </span><span class="cr">12Ari58</span></div>
<div class="r" style="top:150px"><span class="cg"> 3rd house: </span><span class="cy">16Tau16</span></div>
<div class="r" style="top:160px"><span class="cb"> 4th house: </span><span class="cg">10Gem48</span></div>
<div class="r" style="top:170px"><span class="cr"> 5th house: </span><span class="cb"> 2Can21</span></div>
<div class="r" style="top:180px"><span class="cy"> 6th house: </span><span class="cb">25Can27</span></div>
<div class="r" style="top:190px"><span class="cg"> 7th house: </span><span class="cr">26Leo52</span></div>
<div class="r" style="top:200px"><span class="cb"> 8th house: </span><span class="cg">12Lib58</span></div>
<div class="r" style="top:210px"><span class="cr"> 9th house: </span><span class="cb">16Sco16</span></div>
<div class="r" style="top:220px"><span class="cy">10th house: </span><span class="cr">10Sag48</span></div>
<div class="r" style="top:230px"><span class="cg">11th house: </span><span class="cy"> 2Cap21</span></div>
<div class="r" style="top:240px"><span class="cb">12th house: </span><span class="cy">25Cap27</span></div>
<div class="r" style="top:260px"><span class="cr"> Sun: </span><span class="cb">24Pis58</span><span class="w"> </span><span class="g"> - 0°00'</span></div>
<div class="r" style="top:270px"><span class="cb">Moon: </span><span class="cg">11Aqu35</span><span class="w"> </span><span class="g"> - 2°26'</span></div>
<div class="r" style="top:280px"><span class="cg">Merc: </span><span class="cb"> 9Pis55</span><span class="w">R</span><span class="g"> + 2°17'</span></div>
<div class="r" style="top:290px"><span class="cy">Venu: </span><span class="cr">11Ari19</span><span class="w"> </span><span class="g"> - 1°02'</span></div>
<div class="r" style="top:300px"><span class="cr">Mars: </span><span class="cb">10Pis12</span><span class="w"> </span><span class="g"> - 1°05'</span></div>
<div class="r" style="top:310px"><span class="cr">Jupi: </span><span class="cb">15Can07</span><span class="w"> </span><span class="g"> + 0°22'</span></div>
<div class="r" style="top:320px"><span class="cy">Satu: </span><span class="cr"> 3Ari30</span><span class="w"> </span><span class="g"> - 2°07'</span></div>
<div class="r" style="top:330px"><span class="cg">Uran: </span><span class="cy">28Tau08</span><span class="w"> </span><span class="g"> - 0°11'</span></div>
<div class="r" style="top:340px"><span class="cb">Nept: </span><span class="cr"> 1Ari35</span><span class="w"> </span><span class="g"> - 1°18'</span></div>
<div class="r" style="top:350px"><span class="cb">Plut: </span><span class="cg"> 4Aqu54</span><span class="w"> </span><span class="g"> - 3°54'</span></div>
<div class="r" style="top:370px"><span class="g">Fire: 3, Earth: 1,</span></div>
<div class="r" style="top:380px"><span class="g">Air : 2, Water: 4</span></div>
<div class="r" style="top:390px"><span class="g">Car: 4, Fix: 3, Mut: 3</span></div>
<div class="r" style="top:400px"><span class="g">Yang: 5, Yin: 5</span></div>
<div class="r" style="top:410px"><span class="g">M: 2, N: 8, A: 9, D: 1</span></div>
<div class="r" style="top:420px"><span class="g">Ang: 6, Suc: 1, Cad: 3</span></div>
<div class="r" style="top:430px"><span class="g">Learn: 5, Share: 5</span></div>
</div>
</div></body></html>
